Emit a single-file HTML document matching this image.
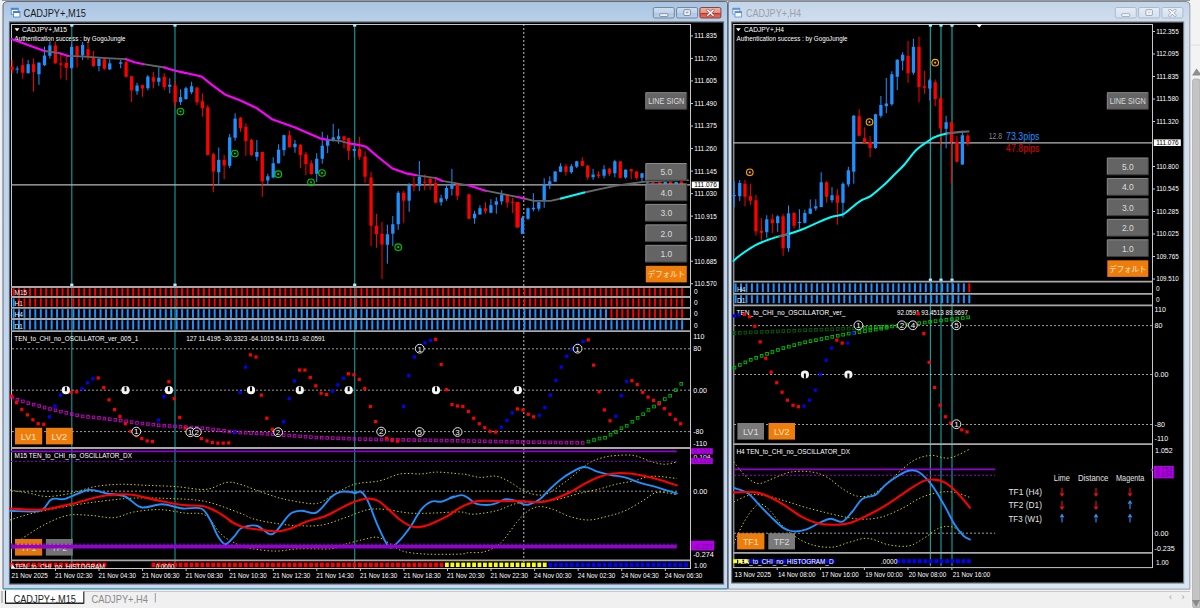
<!DOCTYPE html><html><head><meta charset="utf-8"><title>CADJPY+</title>
<style>html,body{margin:0;padding:0;background:#f0f0f0;overflow:hidden}svg{display:block}text{font-family:"Liberation Sans","Noto Sans CJK JP",sans-serif}</style></head><body>
<svg width="1200" height="608" viewBox="0 0 1200 608">
<defs>
<linearGradient id="fa" x1="0" y1="0" x2="0" y2="1"><stop offset="0" stop-color="#a9c4e2"/><stop offset="0.04" stop-color="#bcd2ea"/><stop offset="1" stop-color="#c6d9ee"/></linearGradient>
<linearGradient id="fi" x1="0" y1="0" x2="0" y2="1"><stop offset="0" stop-color="#c4d5e9"/><stop offset="0.04" stop-color="#d2dfee"/><stop offset="1" stop-color="#dae5f2"/></linearGradient>
<linearGradient id="btn" x1="0" y1="0" x2="0" y2="1"><stop offset="0" stop-color="#d0dff0"/><stop offset="0.5" stop-color="#c0d3ea"/><stop offset="0.5" stop-color="#afc6e1"/><stop offset="1" stop-color="#bdd0e8"/></linearGradient>
<linearGradient id="btnx" x1="0" y1="0" x2="0" y2="1"><stop offset="0" stop-color="#ecb3a5"/><stop offset="0.5" stop-color="#e59484"/><stop offset="0.5" stop-color="#dc4f44"/><stop offset="1" stop-color="#e66a5e"/></linearGradient>
<linearGradient id="btni" x1="0" y1="0" x2="0" y2="1"><stop offset="0" stop-color="#e4edf7"/><stop offset="1" stop-color="#d3e0ef"/></linearGradient>
</defs>
<rect x="0.00" y="0.00" width="1200.00" height="608.00" fill="#f0f0f0" />
<rect x="2.00" y="0.00" width="1188.00" height="0.90" fill="#8e8e8e" />
<rect x="720.00" y="1.50" width="14.00" height="10.00" fill="#c0d3e9" />
<path d="M3,588.8 V6 Q3,1.5 8,1.5 H725.5 Q727.5,1.5 727.5,3.5 V588.8 Z" fill="url(#fa)" stroke="#5e6b7c" stroke-width="1"/>
<rect x="9.50" y="22.00" width="714.00" height="562.00" fill="#000" stroke="#5a6470" stroke-width="1.2"/>
<path d="M728.5,589.2 V1.5 H1185 Q1190,1.5 1190,6 V589.2 Z" fill="url(#fi)" stroke="#808a98" stroke-width="1"/>
<rect x="731.60" y="22.00" width="452.00" height="561.00" fill="#000" stroke="#707a86" stroke-width="1.2"/>
<rect x="0.00" y="589.70" width="1200.00" height="18.30" fill="#f0f0f0" />
<line x1="3.00" y1="588.80" x2="727.50" y2="588.80" stroke="#4fa3c0" stroke-width="1.3" />
<rect x="1190.50" y="0.00" width="9.50" height="608.00" fill="#f3f3f3" />
<rect x="1192.60" y="79.00" width="7.40" height="529.00" fill="#c4c4c4" rx="2" stroke="#a8a8a8" stroke-width="0.8"/>
<path d="M1192,75.5 L1196.5,68.5 L1200,73 V75.5 Z" fill="#8e8e8e"/>
<path d="M1192,600 H1200 L1196,607 Z" fill="#8a8a8a"/>
<line x1="1190.00" y1="45.00" x2="1200.00" y2="45.00" stroke="#dcdcdc" stroke-width="1" />
<g opacity="1"><rect x="11.2" y="8.2" width="7" height="6" fill="#fff" stroke="#3a7bd0" stroke-width="0.8"/><rect x="11.2" y="8.2" width="7" height="1.6" fill="#3a7bd0"/><rect x="13.399999999999999" y="11.399999999999999" width="6.5" height="5.6" fill="#fff" stroke="#3a7bd0" stroke-width="0.8"/><rect x="13.399999999999999" y="11.399999999999999" width="6.5" height="1.6" fill="#3a7bd0"/></g>
<text x="23.5" y="17.0" font-size="11.3" fill="#1a1a1a" text-anchor="start" font-weight="normal" textLength="62.5" lengthAdjust="spacingAndGlyphs" >CADJPY+,M15</text>
<g opacity="0.8"><rect x="732.8" y="8.2" width="7" height="6" fill="#fff" stroke="#3a7bd0" stroke-width="0.8"/><rect x="732.8" y="8.2" width="7" height="1.6" fill="#3a7bd0"/><rect x="735.0" y="11.399999999999999" width="6.5" height="5.6" fill="#fff" stroke="#3a7bd0" stroke-width="0.8"/><rect x="735.0" y="11.399999999999999" width="6.5" height="1.6" fill="#3a7bd0"/></g>
<text x="746.0" y="17.0" font-size="11.3" fill="#9aa0a8" text-anchor="start" font-weight="normal" textLength="55.0" lengthAdjust="spacingAndGlyphs" >CADJPY+,H4</text>
<rect x="653.30" y="7.50" width="21.00" height="10.50" fill="url(#btn)" rx="1.5" stroke="#6c7f99" stroke-width="0.9"/>
<rect x="659.80" y="13.75" width="8.00" height="2.60" fill="#fff" stroke="#5a6a80" stroke-width="0.7" rx="0.5"/>
<rect x="676.60" y="7.50" width="21.00" height="10.50" fill="url(#btn)" rx="1.5" stroke="#6c7f99" stroke-width="0.9"/>
<rect x="683.90" y="9.75" width="6.40" height="5.60" fill="#fff" stroke="#5a6a80" stroke-width="0.8" rx="0.6"/>
<rect x="685.70" y="11.55" width="2.80" height="1.80" fill="#8fa3bd" />
<rect x="699.90" y="7.50" width="21.00" height="10.50" fill="url(#btnx)" rx="1.5" stroke="#7a3a34" stroke-width="0.9"/>
<line x1="701.40" y1="13.55" x2="719.40" y2="13.55" stroke="#b8302a" stroke-width="1" />
<path d="M707.6999999999999,10.25 L713.1,15.25 M713.1,10.25 L707.6999999999999,15.25" stroke="#6a4a48" stroke-width="2.8" stroke-linecap="round" opacity="0.7"/>
<path d="M707.6999999999999,10.25 L713.1,15.25 M713.1,10.25 L707.6999999999999,15.25" stroke="#fff" stroke-width="1.5" stroke-linecap="round"/>
<rect x="1115.30" y="7.50" width="21.00" height="10.50" fill="url(#btni)" rx="1.5" stroke="#a9b6c7" stroke-width="0.9"/>
<rect x="1121.80" y="13.75" width="8.00" height="2.60" fill="#fff" stroke="#828d9c" stroke-width="0.7" rx="0.5"/>
<rect x="1138.60" y="7.50" width="21.00" height="10.50" fill="url(#btni)" rx="1.5" stroke="#a9b6c7" stroke-width="0.9"/>
<rect x="1145.90" y="9.75" width="6.40" height="5.60" fill="#fff" stroke="#828d9c" stroke-width="0.8" rx="0.6"/>
<rect x="1147.70" y="11.55" width="2.80" height="1.80" fill="#c3cedb" />
<rect x="1161.90" y="7.50" width="21.00" height="10.50" fill="url(#btni)" rx="1.5" stroke="#a9b6c7" stroke-width="0.9"/>
<path d="M1169.6999999999998,10.25 L1175.1,15.25 M1175.1,10.25 L1169.6999999999998,15.25" stroke="#7a8594" stroke-width="2.8" stroke-linecap="round" opacity="0.7"/>
<path d="M1169.6999999999998,10.25 L1175.1,15.25 M1175.1,10.25 L1169.6999999999998,15.25" stroke="#fff" stroke-width="1.5" stroke-linecap="round"/>
<line x1="11.50" y1="24.00" x2="11.50" y2="568.50" stroke="#c8c8c8" stroke-width="1" />
<line x1="11.00" y1="24.50" x2="690.50" y2="24.50" stroke="#c8c8c8" stroke-width="1" />
<line x1="690.50" y1="24.00" x2="690.50" y2="569.00" stroke="#c8c8c8" stroke-width="1" />
<line x1="11.00" y1="568.50" x2="690.50" y2="568.50" stroke="#c8c8c8" stroke-width="1" />
<path d="M14.5,28.3 h5 l-2.5,3 z" fill="#fff"/>
<text x="22.0" y="32.4" font-size="7.3" fill="#fff" text-anchor="start" font-weight="normal" textLength="45.0" lengthAdjust="spacingAndGlyphs" >CADJPY+,M15</text>
<text x="14.5" y="41.0" font-size="7.3" fill="#fff" text-anchor="start" font-weight="normal" textLength="111.0" lengthAdjust="spacingAndGlyphs" >Authentication success : by GogoJungle</text>
<line x1="71.80" y1="24.00" x2="71.80" y2="286.00" stroke="#129a9a" stroke-width="1.15" />
<rect x="70.20" y="24.00" width="3.20" height="2.60" fill="#aef" />
<rect x="70.20" y="283.60" width="3.20" height="2.60" fill="#aef" />
<line x1="71.80" y1="287.00" x2="71.80" y2="568.00" stroke="#129a9a" stroke-width="1.1" />
<line x1="175.00" y1="24.00" x2="175.00" y2="286.00" stroke="#129a9a" stroke-width="1.15" />
<rect x="173.40" y="24.00" width="3.20" height="2.60" fill="#aef" />
<rect x="173.40" y="283.60" width="3.20" height="2.60" fill="#aef" />
<line x1="175.00" y1="287.00" x2="175.00" y2="568.00" stroke="#129a9a" stroke-width="1.1" />
<line x1="354.70" y1="24.00" x2="354.70" y2="286.00" stroke="#129a9a" stroke-width="1.15" />
<rect x="353.10" y="24.00" width="3.20" height="2.60" fill="#aef" />
<rect x="353.10" y="283.60" width="3.20" height="2.60" fill="#aef" />
<line x1="354.70" y1="287.00" x2="354.70" y2="568.00" stroke="#129a9a" stroke-width="1.1" />
<line x1="523.80" y1="24.00" x2="523.80" y2="568.00" stroke="#e8e8e8" stroke-width="0.85" stroke-dasharray="2,2"/>
<line x1="11.00" y1="184.90" x2="690.50" y2="184.90" stroke="#b8b8b8" stroke-width="1.2" />
<line x1="12.10" y1="60.00" x2="12.10" y2="73.50" stroke="#ff0000" stroke-width="1" />
<rect x="10.45" y="66.75" width="3.30" height="3.00" fill="#ff0000" />
<line x1="17.20" y1="66.30" x2="17.20" y2="73.50" stroke="#1e90ff" stroke-width="1" />
<rect x="15.55" y="68.55" width="3.30" height="1.00" fill="#1e90ff" />
<line x1="22.75" y1="58.20" x2="22.75" y2="78.75" stroke="#ff0000" stroke-width="1" />
<rect x="21.10" y="65.25" width="3.30" height="7.50" fill="#ff0000" />
<line x1="28.15" y1="60.00" x2="28.15" y2="73.50" stroke="#1e90ff" stroke-width="1" />
<rect x="26.50" y="64.20" width="3.30" height="9.00" fill="#1e90ff" />
<line x1="33.55" y1="58.50" x2="33.55" y2="91.50" stroke="#ff0000" stroke-width="1" />
<rect x="31.90" y="64.20" width="3.30" height="7.80" fill="#ff0000" />
<line x1="38.95" y1="62.25" x2="38.95" y2="84.75" stroke="#1e90ff" stroke-width="1" />
<rect x="37.30" y="62.70" width="3.30" height="11.55" fill="#1e90ff" />
<line x1="44.50" y1="46.50" x2="44.50" y2="66.00" stroke="#1e90ff" stroke-width="1" />
<rect x="42.85" y="55.50" width="3.30" height="9.75" fill="#1e90ff" />
<line x1="49.90" y1="41.25" x2="49.90" y2="58.50" stroke="#1e90ff" stroke-width="1" />
<rect x="48.25" y="45.45" width="3.30" height="10.35" fill="#1e90ff" />
<line x1="55.30" y1="41.70" x2="55.30" y2="63.75" stroke="#ff0000" stroke-width="1" />
<rect x="53.65" y="45.45" width="3.30" height="17.85" fill="#ff0000" />
<line x1="60.85" y1="53.25" x2="60.85" y2="78.75" stroke="#ff0000" stroke-width="1" />
<rect x="59.20" y="63.30" width="3.30" height="1.50" fill="#ff0000" />
<line x1="66.25" y1="56.25" x2="66.25" y2="80.25" stroke="#ff0000" stroke-width="1" />
<rect x="64.60" y="63.00" width="3.30" height="4.80" fill="#ff0000" />
<line x1="71.65" y1="43.50" x2="71.65" y2="69.00" stroke="#1e90ff" stroke-width="1" />
<rect x="70.00" y="46.95" width="3.30" height="21.00" fill="#1e90ff" />
<line x1="77.05" y1="45.75" x2="77.05" y2="67.50" stroke="#ff0000" stroke-width="1" />
<rect x="75.40" y="46.20" width="3.30" height="9.30" fill="#ff0000" />
<line x1="82.60" y1="42.00" x2="82.60" y2="60.00" stroke="#1e90ff" stroke-width="1" />
<rect x="80.95" y="45.00" width="3.30" height="10.50" fill="#1e90ff" />
<line x1="88.00" y1="43.20" x2="88.00" y2="60.00" stroke="#ff0000" stroke-width="1" />
<rect x="86.35" y="49.20" width="3.30" height="6.60" fill="#ff0000" />
<line x1="93.40" y1="51.00" x2="93.40" y2="66.75" stroke="#ff0000" stroke-width="1" />
<rect x="91.75" y="57.30" width="3.30" height="8.70" fill="#ff0000" />
<line x1="98.95" y1="58.20" x2="98.95" y2="71.25" stroke="#1e90ff" stroke-width="1" />
<rect x="97.30" y="58.80" width="3.30" height="7.20" fill="#1e90ff" />
<line x1="104.35" y1="58.80" x2="104.35" y2="69.75" stroke="#ff0000" stroke-width="1" />
<rect x="102.70" y="59.25" width="3.30" height="9.45" fill="#ff0000" />
<line x1="109.75" y1="59.25" x2="109.75" y2="70.20" stroke="#1e90ff" stroke-width="1" />
<rect x="108.10" y="63.30" width="3.30" height="6.00" fill="#1e90ff" />
<line x1="120.70" y1="60.00" x2="120.70" y2="68.25" stroke="#1e90ff" stroke-width="1" />
<rect x="119.05" y="62.25" width="3.30" height="1.50" fill="#1e90ff" />
<line x1="126.10" y1="57.75" x2="126.10" y2="77.25" stroke="#ff0000" stroke-width="1" />
<rect x="124.45" y="62.25" width="3.30" height="14.55" fill="#ff0000" />
<line x1="131.65" y1="76.20" x2="131.65" y2="102.00" stroke="#ff0000" stroke-width="1" />
<rect x="130.00" y="76.20" width="3.30" height="14.10" fill="#ff0000" />
<line x1="137.05" y1="82.80" x2="137.05" y2="94.80" stroke="#1e90ff" stroke-width="1" />
<rect x="135.40" y="85.50" width="3.30" height="5.70" fill="#1e90ff" />
<line x1="142.45" y1="84.75" x2="142.45" y2="96.75" stroke="#ff0000" stroke-width="1" />
<rect x="140.80" y="85.20" width="3.30" height="3.30" fill="#ff0000" />
<line x1="147.85" y1="75.00" x2="147.85" y2="90.30" stroke="#1e90ff" stroke-width="1" />
<rect x="146.20" y="76.50" width="3.30" height="11.70" fill="#1e90ff" />
<line x1="153.40" y1="72.00" x2="153.40" y2="88.50" stroke="#ff0000" stroke-width="1" />
<rect x="151.75" y="77.25" width="3.30" height="4.50" fill="#ff0000" />
<line x1="158.80" y1="67.50" x2="158.80" y2="85.80" stroke="#1e90ff" stroke-width="1" />
<rect x="157.15" y="77.70" width="3.30" height="4.05" fill="#1e90ff" />
<line x1="164.20" y1="73.20" x2="164.20" y2="90.30" stroke="#ff0000" stroke-width="1" />
<rect x="162.55" y="76.80" width="3.30" height="10.20" fill="#ff0000" />
<line x1="169.75" y1="78.30" x2="169.75" y2="93.30" stroke="#1e90ff" stroke-width="1" />
<rect x="168.10" y="84.75" width="3.30" height="1.95" fill="#1e90ff" />
<line x1="175.15" y1="80.70" x2="175.15" y2="107.25" stroke="#ff0000" stroke-width="1" />
<rect x="173.50" y="85.50" width="3.30" height="16.50" fill="#ff0000" />
<line x1="180.55" y1="89.25" x2="180.55" y2="105.00" stroke="#1e90ff" stroke-width="1" />
<rect x="178.90" y="97.20" width="3.30" height="4.80" fill="#1e90ff" />
<line x1="185.95" y1="86.70" x2="185.95" y2="99.75" stroke="#1e90ff" stroke-width="1" />
<rect x="184.30" y="88.20" width="3.30" height="10.80" fill="#1e90ff" />
<line x1="191.60" y1="81.75" x2="191.60" y2="94.20" stroke="#1e90ff" stroke-width="1" />
<rect x="189.95" y="86.25" width="3.30" height="6.00" fill="#1e90ff" />
<line x1="197.00" y1="87.45" x2="197.00" y2="105.00" stroke="#ff0000" stroke-width="1" />
<rect x="195.35" y="87.45" width="3.30" height="14.85" fill="#ff0000" />
<line x1="202.40" y1="93.30" x2="202.40" y2="116.70" stroke="#ff0000" stroke-width="1" />
<rect x="200.75" y="101.25" width="3.30" height="7.05" fill="#ff0000" />
<line x1="207.80" y1="105.05" x2="207.80" y2="155.00" stroke="#ff0000" stroke-width="1" />
<rect x="206.15" y="107.30" width="3.30" height="47.70" fill="#ff0000" />
<line x1="213.35" y1="152.75" x2="213.35" y2="192.20" stroke="#ff0000" stroke-width="1" />
<rect x="211.70" y="154.25" width="3.30" height="17.25" fill="#ff0000" />
<line x1="218.75" y1="147.50" x2="218.75" y2="184.25" stroke="#1e90ff" stroke-width="1" />
<rect x="217.10" y="159.80" width="3.30" height="12.45" fill="#1e90ff" />
<line x1="224.15" y1="155.00" x2="224.15" y2="179.00" stroke="#ff0000" stroke-width="1" />
<rect x="222.50" y="159.80" width="3.30" height="5.70" fill="#ff0000" />
<line x1="229.70" y1="134.00" x2="229.70" y2="168.20" stroke="#1e90ff" stroke-width="1" />
<rect x="228.05" y="137.30" width="3.30" height="28.50" fill="#1e90ff" />
<line x1="235.10" y1="113.30" x2="235.10" y2="140.75" stroke="#1e90ff" stroke-width="1" />
<rect x="233.45" y="118.55" width="3.30" height="19.20" fill="#1e90ff" />
<line x1="240.50" y1="117.05" x2="240.50" y2="131.75" stroke="#ff0000" stroke-width="1" />
<rect x="238.85" y="117.80" width="3.30" height="10.50" fill="#ff0000" />
<line x1="245.90" y1="123.35" x2="245.90" y2="155.75" stroke="#ff0000" stroke-width="1" />
<rect x="244.25" y="126.80" width="3.30" height="14.25" fill="#ff0000" />
<line x1="251.45" y1="138.80" x2="251.45" y2="155.75" stroke="#ff0000" stroke-width="1" />
<rect x="249.80" y="140.00" width="3.30" height="15.00" fill="#ff0000" />
<line x1="256.85" y1="140.00" x2="256.85" y2="160.70" stroke="#1e90ff" stroke-width="1" />
<rect x="255.20" y="152.00" width="3.30" height="4.80" fill="#1e90ff" />
<line x1="262.25" y1="152.00" x2="262.25" y2="196.70" stroke="#ff0000" stroke-width="1" />
<rect x="260.60" y="152.00" width="3.30" height="29.25" fill="#ff0000" />
<line x1="267.80" y1="173.75" x2="267.80" y2="184.25" stroke="#1e90ff" stroke-width="1" />
<rect x="266.15" y="176.30" width="3.30" height="4.20" fill="#1e90ff" />
<line x1="273.20" y1="157.25" x2="273.20" y2="178.25" stroke="#1e90ff" stroke-width="1" />
<rect x="271.55" y="163.25" width="3.30" height="14.25" fill="#1e90ff" />
<line x1="278.60" y1="144.20" x2="278.60" y2="163.70" stroke="#1e90ff" stroke-width="1" />
<rect x="276.95" y="149.75" width="3.30" height="13.50" fill="#1e90ff" />
<line x1="284.00" y1="134.75" x2="284.00" y2="155.75" stroke="#1e90ff" stroke-width="1" />
<rect x="282.35" y="135.20" width="3.30" height="15.00" fill="#1e90ff" />
<line x1="289.55" y1="130.70" x2="289.55" y2="147.50" stroke="#ff0000" stroke-width="1" />
<rect x="287.90" y="135.20" width="3.30" height="12.00" fill="#ff0000" />
<line x1="294.95" y1="140.00" x2="294.95" y2="152.75" stroke="#1e90ff" stroke-width="1" />
<rect x="293.30" y="143.75" width="3.30" height="3.45" fill="#1e90ff" />
<line x1="300.35" y1="144.20" x2="300.35" y2="168.20" stroke="#ff0000" stroke-width="1" />
<rect x="298.70" y="144.80" width="3.30" height="10.20" fill="#ff0000" />
<line x1="305.90" y1="152.00" x2="305.90" y2="175.25" stroke="#ff0000" stroke-width="1" />
<rect x="304.25" y="154.25" width="3.30" height="9.75" fill="#ff0000" />
<line x1="311.30" y1="160.25" x2="311.30" y2="174.50" stroke="#ff0000" stroke-width="1" />
<rect x="309.65" y="163.25" width="3.30" height="10.95" fill="#ff0000" />
<line x1="316.70" y1="153.20" x2="316.70" y2="182.00" stroke="#1e90ff" stroke-width="1" />
<rect x="315.05" y="158.75" width="3.30" height="15.00" fill="#1e90ff" />
<line x1="322.25" y1="131.75" x2="322.25" y2="163.70" stroke="#1e90ff" stroke-width="1" />
<rect x="320.60" y="145.70" width="3.30" height="13.05" fill="#1e90ff" />
<line x1="327.65" y1="135.20" x2="327.65" y2="153.20" stroke="#1e90ff" stroke-width="1" />
<rect x="326.00" y="140.00" width="3.30" height="5.70" fill="#1e90ff" />
<line x1="333.20" y1="123.80" x2="333.20" y2="141.50" stroke="#1e90ff" stroke-width="1" />
<rect x="331.55" y="137.30" width="3.30" height="2.70" fill="#1e90ff" />
<line x1="338.60" y1="128.75" x2="338.60" y2="143.75" stroke="#1e90ff" stroke-width="1" />
<rect x="336.95" y="136.25" width="3.30" height="3.00" fill="#1e90ff" />
<line x1="344.00" y1="136.25" x2="344.00" y2="148.25" stroke="#ff0000" stroke-width="1" />
<rect x="342.35" y="136.25" width="3.30" height="3.75" fill="#ff0000" />
<line x1="348.70" y1="137.75" x2="348.70" y2="160.25" stroke="#ff0000" stroke-width="1" />
<rect x="347.05" y="138.20" width="3.30" height="12.60" fill="#ff0000" />
<line x1="354.25" y1="146.00" x2="354.25" y2="157.25" stroke="#1e90ff" stroke-width="1" />
<rect x="352.60" y="149.00" width="3.30" height="1.80" fill="#1e90ff" />
<line x1="359.65" y1="136.70" x2="359.65" y2="159.80" stroke="#ff0000" stroke-width="1" />
<rect x="358.00" y="149.00" width="3.30" height="7.80" fill="#ff0000" />
<line x1="365.05" y1="151.25" x2="365.05" y2="182.75" stroke="#ff0000" stroke-width="1" />
<rect x="363.40" y="156.50" width="3.30" height="20.25" fill="#ff0000" />
<line x1="413.95" y1="176.75" x2="413.95" y2="191.30" stroke="#ff0000" stroke-width="1" />
<rect x="412.30" y="184.25" width="3.30" height="2.25" fill="#ff0000" />
<line x1="419.35" y1="161.00" x2="419.35" y2="191.00" stroke="#1e90ff" stroke-width="1" />
<rect x="417.70" y="176.75" width="3.30" height="9.00" fill="#1e90ff" />
<line x1="424.75" y1="174.50" x2="424.75" y2="190.25" stroke="#ff0000" stroke-width="1" />
<rect x="423.10" y="181.70" width="3.30" height="1.00" fill="#ff0000" />
<line x1="430.15" y1="177.50" x2="430.15" y2="189.80" stroke="#ff0000" stroke-width="1" />
<rect x="428.50" y="178.70" width="3.30" height="4.80" fill="#ff0000" />
<line x1="435.70" y1="179.00" x2="435.70" y2="203.00" stroke="#ff0000" stroke-width="1" />
<rect x="434.05" y="183.20" width="3.30" height="19.50" fill="#ff0000" />
<line x1="441.10" y1="194.75" x2="441.10" y2="205.70" stroke="#1e90ff" stroke-width="1" />
<rect x="439.45" y="198.20" width="3.30" height="4.05" fill="#1e90ff" />
<line x1="446.50" y1="184.25" x2="446.50" y2="200.75" stroke="#1e90ff" stroke-width="1" />
<rect x="444.85" y="188.00" width="3.30" height="10.80" fill="#1e90ff" />
<line x1="451.90" y1="168.80" x2="451.90" y2="195.50" stroke="#1e90ff" stroke-width="1" />
<rect x="450.25" y="184.25" width="3.30" height="4.50" fill="#1e90ff" />
<line x1="457.30" y1="183.80" x2="457.30" y2="200.00" stroke="#ff0000" stroke-width="1" />
<rect x="455.65" y="184.25" width="3.30" height="11.55" fill="#ff0000" />
<line x1="371.05" y1="171.75" x2="371.05" y2="246.00" stroke="#ff0000" stroke-width="1" />
<rect x="369.40" y="177.45" width="3.30" height="48.30" fill="#ff0000" />
<line x1="376.45" y1="213.75" x2="376.45" y2="247.80" stroke="#ff0000" stroke-width="1" />
<rect x="374.80" y="225.75" width="3.30" height="8.55" fill="#ff0000" />
<line x1="382.00" y1="222.00" x2="382.00" y2="279.00" stroke="#ff0000" stroke-width="1" />
<rect x="380.35" y="233.70" width="3.30" height="10.80" fill="#ff0000" />
<line x1="387.40" y1="224.70" x2="387.40" y2="263.70" stroke="#1e90ff" stroke-width="1" />
<rect x="385.75" y="234.30" width="3.30" height="10.50" fill="#1e90ff" />
<line x1="392.80" y1="216.00" x2="392.80" y2="246.00" stroke="#1e90ff" stroke-width="1" />
<rect x="391.15" y="224.25" width="3.30" height="9.45" fill="#1e90ff" />
<line x1="398.20" y1="190.95" x2="398.20" y2="229.80" stroke="#1e90ff" stroke-width="1" />
<rect x="396.55" y="192.75" width="3.30" height="31.50" fill="#1e90ff" />
<line x1="403.75" y1="190.65" x2="403.75" y2="222.75" stroke="#ff0000" stroke-width="1" />
<rect x="402.10" y="192.75" width="3.30" height="7.95" fill="#ff0000" />
<line x1="409.15" y1="183.15" x2="409.15" y2="211.80" stroke="#1e90ff" stroke-width="1" />
<rect x="407.50" y="184.65" width="3.30" height="16.05" fill="#1e90ff" />
<line x1="469.00" y1="194.25" x2="469.00" y2="219.00" stroke="#ff0000" stroke-width="1" />
<rect x="467.35" y="194.25" width="3.30" height="24.45" fill="#ff0000" />
<line x1="474.55" y1="210.75" x2="474.55" y2="223.80" stroke="#1e90ff" stroke-width="1" />
<rect x="472.90" y="213.75" width="3.30" height="4.50" fill="#1e90ff" />
<line x1="479.95" y1="205.20" x2="479.95" y2="214.50" stroke="#1e90ff" stroke-width="1" />
<rect x="478.30" y="208.20" width="3.30" height="6.30" fill="#1e90ff" />
<line x1="485.50" y1="202.20" x2="485.50" y2="213.75" stroke="#ff0000" stroke-width="1" />
<rect x="483.85" y="208.20" width="3.30" height="3.00" fill="#ff0000" />
<line x1="490.90" y1="199.20" x2="490.90" y2="213.30" stroke="#1e90ff" stroke-width="1" />
<rect x="489.25" y="205.20" width="3.30" height="7.50" fill="#1e90ff" />
<line x1="496.30" y1="197.25" x2="496.30" y2="213.75" stroke="#1e90ff" stroke-width="1" />
<rect x="494.65" y="201.30" width="3.30" height="3.45" fill="#1e90ff" />
<line x1="501.70" y1="190.20" x2="501.70" y2="204.75" stroke="#1e90ff" stroke-width="1" />
<rect x="500.05" y="194.70" width="3.30" height="6.60" fill="#1e90ff" />
<line x1="507.25" y1="194.70" x2="507.25" y2="207.75" stroke="#ff0000" stroke-width="1" />
<rect x="505.60" y="195.00" width="3.30" height="7.50" fill="#ff0000" />
<line x1="512.65" y1="197.70" x2="512.65" y2="213.00" stroke="#ff0000" stroke-width="1" />
<rect x="511.00" y="201.75" width="3.30" height="1.05" fill="#ff0000" />
<line x1="518.05" y1="202.20" x2="518.05" y2="227.70" stroke="#ff0000" stroke-width="1" />
<rect x="516.40" y="202.20" width="3.30" height="25.05" fill="#ff0000" />
<line x1="517.05" y1="202.25" x2="517.05" y2="227.75" stroke="#ff0000" stroke-width="1" />
<rect x="515.40" y="202.25" width="3.30" height="25.05" fill="#ff0000" />
<line x1="522.45" y1="215.75" x2="522.45" y2="233.90" stroke="#1e90ff" stroke-width="1" />
<rect x="520.80" y="217.70" width="3.30" height="16.20" fill="#1e90ff" />
<line x1="528.00" y1="207.50" x2="528.00" y2="219.80" stroke="#1e90ff" stroke-width="1" />
<rect x="526.35" y="208.25" width="3.30" height="10.50" fill="#1e90ff" />
<line x1="533.40" y1="193.25" x2="533.40" y2="211.25" stroke="#1e90ff" stroke-width="1" />
<rect x="531.75" y="207.80" width="3.30" height="1.50" fill="#1e90ff" />
<line x1="538.80" y1="201.80" x2="538.80" y2="211.25" stroke="#1e90ff" stroke-width="1" />
<rect x="537.15" y="202.25" width="3.30" height="6.45" fill="#1e90ff" />
<line x1="544.20" y1="178.25" x2="544.20" y2="207.80" stroke="#1e90ff" stroke-width="1" />
<rect x="542.55" y="184.25" width="3.30" height="15.75" fill="#1e90ff" />
<line x1="549.75" y1="176.30" x2="549.75" y2="189.20" stroke="#1e90ff" stroke-width="1" />
<rect x="548.10" y="181.25" width="3.30" height="3.00" fill="#1e90ff" />
<line x1="555.15" y1="171.20" x2="555.15" y2="182.00" stroke="#1e90ff" stroke-width="1" />
<rect x="553.50" y="171.50" width="3.30" height="10.20" fill="#1e90ff" />
<line x1="560.55" y1="163.25" x2="560.55" y2="172.25" stroke="#1e90ff" stroke-width="1" />
<rect x="558.90" y="166.25" width="3.30" height="5.55" fill="#1e90ff" />
<line x1="565.95" y1="164.00" x2="565.95" y2="175.70" stroke="#ff0000" stroke-width="1" />
<rect x="564.30" y="166.25" width="3.30" height="5.55" fill="#ff0000" />
<line x1="571.35" y1="164.00" x2="571.35" y2="173.75" stroke="#1e90ff" stroke-width="1" />
<rect x="569.70" y="166.25" width="3.30" height="6.00" fill="#1e90ff" />
<line x1="576.75" y1="160.70" x2="576.75" y2="168.20" stroke="#1e90ff" stroke-width="1" />
<rect x="575.10" y="161.30" width="3.30" height="5.40" fill="#1e90ff" />
<line x1="582.30" y1="157.25" x2="582.30" y2="166.25" stroke="#ff0000" stroke-width="1" />
<rect x="580.65" y="161.00" width="3.30" height="4.80" fill="#ff0000" />
<line x1="587.70" y1="164.75" x2="587.70" y2="179.75" stroke="#ff0000" stroke-width="1" />
<rect x="586.05" y="165.80" width="3.30" height="11.40" fill="#ff0000" />
<line x1="593.10" y1="168.80" x2="593.10" y2="179.75" stroke="#1e90ff" stroke-width="1" />
<rect x="591.45" y="174.50" width="3.30" height="2.70" fill="#1e90ff" />
<line x1="598.50" y1="171.20" x2="598.50" y2="178.25" stroke="#ff0000" stroke-width="1" />
<rect x="596.85" y="174.50" width="3.30" height="1.50" fill="#ff0000" />
<line x1="604.05" y1="165.20" x2="604.05" y2="178.25" stroke="#1e90ff" stroke-width="1" />
<rect x="602.40" y="169.25" width="3.30" height="6.45" fill="#1e90ff" />
<line x1="609.45" y1="167.75" x2="609.45" y2="176.00" stroke="#ff0000" stroke-width="1" />
<rect x="607.80" y="168.80" width="3.30" height="4.95" fill="#ff0000" />
<line x1="614.85" y1="159.80" x2="614.85" y2="177.20" stroke="#1e90ff" stroke-width="1" />
<rect x="613.20" y="161.30" width="3.30" height="12.00" fill="#1e90ff" />
<line x1="620.25" y1="161.30" x2="620.25" y2="178.25" stroke="#ff0000" stroke-width="1" />
<rect x="618.60" y="161.30" width="3.30" height="16.50" fill="#ff0000" />
<line x1="625.65" y1="169.25" x2="625.65" y2="178.70" stroke="#1e90ff" stroke-width="1" />
<rect x="624.00" y="169.70" width="3.30" height="7.80" fill="#1e90ff" />
<line x1="631.20" y1="168.80" x2="631.20" y2="179.00" stroke="#ff0000" stroke-width="1" />
<rect x="629.55" y="169.25" width="3.30" height="1.95" fill="#ff0000" />
<line x1="636.60" y1="171.20" x2="636.60" y2="179.75" stroke="#ff0000" stroke-width="1" />
<rect x="634.95" y="171.50" width="3.30" height="6.30" fill="#ff0000" />
<line x1="642.00" y1="172.70" x2="642.00" y2="182.00" stroke="#1e90ff" stroke-width="1" />
<rect x="640.35" y="173.30" width="3.30" height="4.50" fill="#1e90ff" />
<line x1="647.40" y1="178.70" x2="647.40" y2="183.50" stroke="#1e90ff" stroke-width="1" />
<rect x="645.75" y="179.30" width="3.30" height="3.45" fill="#1e90ff" />
<line x1="652.95" y1="180.20" x2="652.95" y2="183.80" stroke="#ff0000" stroke-width="1" />
<rect x="651.30" y="180.50" width="3.30" height="3.00" fill="#ff0000" />
<line x1="659.70" y1="181.70" x2="659.70" y2="184.55" stroke="#ff0000" stroke-width="1" />
<rect x="658.05" y="182.00" width="3.30" height="2.25" fill="#ff0000" />
<line x1="665.25" y1="181.70" x2="665.25" y2="184.55" stroke="#1e90ff" stroke-width="1" />
<rect x="663.60" y="182.00" width="3.30" height="2.25" fill="#1e90ff" />
<line x1="670.50" y1="181.40" x2="670.50" y2="184.55" stroke="#ff0000" stroke-width="1" />
<rect x="668.85" y="181.70" width="3.30" height="2.55" fill="#ff0000" />
<line x1="676.20" y1="181.70" x2="676.20" y2="184.55" stroke="#1e90ff" stroke-width="1" />
<rect x="674.55" y="182.00" width="3.30" height="2.25" fill="#1e90ff" />
<line x1="681.45" y1="181.10" x2="681.45" y2="184.55" stroke="#ff0000" stroke-width="1" />
<rect x="679.80" y="181.40" width="3.30" height="2.85" fill="#ff0000" />
<polyline points="44.5,51.0 59.5,53.2" fill="none" stroke="#666" stroke-width="1.8" stroke-linejoin="round" stroke-linecap="round" />
<polyline points="67.8,55.8 85.0,56.7 106.0,58.2 126.2,59.2" fill="none" stroke="#666" stroke-width="1.8" stroke-linejoin="round" stroke-linecap="round" />
<polyline points="143.5,64.2 164.5,67.5" fill="none" stroke="#666" stroke-width="1.8" stroke-linejoin="round" stroke-linecap="round" />
<polyline points="327.5,139.8 340.0,140.8 349.0,143.3" fill="none" stroke="#666" stroke-width="1.8" stroke-linejoin="round" stroke-linecap="round" />
<polyline points="415.8,175.2 436.0,178.2" fill="none" stroke="#666" stroke-width="1.8" stroke-linejoin="round" stroke-linecap="round" />
<polyline points="442.0,180.8 468.2,185.3" fill="none" stroke="#666" stroke-width="1.8" stroke-linejoin="round" stroke-linecap="round" />
<polyline points="485.5,190.7 517.5,197.0" fill="none" stroke="#666" stroke-width="1.8" stroke-linejoin="round" stroke-linecap="round" />
<polyline points="524.2,198.5 534.0,200.8 550.5,200.8 561.0,198.5" fill="none" stroke="#666" stroke-width="1.8" stroke-linejoin="round" stroke-linecap="round" />
<polyline points="584.2,192.5 615.0,185.8 631.5,183.5 645.0,181.7 661.5,180.8 682.5,180.2 688.0,180.2" fill="none" stroke="#666" stroke-width="1.8" stroke-linejoin="round" stroke-linecap="round" />
<polyline points="11.5,39.0 28.0,45.0 44.5,51.0" fill="none" stroke="#ff00ff" stroke-width="2.2" stroke-linejoin="round" stroke-linecap="round" />
<polyline points="59.5,53.2 67.8,55.8" fill="none" stroke="#ff00ff" stroke-width="2.2" stroke-linejoin="round" stroke-linecap="round" />
<polyline points="126.2,59.2 134.5,62.2 143.5,64.2" fill="none" stroke="#ff00ff" stroke-width="2.2" stroke-linejoin="round" stroke-linecap="round" />
<polyline points="164.5,67.5 170.0,69.3 179.5,71.7 185.0,72.8 201.5,76.5 212.0,84.8 225.5,94.8 240.5,100.5 257.0,108.3 272.0,119.2 294.5,127.2 312.5,135.0 320.0,138.3 327.5,139.8" fill="none" stroke="#ff00ff" stroke-width="2.2" stroke-linejoin="round" stroke-linecap="round" />
<polyline points="349.0,143.3 358.0,144.8 366.2,146.8 377.5,156.5 392.5,168.5 406.0,173.3 415.8,175.2" fill="none" stroke="#ff00ff" stroke-width="2.2" stroke-linejoin="round" stroke-linecap="round" />
<polyline points="436.0,178.2 442.0,180.8" fill="none" stroke="#ff00ff" stroke-width="2.2" stroke-linejoin="round" stroke-linecap="round" />
<polyline points="468.2,185.3 485.5,190.7" fill="none" stroke="#ff00ff" stroke-width="2.2" stroke-linejoin="round" stroke-linecap="round" />
<polyline points="517.5,197.0 524.2,198.5" fill="none" stroke="#ff00ff" stroke-width="2.2" stroke-linejoin="round" stroke-linecap="round" />
<polyline points="561.0,198.5 584.2,192.5" fill="none" stroke="#00ffff" stroke-width="2.2" stroke-linejoin="round" stroke-linecap="round" />
<circle cx="180.5" cy="111.5" r="3.3" fill="none" stroke="#00c800" stroke-width="1.1"/><circle cx="180.5" cy="111.5" r="1.1" fill="#00c800"/>
<circle cx="234.8" cy="153.5" r="3.3" fill="none" stroke="#00c800" stroke-width="1.1"/><circle cx="234.8" cy="153.5" r="1.1" fill="#00c800"/>
<circle cx="278.3" cy="174.2" r="3.3" fill="none" stroke="#00c800" stroke-width="1.1"/><circle cx="278.3" cy="174.2" r="1.1" fill="#00c800"/>
<circle cx="311.0" cy="182.3" r="3.3" fill="none" stroke="#00c800" stroke-width="1.1"/><circle cx="311.0" cy="182.3" r="1.1" fill="#00c800"/>
<circle cx="322.0" cy="173.0" r="3.3" fill="none" stroke="#00c800" stroke-width="1.1"/><circle cx="322.0" cy="173.0" r="1.1" fill="#00c800"/>
<circle cx="398.2" cy="247.2" r="3.3" fill="none" stroke="#00c800" stroke-width="1.1"/><circle cx="398.2" cy="247.2" r="1.1" fill="#00c800"/>
<rect x="645.80" y="92.70" width="41.00" height="16.60" fill="#646464" />
<path d="M645.8,109.30000000000001 V92.7 H686.8" fill="none" stroke="#8c8c8c" stroke-width="1"/>
<path d="M645.8,109.30000000000001 H686.8 V92.7" fill="none" stroke="#3c3c3c" stroke-width="1"/>
<text x="666.3" y="104.0" font-size="8.2" fill="#dcdcdc" text-anchor="middle" font-weight="normal" textLength="36.0" lengthAdjust="spacingAndGlyphs" >LINE SIGN</text>
<rect x="645.80" y="163.50" width="41.00" height="16.80" fill="#646464" />
<path d="M645.8,180.3 V163.5 H686.8" fill="none" stroke="#8c8c8c" stroke-width="1"/>
<path d="M645.8,180.3 H686.8 V163.5" fill="none" stroke="#3c3c3c" stroke-width="1"/>
<text x="666.3" y="175.4" font-size="9.6" fill="#dcdcdc" text-anchor="middle" font-weight="normal" textLength="11.8" lengthAdjust="spacingAndGlyphs" >5.0</text>
<rect x="645.80" y="183.95" width="41.00" height="16.80" fill="#646464" />
<path d="M645.8,200.75 V183.95 H686.8" fill="none" stroke="#8c8c8c" stroke-width="1"/>
<path d="M645.8,200.75 H686.8 V183.95" fill="none" stroke="#3c3c3c" stroke-width="1"/>
<text x="666.3" y="195.8" font-size="9.6" fill="#dcdcdc" text-anchor="middle" font-weight="normal" textLength="11.8" lengthAdjust="spacingAndGlyphs" >4.0</text>
<rect x="645.80" y="204.40" width="41.00" height="16.80" fill="#646464" />
<path d="M645.8,221.20000000000002 V204.4 H686.8" fill="none" stroke="#8c8c8c" stroke-width="1"/>
<path d="M645.8,221.20000000000002 H686.8 V204.4" fill="none" stroke="#3c3c3c" stroke-width="1"/>
<text x="666.3" y="216.3" font-size="9.6" fill="#dcdcdc" text-anchor="middle" font-weight="normal" textLength="11.8" lengthAdjust="spacingAndGlyphs" >3.0</text>
<rect x="645.80" y="224.85" width="41.00" height="16.80" fill="#646464" />
<path d="M645.8,241.65 V224.85 H686.8" fill="none" stroke="#8c8c8c" stroke-width="1"/>
<path d="M645.8,241.65 H686.8 V224.85" fill="none" stroke="#3c3c3c" stroke-width="1"/>
<text x="666.3" y="236.7" font-size="9.6" fill="#dcdcdc" text-anchor="middle" font-weight="normal" textLength="11.8" lengthAdjust="spacingAndGlyphs" >2.0</text>
<rect x="645.80" y="245.30" width="41.00" height="16.80" fill="#646464" />
<path d="M645.8,262.1 V245.3 H686.8" fill="none" stroke="#8c8c8c" stroke-width="1"/>
<path d="M645.8,262.1 H686.8 V245.3" fill="none" stroke="#3c3c3c" stroke-width="1"/>
<text x="666.3" y="257.2" font-size="9.6" fill="#dcdcdc" text-anchor="middle" font-weight="normal" textLength="11.8" lengthAdjust="spacingAndGlyphs" >1.0</text>
<rect x="645.80" y="265.80" width="41.00" height="16.60" fill="#ee7d0c" />
<text x="666.3" y="277.0" font-size="8" fill="#ffe9c8" text-anchor="middle" font-weight="normal" textLength="37.0" lengthAdjust="spacingAndGlyphs" >デフォルト</text>
<line x1="690.50" y1="35.90" x2="693.00" y2="35.90" stroke="#c8c8c8" stroke-width="1" />
<text x="694.3" y="38.3" font-size="7.3" fill="#fff" text-anchor="start" font-weight="normal" textLength="22.5" lengthAdjust="spacingAndGlyphs" >111.835</text>
<line x1="690.50" y1="58.43" x2="693.00" y2="58.43" stroke="#c8c8c8" stroke-width="1" />
<text x="694.3" y="60.8" font-size="7.3" fill="#fff" text-anchor="start" font-weight="normal" textLength="22.5" lengthAdjust="spacingAndGlyphs" >111.720</text>
<line x1="690.50" y1="80.96" x2="693.00" y2="80.96" stroke="#c8c8c8" stroke-width="1" />
<text x="694.3" y="83.4" font-size="7.3" fill="#fff" text-anchor="start" font-weight="normal" textLength="22.5" lengthAdjust="spacingAndGlyphs" >111.605</text>
<line x1="690.50" y1="103.49" x2="693.00" y2="103.49" stroke="#c8c8c8" stroke-width="1" />
<text x="694.3" y="105.9" font-size="7.3" fill="#fff" text-anchor="start" font-weight="normal" textLength="22.5" lengthAdjust="spacingAndGlyphs" >111.490</text>
<line x1="690.50" y1="126.02" x2="693.00" y2="126.02" stroke="#c8c8c8" stroke-width="1" />
<text x="694.3" y="128.4" font-size="7.3" fill="#fff" text-anchor="start" font-weight="normal" textLength="22.5" lengthAdjust="spacingAndGlyphs" >111.375</text>
<line x1="690.50" y1="148.55" x2="693.00" y2="148.55" stroke="#c8c8c8" stroke-width="1" />
<text x="694.3" y="151.0" font-size="7.3" fill="#fff" text-anchor="start" font-weight="normal" textLength="22.5" lengthAdjust="spacingAndGlyphs" >111.260</text>
<line x1="690.50" y1="171.08" x2="693.00" y2="171.08" stroke="#c8c8c8" stroke-width="1" />
<text x="694.3" y="173.5" font-size="7.3" fill="#fff" text-anchor="start" font-weight="normal" textLength="22.5" lengthAdjust="spacingAndGlyphs" >111.145</text>
<line x1="690.50" y1="193.61" x2="693.00" y2="193.61" stroke="#c8c8c8" stroke-width="1" />
<text x="694.3" y="196.0" font-size="7.3" fill="#fff" text-anchor="start" font-weight="normal" textLength="22.5" lengthAdjust="spacingAndGlyphs" >111.030</text>
<line x1="690.50" y1="216.14" x2="693.00" y2="216.14" stroke="#c8c8c8" stroke-width="1" />
<text x="694.3" y="218.5" font-size="7.3" fill="#fff" text-anchor="start" font-weight="normal" textLength="22.5" lengthAdjust="spacingAndGlyphs" >110.915</text>
<line x1="690.50" y1="238.67" x2="693.00" y2="238.67" stroke="#c8c8c8" stroke-width="1" />
<text x="694.3" y="241.1" font-size="7.3" fill="#fff" text-anchor="start" font-weight="normal" textLength="22.5" lengthAdjust="spacingAndGlyphs" >110.800</text>
<line x1="690.50" y1="261.20" x2="693.00" y2="261.20" stroke="#c8c8c8" stroke-width="1" />
<text x="694.3" y="263.6" font-size="7.3" fill="#fff" text-anchor="start" font-weight="normal" textLength="22.5" lengthAdjust="spacingAndGlyphs" >110.685</text>
<line x1="690.50" y1="283.73" x2="693.00" y2="283.73" stroke="#c8c8c8" stroke-width="1" />
<text x="694.3" y="286.1" font-size="7.3" fill="#fff" text-anchor="start" font-weight="normal" textLength="22.5" lengthAdjust="spacingAndGlyphs" >110.570</text>
<rect x="691.80" y="181.60" width="27.00" height="6.60" fill="#fff" />
<text x="694.3" y="187.4" font-size="7.3" fill="#000" text-anchor="start" font-weight="normal" textLength="22.5" lengthAdjust="spacingAndGlyphs" >111.076</text>
<rect x="12.60" y="288.20" width="2.00" height="7.60" fill="#ff0000" />
<rect x="18.04" y="288.20" width="2.00" height="7.60" fill="#ff0000" />
<rect x="23.47" y="288.20" width="2.00" height="7.60" fill="#ff0000" />
<rect x="28.91" y="288.20" width="2.00" height="7.60" fill="#ff0000" />
<rect x="34.34" y="288.20" width="2.00" height="7.60" fill="#ff0000" />
<rect x="39.77" y="288.20" width="2.00" height="7.60" fill="#ff0000" />
<rect x="45.21" y="288.20" width="2.00" height="7.60" fill="#ff0000" />
<rect x="50.64" y="288.20" width="2.00" height="7.60" fill="#ff0000" />
<rect x="56.08" y="288.20" width="2.00" height="7.60" fill="#ff0000" />
<rect x="61.52" y="288.20" width="2.00" height="7.60" fill="#ff0000" />
<rect x="66.95" y="288.20" width="2.00" height="7.60" fill="#ff0000" />
<rect x="72.38" y="288.20" width="2.00" height="7.60" fill="#ff0000" />
<rect x="77.82" y="288.20" width="2.00" height="7.60" fill="#ff0000" />
<rect x="83.25" y="288.20" width="2.00" height="7.60" fill="#ff0000" />
<rect x="88.69" y="288.20" width="2.00" height="7.60" fill="#ff0000" />
<rect x="94.12" y="288.20" width="2.00" height="7.60" fill="#ff0000" />
<rect x="99.56" y="288.20" width="2.00" height="7.60" fill="#ff0000" />
<rect x="104.99" y="288.20" width="2.00" height="7.60" fill="#ff0000" />
<rect x="110.43" y="288.20" width="2.00" height="7.60" fill="#ff0000" />
<rect x="115.86" y="288.20" width="2.00" height="7.60" fill="#ff0000" />
<rect x="121.30" y="288.20" width="2.00" height="7.60" fill="#ff0000" />
<rect x="126.73" y="288.20" width="2.00" height="7.60" fill="#ff0000" />
<rect x="132.17" y="288.20" width="2.00" height="7.60" fill="#ff0000" />
<rect x="137.60" y="288.20" width="2.00" height="7.60" fill="#ff0000" />
<rect x="143.04" y="288.20" width="2.00" height="7.60" fill="#ff0000" />
<rect x="148.47" y="288.20" width="2.00" height="7.60" fill="#ff0000" />
<rect x="153.91" y="288.20" width="2.00" height="7.60" fill="#ff0000" />
<rect x="159.34" y="288.20" width="2.00" height="7.60" fill="#ff0000" />
<rect x="164.78" y="288.20" width="2.00" height="7.60" fill="#ff0000" />
<rect x="170.21" y="288.20" width="2.00" height="7.60" fill="#ff0000" />
<rect x="175.65" y="288.20" width="2.00" height="7.60" fill="#ff0000" />
<rect x="181.08" y="288.20" width="2.00" height="7.60" fill="#ff0000" />
<rect x="186.52" y="288.20" width="2.00" height="7.60" fill="#ff0000" />
<rect x="191.95" y="288.20" width="2.00" height="7.60" fill="#ff0000" />
<rect x="197.39" y="288.20" width="2.00" height="7.60" fill="#ff0000" />
<rect x="202.82" y="288.20" width="2.00" height="7.60" fill="#ff0000" />
<rect x="208.26" y="288.20" width="2.00" height="7.60" fill="#ff0000" />
<rect x="213.69" y="288.20" width="2.00" height="7.60" fill="#ff0000" />
<rect x="219.13" y="288.20" width="2.00" height="7.60" fill="#ff0000" />
<rect x="224.56" y="288.20" width="2.00" height="7.60" fill="#ff0000" />
<rect x="230.00" y="288.20" width="2.00" height="7.60" fill="#ff0000" />
<rect x="235.43" y="288.20" width="2.00" height="7.60" fill="#ff0000" />
<rect x="240.87" y="288.20" width="2.00" height="7.60" fill="#ff0000" />
<rect x="246.30" y="288.20" width="2.00" height="7.60" fill="#ff0000" />
<rect x="251.74" y="288.20" width="2.00" height="7.60" fill="#ff0000" />
<rect x="257.18" y="288.20" width="2.00" height="7.60" fill="#ff0000" />
<rect x="262.61" y="288.20" width="2.00" height="7.60" fill="#ff0000" />
<rect x="268.05" y="288.20" width="2.00" height="7.60" fill="#ff0000" />
<rect x="273.48" y="288.20" width="2.00" height="7.60" fill="#ff0000" />
<rect x="278.92" y="288.20" width="2.00" height="7.60" fill="#ff0000" />
<rect x="284.35" y="288.20" width="2.00" height="7.60" fill="#ff0000" />
<rect x="289.79" y="288.20" width="2.00" height="7.60" fill="#ff0000" />
<rect x="295.22" y="288.20" width="2.00" height="7.60" fill="#ff0000" />
<rect x="300.66" y="288.20" width="2.00" height="7.60" fill="#ff0000" />
<rect x="306.09" y="288.20" width="2.00" height="7.60" fill="#ff0000" />
<rect x="311.52" y="288.20" width="2.00" height="7.60" fill="#ff0000" />
<rect x="316.96" y="288.20" width="2.00" height="7.60" fill="#ff0000" />
<rect x="322.39" y="288.20" width="2.00" height="7.60" fill="#ff0000" />
<rect x="327.83" y="288.20" width="2.00" height="7.60" fill="#ff0000" />
<rect x="333.26" y="288.20" width="2.00" height="7.60" fill="#ff0000" />
<rect x="338.70" y="288.20" width="2.00" height="7.60" fill="#ff0000" />
<rect x="344.13" y="288.20" width="2.00" height="7.60" fill="#ff0000" />
<rect x="349.57" y="288.20" width="2.00" height="7.60" fill="#ff0000" />
<rect x="355.00" y="288.20" width="2.00" height="7.60" fill="#ff0000" />
<rect x="360.44" y="288.20" width="2.00" height="7.60" fill="#ff0000" />
<rect x="365.88" y="288.20" width="2.00" height="7.60" fill="#ff0000" />
<rect x="371.31" y="288.20" width="2.00" height="7.60" fill="#ff0000" />
<rect x="376.75" y="288.20" width="2.00" height="7.60" fill="#ff0000" />
<rect x="382.18" y="288.20" width="2.00" height="7.60" fill="#ff0000" />
<rect x="387.62" y="288.20" width="2.00" height="7.60" fill="#ff0000" />
<rect x="393.05" y="288.20" width="2.00" height="7.60" fill="#ff0000" />
<rect x="398.49" y="288.20" width="2.00" height="7.60" fill="#ff0000" />
<rect x="403.92" y="288.20" width="2.00" height="7.60" fill="#ff0000" />
<rect x="409.36" y="288.20" width="2.00" height="7.60" fill="#ff0000" />
<rect x="414.79" y="288.20" width="2.00" height="7.60" fill="#ff0000" />
<rect x="420.22" y="288.20" width="2.00" height="7.60" fill="#ff0000" />
<rect x="425.66" y="288.20" width="2.00" height="7.60" fill="#ff0000" />
<rect x="431.09" y="288.20" width="2.00" height="7.60" fill="#ff0000" />
<rect x="436.53" y="288.20" width="2.00" height="7.60" fill="#ff0000" />
<rect x="441.96" y="288.20" width="2.00" height="7.60" fill="#ff0000" />
<rect x="447.40" y="288.20" width="2.00" height="7.60" fill="#ff0000" />
<rect x="452.83" y="288.20" width="2.00" height="7.60" fill="#ff0000" />
<rect x="458.27" y="288.20" width="2.00" height="7.60" fill="#ff0000" />
<rect x="463.70" y="288.20" width="2.00" height="7.60" fill="#ff0000" />
<rect x="469.14" y="288.20" width="2.00" height="7.60" fill="#ff0000" />
<rect x="474.57" y="288.20" width="2.00" height="7.60" fill="#ff0000" />
<rect x="480.01" y="288.20" width="2.00" height="7.60" fill="#ff0000" />
<rect x="485.44" y="288.20" width="2.00" height="7.60" fill="#ff0000" />
<rect x="490.88" y="288.20" width="2.00" height="7.60" fill="#ff0000" />
<rect x="496.31" y="288.20" width="2.00" height="7.60" fill="#ff0000" />
<rect x="501.75" y="288.20" width="2.00" height="7.60" fill="#ff0000" />
<rect x="507.19" y="288.20" width="2.00" height="7.60" fill="#ff0000" />
<rect x="512.62" y="288.20" width="2.00" height="7.60" fill="#ff0000" />
<rect x="518.05" y="288.20" width="2.00" height="7.60" fill="#ff0000" />
<rect x="523.49" y="288.20" width="2.00" height="7.60" fill="#ff0000" />
<rect x="528.92" y="288.20" width="2.00" height="7.60" fill="#ff0000" />
<rect x="534.36" y="288.20" width="2.00" height="7.60" fill="#ff0000" />
<rect x="539.79" y="288.20" width="2.00" height="7.60" fill="#ff0000" />
<rect x="545.23" y="288.20" width="2.00" height="7.60" fill="#ff0000" />
<rect x="550.66" y="288.20" width="2.00" height="7.60" fill="#ff0000" />
<rect x="556.10" y="288.20" width="2.00" height="7.60" fill="#ff0000" />
<rect x="561.53" y="288.20" width="2.00" height="7.60" fill="#ff0000" />
<rect x="566.97" y="288.20" width="2.00" height="7.60" fill="#ff0000" />
<rect x="572.40" y="288.20" width="2.00" height="7.60" fill="#ff0000" />
<rect x="577.84" y="288.20" width="2.00" height="7.60" fill="#ff0000" />
<rect x="583.27" y="288.20" width="2.00" height="7.60" fill="#ff0000" />
<rect x="588.71" y="288.20" width="2.00" height="7.60" fill="#ff0000" />
<rect x="594.14" y="288.20" width="2.00" height="7.60" fill="#ff0000" />
<rect x="599.58" y="288.20" width="2.00" height="7.60" fill="#ff0000" />
<rect x="605.01" y="288.20" width="2.00" height="7.60" fill="#ff0000" />
<rect x="610.45" y="288.20" width="2.00" height="7.60" fill="#ff0000" />
<rect x="615.88" y="288.20" width="2.00" height="7.60" fill="#ff0000" />
<rect x="621.32" y="288.20" width="2.00" height="7.60" fill="#ff0000" />
<rect x="626.75" y="288.20" width="2.00" height="7.60" fill="#ff0000" />
<rect x="632.19" y="288.20" width="2.00" height="7.60" fill="#ff0000" />
<rect x="637.62" y="288.20" width="2.00" height="7.60" fill="#ff0000" />
<rect x="643.06" y="288.20" width="2.00" height="7.60" fill="#ff0000" />
<rect x="648.50" y="288.20" width="2.00" height="7.60" fill="#ff0000" />
<rect x="653.93" y="288.20" width="2.00" height="7.60" fill="#ff0000" />
<rect x="659.37" y="288.20" width="2.00" height="7.60" fill="#ff0000" />
<rect x="664.80" y="288.20" width="2.00" height="7.60" fill="#ff0000" />
<rect x="670.24" y="288.20" width="2.00" height="7.60" fill="#ff0000" />
<rect x="675.67" y="288.20" width="2.00" height="7.60" fill="#ff0000" />
<rect x="681.11" y="288.20" width="2.00" height="7.60" fill="#ff0000" />
<text x="14.5" y="295.4" font-size="6.5" fill="#f0f0f0" text-anchor="start" font-weight="normal" >M15</text>
<text x="694.0" y="294.3" font-size="6.5" fill="#fff" text-anchor="start" font-weight="normal" >0</text>
<rect x="12.60" y="298.40" width="2.00" height="8.20" fill="#1e90ff" />
<rect x="18.04" y="298.40" width="2.00" height="8.20" fill="#ff0000" />
<rect x="23.47" y="298.40" width="2.00" height="8.20" fill="#ff0000" />
<rect x="28.91" y="298.40" width="2.00" height="8.20" fill="#ff0000" />
<rect x="34.34" y="298.40" width="2.00" height="8.20" fill="#ff0000" />
<rect x="39.77" y="298.40" width="2.00" height="8.20" fill="#ff0000" />
<rect x="45.21" y="298.40" width="2.00" height="8.20" fill="#ff0000" />
<rect x="50.64" y="298.40" width="2.00" height="8.20" fill="#ff0000" />
<rect x="56.08" y="298.40" width="2.00" height="8.20" fill="#ff0000" />
<rect x="61.52" y="298.40" width="2.00" height="8.20" fill="#ff0000" />
<rect x="66.95" y="298.40" width="2.00" height="8.20" fill="#ff0000" />
<rect x="72.38" y="298.40" width="2.00" height="8.20" fill="#ff0000" />
<rect x="77.82" y="298.40" width="2.00" height="8.20" fill="#ff0000" />
<rect x="83.25" y="298.40" width="2.00" height="8.20" fill="#ff0000" />
<rect x="88.69" y="298.40" width="2.00" height="8.20" fill="#ff0000" />
<rect x="94.12" y="298.40" width="2.00" height="8.20" fill="#ff0000" />
<rect x="99.56" y="298.40" width="2.00" height="8.20" fill="#ff0000" />
<rect x="104.99" y="298.40" width="2.00" height="8.20" fill="#ff0000" />
<rect x="110.43" y="298.40" width="2.00" height="8.20" fill="#ff0000" />
<rect x="115.86" y="298.40" width="2.00" height="8.20" fill="#ff0000" />
<rect x="121.30" y="298.40" width="2.00" height="8.20" fill="#ff0000" />
<rect x="126.73" y="298.40" width="2.00" height="8.20" fill="#ff0000" />
<rect x="132.17" y="298.40" width="2.00" height="8.20" fill="#ff0000" />
<rect x="137.60" y="298.40" width="2.00" height="8.20" fill="#ff0000" />
<rect x="143.04" y="298.40" width="2.00" height="8.20" fill="#ff0000" />
<rect x="148.47" y="298.40" width="2.00" height="8.20" fill="#ff0000" />
<rect x="153.91" y="298.40" width="2.00" height="8.20" fill="#ff0000" />
<rect x="159.34" y="298.40" width="2.00" height="8.20" fill="#ff0000" />
<rect x="164.78" y="298.40" width="2.00" height="8.20" fill="#ff0000" />
<rect x="170.21" y="298.40" width="2.00" height="8.20" fill="#ff0000" />
<rect x="175.65" y="298.40" width="2.00" height="8.20" fill="#ff0000" />
<rect x="181.08" y="298.40" width="2.00" height="8.20" fill="#ff0000" />
<rect x="186.52" y="298.40" width="2.00" height="8.20" fill="#ff0000" />
<rect x="191.95" y="298.40" width="2.00" height="8.20" fill="#ff0000" />
<rect x="197.39" y="298.40" width="2.00" height="8.20" fill="#ff0000" />
<rect x="202.82" y="298.40" width="2.00" height="8.20" fill="#ff0000" />
<rect x="208.26" y="298.40" width="2.00" height="8.20" fill="#ff0000" />
<rect x="213.69" y="298.40" width="2.00" height="8.20" fill="#ff0000" />
<rect x="219.13" y="298.40" width="2.00" height="8.20" fill="#ff0000" />
<rect x="224.56" y="298.40" width="2.00" height="8.20" fill="#ff0000" />
<rect x="230.00" y="298.40" width="2.00" height="8.20" fill="#ff0000" />
<rect x="235.43" y="298.40" width="2.00" height="8.20" fill="#ff0000" />
<rect x="240.87" y="298.40" width="2.00" height="8.20" fill="#ff0000" />
<rect x="246.30" y="298.40" width="2.00" height="8.20" fill="#ff0000" />
<rect x="251.74" y="298.40" width="2.00" height="8.20" fill="#ff0000" />
<rect x="257.18" y="298.40" width="2.00" height="8.20" fill="#ff0000" />
<rect x="262.61" y="298.40" width="2.00" height="8.20" fill="#ff0000" />
<rect x="268.05" y="298.40" width="2.00" height="8.20" fill="#ff0000" />
<rect x="273.48" y="298.40" width="2.00" height="8.20" fill="#ff0000" />
<rect x="278.92" y="298.40" width="2.00" height="8.20" fill="#ff0000" />
<rect x="284.35" y="298.40" width="2.00" height="8.20" fill="#ff0000" />
<rect x="289.79" y="298.40" width="2.00" height="8.20" fill="#ff0000" />
<rect x="295.22" y="298.40" width="2.00" height="8.20" fill="#ff0000" />
<rect x="300.66" y="298.40" width="2.00" height="8.20" fill="#ff0000" />
<rect x="306.09" y="298.40" width="2.00" height="8.20" fill="#ff0000" />
<rect x="311.52" y="298.40" width="2.00" height="8.20" fill="#ff0000" />
<rect x="316.96" y="298.40" width="2.00" height="8.20" fill="#ff0000" />
<rect x="322.39" y="298.40" width="2.00" height="8.20" fill="#ff0000" />
<rect x="327.83" y="298.40" width="2.00" height="8.20" fill="#ff0000" />
<rect x="333.26" y="298.40" width="2.00" height="8.20" fill="#ff0000" />
<rect x="338.70" y="298.40" width="2.00" height="8.20" fill="#ff0000" />
<rect x="344.13" y="298.40" width="2.00" height="8.20" fill="#ff0000" />
<rect x="349.57" y="298.40" width="2.00" height="8.20" fill="#ff0000" />
<rect x="355.00" y="298.40" width="2.00" height="8.20" fill="#ff0000" />
<rect x="360.44" y="298.40" width="2.00" height="8.20" fill="#ff0000" />
<rect x="365.88" y="298.40" width="2.00" height="8.20" fill="#ff0000" />
<rect x="371.31" y="298.40" width="2.00" height="8.20" fill="#ff0000" />
<rect x="376.75" y="298.40" width="2.00" height="8.20" fill="#ff0000" />
<rect x="382.18" y="298.40" width="2.00" height="8.20" fill="#ff0000" />
<rect x="387.62" y="298.40" width="2.00" height="8.20" fill="#ff0000" />
<rect x="393.05" y="298.40" width="2.00" height="8.20" fill="#ff0000" />
<rect x="398.49" y="298.40" width="2.00" height="8.20" fill="#ff0000" />
<rect x="403.92" y="298.40" width="2.00" height="8.20" fill="#ff0000" />
<rect x="409.36" y="298.40" width="2.00" height="8.20" fill="#ff0000" />
<rect x="414.79" y="298.40" width="2.00" height="8.20" fill="#ff0000" />
<rect x="420.22" y="298.40" width="2.00" height="8.20" fill="#ff0000" />
<rect x="425.66" y="298.40" width="2.00" height="8.20" fill="#ff0000" />
<rect x="431.09" y="298.40" width="2.00" height="8.20" fill="#ff0000" />
<rect x="436.53" y="298.40" width="2.00" height="8.20" fill="#ff0000" />
<rect x="441.96" y="298.40" width="2.00" height="8.20" fill="#ff0000" />
<rect x="447.40" y="298.40" width="2.00" height="8.20" fill="#ff0000" />
<rect x="452.83" y="298.40" width="2.00" height="8.20" fill="#ff0000" />
<rect x="458.27" y="298.40" width="2.00" height="8.20" fill="#ff0000" />
<rect x="463.70" y="298.40" width="2.00" height="8.20" fill="#ff0000" />
<rect x="469.14" y="298.40" width="2.00" height="8.20" fill="#ff0000" />
<rect x="474.57" y="298.40" width="2.00" height="8.20" fill="#ff0000" />
<rect x="480.01" y="298.40" width="2.00" height="8.20" fill="#ff0000" />
<rect x="485.44" y="298.40" width="2.00" height="8.20" fill="#ff0000" />
<rect x="490.88" y="298.40" width="2.00" height="8.20" fill="#ff0000" />
<rect x="496.31" y="298.40" width="2.00" height="8.20" fill="#ff0000" />
<rect x="501.75" y="298.40" width="2.00" height="8.20" fill="#ff0000" />
<rect x="507.19" y="298.40" width="2.00" height="8.20" fill="#ff0000" />
<rect x="512.62" y="298.40" width="2.00" height="8.20" fill="#ff0000" />
<rect x="518.05" y="298.40" width="2.00" height="8.20" fill="#ff0000" />
<rect x="523.49" y="298.40" width="2.00" height="8.20" fill="#ff0000" />
<rect x="528.92" y="298.40" width="2.00" height="8.20" fill="#ff0000" />
<rect x="534.36" y="298.40" width="2.00" height="8.20" fill="#ff0000" />
<rect x="539.79" y="298.40" width="2.00" height="8.20" fill="#ff0000" />
<rect x="545.23" y="298.40" width="2.00" height="8.20" fill="#ff0000" />
<rect x="550.66" y="298.40" width="2.00" height="8.20" fill="#ff0000" />
<rect x="556.10" y="298.40" width="2.00" height="8.20" fill="#ff0000" />
<rect x="561.53" y="298.40" width="2.00" height="8.20" fill="#ff0000" />
<rect x="566.97" y="298.40" width="2.00" height="8.20" fill="#ff0000" />
<rect x="572.40" y="298.40" width="2.00" height="8.20" fill="#ff0000" />
<rect x="577.84" y="298.40" width="2.00" height="8.20" fill="#ff0000" />
<rect x="583.27" y="298.40" width="2.00" height="8.20" fill="#ff0000" />
<rect x="588.71" y="298.40" width="2.00" height="8.20" fill="#ff0000" />
<rect x="594.14" y="298.40" width="2.00" height="8.20" fill="#ff0000" />
<rect x="599.58" y="298.40" width="2.00" height="8.20" fill="#ff0000" />
<rect x="605.01" y="298.40" width="2.00" height="8.20" fill="#ff0000" />
<rect x="610.45" y="298.40" width="2.00" height="8.20" fill="#ff0000" />
<rect x="615.88" y="298.40" width="2.00" height="8.20" fill="#ff0000" />
<rect x="621.32" y="298.40" width="2.00" height="8.20" fill="#ff0000" />
<rect x="626.75" y="298.40" width="2.00" height="8.20" fill="#ff0000" />
<rect x="632.19" y="298.40" width="2.00" height="8.20" fill="#ff0000" />
<rect x="637.62" y="298.40" width="2.00" height="8.20" fill="#ff0000" />
<rect x="643.06" y="298.40" width="2.00" height="8.20" fill="#ff0000" />
<rect x="648.50" y="298.40" width="2.00" height="8.20" fill="#ff0000" />
<rect x="653.93" y="298.40" width="2.00" height="8.20" fill="#ff0000" />
<rect x="659.37" y="298.40" width="2.00" height="8.20" fill="#ff0000" />
<rect x="664.80" y="298.40" width="2.00" height="8.20" fill="#ff0000" />
<rect x="670.24" y="298.40" width="2.00" height="8.20" fill="#ff0000" />
<rect x="675.67" y="298.40" width="2.00" height="8.20" fill="#ff0000" />
<rect x="681.11" y="298.40" width="2.00" height="8.20" fill="#ff0000" />
<text x="14.5" y="306.2" font-size="6.5" fill="#f0f0f0" text-anchor="start" font-weight="normal" >H1</text>
<text x="694.0" y="305.1" font-size="6.5" fill="#fff" text-anchor="start" font-weight="normal" >0</text>
<rect x="12.60" y="309.20" width="2.00" height="8.60" fill="#1e90ff" />
<rect x="18.04" y="309.20" width="2.00" height="8.60" fill="#1e90ff" />
<rect x="23.47" y="309.20" width="2.00" height="8.60" fill="#1e90ff" />
<rect x="28.91" y="309.20" width="2.00" height="8.60" fill="#1e90ff" />
<rect x="34.34" y="309.20" width="2.00" height="8.60" fill="#1e90ff" />
<rect x="39.77" y="309.20" width="2.00" height="8.60" fill="#1e90ff" />
<rect x="45.21" y="309.20" width="2.00" height="8.60" fill="#1e90ff" />
<rect x="50.64" y="309.20" width="2.00" height="8.60" fill="#1e90ff" />
<rect x="56.08" y="309.20" width="2.00" height="8.60" fill="#1e90ff" />
<rect x="61.52" y="309.20" width="2.00" height="8.60" fill="#1e90ff" />
<rect x="66.95" y="309.20" width="2.00" height="8.60" fill="#1e90ff" />
<rect x="72.38" y="309.20" width="2.00" height="8.60" fill="#1e90ff" />
<rect x="77.82" y="309.20" width="2.00" height="8.60" fill="#1e90ff" />
<rect x="83.25" y="309.20" width="2.00" height="8.60" fill="#1e90ff" />
<rect x="88.69" y="309.20" width="2.00" height="8.60" fill="#1e90ff" />
<rect x="94.12" y="309.20" width="2.00" height="8.60" fill="#1e90ff" />
<rect x="99.56" y="309.20" width="2.00" height="8.60" fill="#1e90ff" />
<rect x="104.99" y="309.20" width="2.00" height="8.60" fill="#1e90ff" />
<rect x="110.43" y="309.20" width="2.00" height="8.60" fill="#1e90ff" />
<rect x="115.86" y="309.20" width="2.00" height="8.60" fill="#1e90ff" />
<rect x="121.30" y="309.20" width="2.00" height="8.60" fill="#1e90ff" />
<rect x="126.73" y="309.20" width="2.00" height="8.60" fill="#1e90ff" />
<rect x="132.17" y="309.20" width="2.00" height="8.60" fill="#1e90ff" />
<rect x="137.60" y="309.20" width="2.00" height="8.60" fill="#1e90ff" />
<rect x="143.04" y="309.20" width="2.00" height="8.60" fill="#1e90ff" />
<rect x="148.47" y="309.20" width="2.00" height="8.60" fill="#1e90ff" />
<rect x="153.91" y="309.20" width="2.00" height="8.60" fill="#1e90ff" />
<rect x="159.34" y="309.20" width="2.00" height="8.60" fill="#1e90ff" />
<rect x="164.78" y="309.20" width="2.00" height="8.60" fill="#1e90ff" />
<rect x="170.21" y="309.20" width="2.00" height="8.60" fill="#1e90ff" />
<rect x="175.65" y="309.20" width="2.00" height="8.60" fill="#1e90ff" />
<rect x="181.08" y="309.20" width="2.00" height="8.60" fill="#1e90ff" />
<rect x="186.52" y="309.20" width="2.00" height="8.60" fill="#1e90ff" />
<rect x="191.95" y="309.20" width="2.00" height="8.60" fill="#1e90ff" />
<rect x="197.39" y="309.20" width="2.00" height="8.60" fill="#1e90ff" />
<rect x="202.82" y="309.20" width="2.00" height="8.60" fill="#1e90ff" />
<rect x="208.26" y="309.20" width="2.00" height="8.60" fill="#1e90ff" />
<rect x="213.69" y="309.20" width="2.00" height="8.60" fill="#1e90ff" />
<rect x="219.13" y="309.20" width="2.00" height="8.60" fill="#1e90ff" />
<rect x="224.56" y="309.20" width="2.00" height="8.60" fill="#1e90ff" />
<rect x="230.00" y="309.20" width="2.00" height="8.60" fill="#1e90ff" />
<rect x="235.43" y="309.20" width="2.00" height="8.60" fill="#1e90ff" />
<rect x="240.87" y="309.20" width="2.00" height="8.60" fill="#1e90ff" />
<rect x="246.30" y="309.20" width="2.00" height="8.60" fill="#1e90ff" />
<rect x="251.74" y="309.20" width="2.00" height="8.60" fill="#1e90ff" />
<rect x="257.18" y="309.20" width="2.00" height="8.60" fill="#1e90ff" />
<rect x="262.61" y="309.20" width="2.00" height="8.60" fill="#1e90ff" />
<rect x="268.05" y="309.20" width="2.00" height="8.60" fill="#1e90ff" />
<rect x="273.48" y="309.20" width="2.00" height="8.60" fill="#1e90ff" />
<rect x="278.92" y="309.20" width="2.00" height="8.60" fill="#1e90ff" />
<rect x="284.35" y="309.20" width="2.00" height="8.60" fill="#1e90ff" />
<rect x="289.79" y="309.20" width="2.00" height="8.60" fill="#1e90ff" />
<rect x="295.22" y="309.20" width="2.00" height="8.60" fill="#1e90ff" />
<rect x="300.66" y="309.20" width="2.00" height="8.60" fill="#1e90ff" />
<rect x="306.09" y="309.20" width="2.00" height="8.60" fill="#1e90ff" />
<rect x="311.52" y="309.20" width="2.00" height="8.60" fill="#1e90ff" />
<rect x="316.96" y="309.20" width="2.00" height="8.60" fill="#1e90ff" />
<rect x="322.39" y="309.20" width="2.00" height="8.60" fill="#1e90ff" />
<rect x="327.83" y="309.20" width="2.00" height="8.60" fill="#1e90ff" />
<rect x="333.26" y="309.20" width="2.00" height="8.60" fill="#1e90ff" />
<rect x="338.70" y="309.20" width="2.00" height="8.60" fill="#1e90ff" />
<rect x="344.13" y="309.20" width="2.00" height="8.60" fill="#1e90ff" />
<rect x="349.57" y="309.20" width="2.00" height="8.60" fill="#1e90ff" />
<rect x="355.00" y="309.20" width="2.00" height="8.60" fill="#1e90ff" />
<rect x="360.44" y="309.20" width="2.00" height="8.60" fill="#1e90ff" />
<rect x="365.88" y="309.20" width="2.00" height="8.60" fill="#1e90ff" />
<rect x="371.31" y="309.20" width="2.00" height="8.60" fill="#1e90ff" />
<rect x="376.75" y="309.20" width="2.00" height="8.60" fill="#1e90ff" />
<rect x="382.18" y="309.20" width="2.00" height="8.60" fill="#1e90ff" />
<rect x="387.62" y="309.20" width="2.00" height="8.60" fill="#1e90ff" />
<rect x="393.05" y="309.20" width="2.00" height="8.60" fill="#1e90ff" />
<rect x="398.49" y="309.20" width="2.00" height="8.60" fill="#1e90ff" />
<rect x="403.92" y="309.20" width="2.00" height="8.60" fill="#1e90ff" />
<rect x="409.36" y="309.20" width="2.00" height="8.60" fill="#1e90ff" />
<rect x="414.79" y="309.20" width="2.00" height="8.60" fill="#1e90ff" />
<rect x="420.22" y="309.20" width="2.00" height="8.60" fill="#1e90ff" />
<rect x="425.66" y="309.20" width="2.00" height="8.60" fill="#1e90ff" />
<rect x="431.09" y="309.20" width="2.00" height="8.60" fill="#1e90ff" />
<rect x="436.53" y="309.20" width="2.00" height="8.60" fill="#1e90ff" />
<rect x="441.96" y="309.20" width="2.00" height="8.60" fill="#1e90ff" />
<rect x="447.40" y="309.20" width="2.00" height="8.60" fill="#1e90ff" />
<rect x="452.83" y="309.20" width="2.00" height="8.60" fill="#1e90ff" />
<rect x="458.27" y="309.20" width="2.00" height="8.60" fill="#1e90ff" />
<rect x="463.70" y="309.20" width="2.00" height="8.60" fill="#1e90ff" />
<rect x="469.14" y="309.20" width="2.00" height="8.60" fill="#1e90ff" />
<rect x="474.57" y="309.20" width="2.00" height="8.60" fill="#1e90ff" />
<rect x="480.01" y="309.20" width="2.00" height="8.60" fill="#1e90ff" />
<rect x="485.44" y="309.20" width="2.00" height="8.60" fill="#1e90ff" />
<rect x="490.88" y="309.20" width="2.00" height="8.60" fill="#1e90ff" />
<rect x="496.31" y="309.20" width="2.00" height="8.60" fill="#1e90ff" />
<rect x="501.75" y="309.20" width="2.00" height="8.60" fill="#1e90ff" />
<rect x="507.19" y="309.20" width="2.00" height="8.60" fill="#1e90ff" />
<rect x="512.62" y="309.20" width="2.00" height="8.60" fill="#1e90ff" />
<rect x="518.05" y="309.20" width="2.00" height="8.60" fill="#1e90ff" />
<rect x="523.49" y="309.20" width="2.00" height="8.60" fill="#1e90ff" />
<rect x="528.92" y="309.20" width="2.00" height="8.60" fill="#1e90ff" />
<rect x="534.36" y="309.20" width="2.00" height="8.60" fill="#1e90ff" />
<rect x="539.79" y="309.20" width="2.00" height="8.60" fill="#1e90ff" />
<rect x="545.23" y="309.20" width="2.00" height="8.60" fill="#1e90ff" />
<rect x="550.66" y="309.20" width="2.00" height="8.60" fill="#1e90ff" />
<rect x="556.10" y="309.20" width="2.00" height="8.60" fill="#1e90ff" />
<rect x="561.53" y="309.20" width="2.00" height="8.60" fill="#1e90ff" />
<rect x="566.97" y="309.20" width="2.00" height="8.60" fill="#1e90ff" />
<rect x="572.40" y="309.20" width="2.00" height="8.60" fill="#1e90ff" />
<rect x="577.84" y="309.20" width="2.00" height="8.60" fill="#1e90ff" />
<rect x="583.27" y="309.20" width="2.00" height="8.60" fill="#1e90ff" />
<rect x="588.71" y="309.20" width="2.00" height="8.60" fill="#1e90ff" />
<rect x="594.14" y="309.20" width="2.00" height="8.60" fill="#1e90ff" />
<rect x="599.58" y="309.20" width="2.00" height="8.60" fill="#1e90ff" />
<rect x="605.01" y="309.20" width="2.00" height="8.60" fill="#1e90ff" />
<rect x="610.45" y="309.20" width="2.00" height="8.60" fill="#ff0000" />
<rect x="615.88" y="309.20" width="2.00" height="8.60" fill="#ff0000" />
<rect x="621.32" y="309.20" width="2.00" height="8.60" fill="#ff0000" />
<rect x="626.75" y="309.20" width="2.00" height="8.60" fill="#ff0000" />
<rect x="632.19" y="309.20" width="2.00" height="8.60" fill="#ff0000" />
<rect x="637.62" y="309.20" width="2.00" height="8.60" fill="#ff0000" />
<rect x="643.06" y="309.20" width="2.00" height="8.60" fill="#ff0000" />
<rect x="648.50" y="309.20" width="2.00" height="8.60" fill="#ff0000" />
<rect x="653.93" y="309.20" width="2.00" height="8.60" fill="#ff0000" />
<rect x="659.37" y="309.20" width="2.00" height="8.60" fill="#ff0000" />
<rect x="664.80" y="309.20" width="2.00" height="8.60" fill="#ff0000" />
<rect x="670.24" y="309.20" width="2.00" height="8.60" fill="#ff0000" />
<rect x="675.67" y="309.20" width="2.00" height="8.60" fill="#ff0000" />
<rect x="681.11" y="309.20" width="2.00" height="8.60" fill="#ff0000" />
<text x="14.5" y="317.4" font-size="6.5" fill="#f0f0f0" text-anchor="start" font-weight="normal" >H4</text>
<text x="694.0" y="316.3" font-size="6.5" fill="#fff" text-anchor="start" font-weight="normal" >0</text>
<rect x="12.60" y="320.20" width="2.00" height="9.40" fill="#1e90ff" />
<rect x="18.04" y="320.20" width="2.00" height="9.40" fill="#1e90ff" />
<rect x="23.47" y="320.20" width="2.00" height="9.40" fill="#1e90ff" />
<rect x="28.91" y="320.20" width="2.00" height="9.40" fill="#1e90ff" />
<rect x="34.34" y="320.20" width="2.00" height="9.40" fill="#1e90ff" />
<rect x="39.77" y="320.20" width="2.00" height="9.40" fill="#1e90ff" />
<rect x="45.21" y="320.20" width="2.00" height="9.40" fill="#1e90ff" />
<rect x="50.64" y="320.20" width="2.00" height="9.40" fill="#1e90ff" />
<rect x="56.08" y="320.20" width="2.00" height="9.40" fill="#1e90ff" />
<rect x="61.52" y="320.20" width="2.00" height="9.40" fill="#1e90ff" />
<rect x="66.95" y="320.20" width="2.00" height="9.40" fill="#1e90ff" />
<rect x="72.38" y="320.20" width="2.00" height="9.40" fill="#1e90ff" />
<rect x="77.82" y="320.20" width="2.00" height="9.40" fill="#1e90ff" />
<rect x="83.25" y="320.20" width="2.00" height="9.40" fill="#1e90ff" />
<rect x="88.69" y="320.20" width="2.00" height="9.40" fill="#1e90ff" />
<rect x="94.12" y="320.20" width="2.00" height="9.40" fill="#1e90ff" />
<rect x="99.56" y="320.20" width="2.00" height="9.40" fill="#1e90ff" />
<rect x="104.99" y="320.20" width="2.00" height="9.40" fill="#1e90ff" />
<rect x="110.43" y="320.20" width="2.00" height="9.40" fill="#1e90ff" />
<rect x="115.86" y="320.20" width="2.00" height="9.40" fill="#1e90ff" />
<rect x="121.30" y="320.20" width="2.00" height="9.40" fill="#1e90ff" />
<rect x="126.73" y="320.20" width="2.00" height="9.40" fill="#1e90ff" />
<rect x="132.17" y="320.20" width="2.00" height="9.40" fill="#1e90ff" />
<rect x="137.60" y="320.20" width="2.00" height="9.40" fill="#1e90ff" />
<rect x="143.04" y="320.20" width="2.00" height="9.40" fill="#1e90ff" />
<rect x="148.47" y="320.20" width="2.00" height="9.40" fill="#1e90ff" />
<rect x="153.91" y="320.20" width="2.00" height="9.40" fill="#1e90ff" />
<rect x="159.34" y="320.20" width="2.00" height="9.40" fill="#1e90ff" />
<rect x="164.78" y="320.20" width="2.00" height="9.40" fill="#1e90ff" />
<rect x="170.21" y="320.20" width="2.00" height="9.40" fill="#1e90ff" />
<rect x="175.65" y="320.20" width="2.00" height="9.40" fill="#1e90ff" />
<rect x="181.08" y="320.20" width="2.00" height="9.40" fill="#1e90ff" />
<rect x="186.52" y="320.20" width="2.00" height="9.40" fill="#1e90ff" />
<rect x="191.95" y="320.20" width="2.00" height="9.40" fill="#1e90ff" />
<rect x="197.39" y="320.20" width="2.00" height="9.40" fill="#1e90ff" />
<rect x="202.82" y="320.20" width="2.00" height="9.40" fill="#1e90ff" />
<rect x="208.26" y="320.20" width="2.00" height="9.40" fill="#1e90ff" />
<rect x="213.69" y="320.20" width="2.00" height="9.40" fill="#1e90ff" />
<rect x="219.13" y="320.20" width="2.00" height="9.40" fill="#1e90ff" />
<rect x="224.56" y="320.20" width="2.00" height="9.40" fill="#1e90ff" />
<rect x="230.00" y="320.20" width="2.00" height="9.40" fill="#1e90ff" />
<rect x="235.43" y="320.20" width="2.00" height="9.40" fill="#1e90ff" />
<rect x="240.87" y="320.20" width="2.00" height="9.40" fill="#1e90ff" />
<rect x="246.30" y="320.20" width="2.00" height="9.40" fill="#1e90ff" />
<rect x="251.74" y="320.20" width="2.00" height="9.40" fill="#1e90ff" />
<rect x="257.18" y="320.20" width="2.00" height="9.40" fill="#1e90ff" />
<rect x="262.61" y="320.20" width="2.00" height="9.40" fill="#1e90ff" />
<rect x="268.05" y="320.20" width="2.00" height="9.40" fill="#1e90ff" />
<rect x="273.48" y="320.20" width="2.00" height="9.40" fill="#1e90ff" />
<rect x="278.92" y="320.20" width="2.00" height="9.40" fill="#1e90ff" />
<rect x="284.35" y="320.20" width="2.00" height="9.40" fill="#1e90ff" />
<rect x="289.79" y="320.20" width="2.00" height="9.40" fill="#1e90ff" />
<rect x="295.22" y="320.20" width="2.00" height="9.40" fill="#1e90ff" />
<rect x="300.66" y="320.20" width="2.00" height="9.40" fill="#1e90ff" />
<rect x="306.09" y="320.20" width="2.00" height="9.40" fill="#1e90ff" />
<rect x="311.52" y="320.20" width="2.00" height="9.40" fill="#1e90ff" />
<rect x="316.96" y="320.20" width="2.00" height="9.40" fill="#1e90ff" />
<rect x="322.39" y="320.20" width="2.00" height="9.40" fill="#1e90ff" />
<rect x="327.83" y="320.20" width="2.00" height="9.40" fill="#1e90ff" />
<rect x="333.26" y="320.20" width="2.00" height="9.40" fill="#1e90ff" />
<rect x="338.70" y="320.20" width="2.00" height="9.40" fill="#1e90ff" />
<rect x="344.13" y="320.20" width="2.00" height="9.40" fill="#1e90ff" />
<rect x="349.57" y="320.20" width="2.00" height="9.40" fill="#1e90ff" />
<rect x="355.00" y="320.20" width="2.00" height="9.40" fill="#1e90ff" />
<rect x="360.44" y="320.20" width="2.00" height="9.40" fill="#1e90ff" />
<rect x="365.88" y="320.20" width="2.00" height="9.40" fill="#1e90ff" />
<rect x="371.31" y="320.20" width="2.00" height="9.40" fill="#1e90ff" />
<rect x="376.75" y="320.20" width="2.00" height="9.40" fill="#1e90ff" />
<rect x="382.18" y="320.20" width="2.00" height="9.40" fill="#1e90ff" />
<rect x="387.62" y="320.20" width="2.00" height="9.40" fill="#1e90ff" />
<rect x="393.05" y="320.20" width="2.00" height="9.40" fill="#1e90ff" />
<rect x="398.49" y="320.20" width="2.00" height="9.40" fill="#1e90ff" />
<rect x="403.92" y="320.20" width="2.00" height="9.40" fill="#1e90ff" />
<rect x="409.36" y="320.20" width="2.00" height="9.40" fill="#1e90ff" />
<rect x="414.79" y="320.20" width="2.00" height="9.40" fill="#1e90ff" />
<rect x="420.22" y="320.20" width="2.00" height="9.40" fill="#1e90ff" />
<rect x="425.66" y="320.20" width="2.00" height="9.40" fill="#1e90ff" />
<rect x="431.09" y="320.20" width="2.00" height="9.40" fill="#1e90ff" />
<rect x="436.53" y="320.20" width="2.00" height="9.40" fill="#1e90ff" />
<rect x="441.96" y="320.20" width="2.00" height="9.40" fill="#1e90ff" />
<rect x="447.40" y="320.20" width="2.00" height="9.40" fill="#1e90ff" />
<rect x="452.83" y="320.20" width="2.00" height="9.40" fill="#1e90ff" />
<rect x="458.27" y="320.20" width="2.00" height="9.40" fill="#1e90ff" />
<rect x="463.70" y="320.20" width="2.00" height="9.40" fill="#1e90ff" />
<rect x="469.14" y="320.20" width="2.00" height="9.40" fill="#1e90ff" />
<rect x="474.57" y="320.20" width="2.00" height="9.40" fill="#1e90ff" />
<rect x="480.01" y="320.20" width="2.00" height="9.40" fill="#1e90ff" />
<rect x="485.44" y="320.20" width="2.00" height="9.40" fill="#1e90ff" />
<rect x="490.88" y="320.20" width="2.00" height="9.40" fill="#1e90ff" />
<rect x="496.31" y="320.20" width="2.00" height="9.40" fill="#1e90ff" />
<rect x="501.75" y="320.20" width="2.00" height="9.40" fill="#1e90ff" />
<rect x="507.19" y="320.20" width="2.00" height="9.40" fill="#1e90ff" />
<rect x="512.62" y="320.20" width="2.00" height="9.40" fill="#1e90ff" />
<rect x="518.05" y="320.20" width="2.00" height="9.40" fill="#1e90ff" />
<rect x="523.49" y="320.20" width="2.00" height="9.40" fill="#1e90ff" />
<rect x="528.92" y="320.20" width="2.00" height="9.40" fill="#1e90ff" />
<rect x="534.36" y="320.20" width="2.00" height="9.40" fill="#1e90ff" />
<rect x="539.79" y="320.20" width="2.00" height="9.40" fill="#1e90ff" />
<rect x="545.23" y="320.20" width="2.00" height="9.40" fill="#1e90ff" />
<rect x="550.66" y="320.20" width="2.00" height="9.40" fill="#1e90ff" />
<rect x="556.10" y="320.20" width="2.00" height="9.40" fill="#1e90ff" />
<rect x="561.53" y="320.20" width="2.00" height="9.40" fill="#1e90ff" />
<rect x="566.97" y="320.20" width="2.00" height="9.40" fill="#1e90ff" />
<rect x="572.40" y="320.20" width="2.00" height="9.40" fill="#1e90ff" />
<rect x="577.84" y="320.20" width="2.00" height="9.40" fill="#1e90ff" />
<rect x="583.27" y="320.20" width="2.00" height="9.40" fill="#1e90ff" />
<rect x="588.71" y="320.20" width="2.00" height="9.40" fill="#1e90ff" />
<rect x="594.14" y="320.20" width="2.00" height="9.40" fill="#1e90ff" />
<rect x="599.58" y="320.20" width="2.00" height="9.40" fill="#1e90ff" />
<rect x="605.01" y="320.20" width="2.00" height="9.40" fill="#1e90ff" />
<rect x="610.45" y="320.20" width="2.00" height="9.40" fill="#1e90ff" />
<rect x="615.88" y="320.20" width="2.00" height="9.40" fill="#1e90ff" />
<rect x="621.32" y="320.20" width="2.00" height="9.40" fill="#1e90ff" />
<rect x="626.75" y="320.20" width="2.00" height="9.40" fill="#1e90ff" />
<rect x="632.19" y="320.20" width="2.00" height="9.40" fill="#1e90ff" />
<rect x="637.62" y="320.20" width="2.00" height="9.40" fill="#1e90ff" />
<rect x="643.06" y="320.20" width="2.00" height="9.40" fill="#1e90ff" />
<rect x="648.50" y="320.20" width="2.00" height="9.40" fill="#1e90ff" />
<rect x="653.93" y="320.20" width="2.00" height="9.40" fill="#1e90ff" />
<rect x="659.37" y="320.20" width="2.00" height="9.40" fill="#1e90ff" />
<rect x="664.80" y="320.20" width="2.00" height="9.40" fill="#1e90ff" />
<rect x="670.24" y="320.20" width="2.00" height="9.40" fill="#1e90ff" />
<rect x="675.67" y="320.20" width="2.00" height="9.40" fill="#1e90ff" />
<rect x="681.11" y="320.20" width="2.00" height="9.40" fill="#1e90ff" />
<text x="14.5" y="329.2" font-size="6.5" fill="#f0f0f0" text-anchor="start" font-weight="normal" >D1</text>
<text x="694.0" y="328.1" font-size="6.5" fill="#fff" text-anchor="start" font-weight="normal" >0</text>
<line x1="11.00" y1="287.00" x2="690.50" y2="287.00" stroke="#a8a8a8" stroke-width="1.8" />
<line x1="11.00" y1="297.00" x2="690.50" y2="297.00" stroke="#a8a8a8" stroke-width="1.8" />
<line x1="11.00" y1="307.80" x2="690.50" y2="307.80" stroke="#a8a8a8" stroke-width="1.8" />
<line x1="11.00" y1="319.00" x2="690.50" y2="319.00" stroke="#a8a8a8" stroke-width="1.8" />
<line x1="11.00" y1="331.20" x2="690.50" y2="331.20" stroke="#a8a8a8" stroke-width="1.8" />
<line x1="11.00" y1="448.00" x2="690.50" y2="448.00" stroke="#a8a8a8" stroke-width="1.8" />
<line x1="12.00" y1="348.80" x2="690.50" y2="348.80" stroke="#c4c4c4" stroke-width="0.8" stroke-dasharray="2,2"/>
<line x1="12.00" y1="390.20" x2="690.50" y2="390.20" stroke="#c4c4c4" stroke-width="0.8" stroke-dasharray="2,2"/>
<line x1="12.00" y1="431.60" x2="690.50" y2="431.60" stroke="#c4c4c4" stroke-width="0.8" stroke-dasharray="2,2"/>
<text x="14.3" y="340.8" font-size="7.3" fill="#fff" text-anchor="start" font-weight="normal" textLength="124.0" lengthAdjust="spacingAndGlyphs" >TEN_to_CHI_no_OSCILLATOR_ver_005_1</text>
<text x="186.3" y="340.8" font-size="7.3" fill="#fff" text-anchor="start" font-weight="normal" textLength="138.7" lengthAdjust="spacingAndGlyphs" >127 11.4195 -30.3323 -64.1015 54.1713 -92.0591</text>
<text x="693.2" y="338.9" font-size="7.1" fill="#fff" text-anchor="start" font-weight="normal" >110</text>
<text x="693.2" y="351.4" font-size="7.1" fill="#fff" text-anchor="start" font-weight="normal" >80</text>
<text x="693.2" y="392.8" font-size="7.1" fill="#fff" text-anchor="start" font-weight="normal" >0.00</text>
<text x="693.2" y="434.2" font-size="7.1" fill="#fff" text-anchor="start" font-weight="normal" >-80</text>
<text x="693.2" y="446.1" font-size="7.1" fill="#fff" text-anchor="start" font-weight="normal" >-110</text>
<rect x="10.7" y="396.4" width="2.6" height="2.6" fill="none" stroke="#cc00cc" stroke-width="0.9"/>
<rect x="16.1" y="398.4" width="2.6" height="2.6" fill="none" stroke="#cc00cc" stroke-width="0.9"/>
<rect x="21.6" y="400.1" width="2.6" height="2.6" fill="none" stroke="#cc00cc" stroke-width="0.9"/>
<rect x="27.0" y="401.8" width="2.6" height="2.6" fill="none" stroke="#cc00cc" stroke-width="0.9"/>
<rect x="32.4" y="403.3" width="2.6" height="2.6" fill="none" stroke="#cc00cc" stroke-width="0.9"/>
<rect x="37.9" y="404.7" width="2.6" height="2.6" fill="none" stroke="#cc00cc" stroke-width="0.9"/>
<rect x="43.3" y="406.2" width="2.6" height="2.6" fill="none" stroke="#cc00cc" stroke-width="0.9"/>
<rect x="48.7" y="407.7" width="2.6" height="2.6" fill="none" stroke="#cc00cc" stroke-width="0.9"/>
<rect x="54.2" y="409.0" width="2.6" height="2.6" fill="none" stroke="#cc00cc" stroke-width="0.9"/>
<rect x="59.6" y="410.3" width="2.6" height="2.6" fill="none" stroke="#cc00cc" stroke-width="0.9"/>
<rect x="65.0" y="411.6" width="2.6" height="2.6" fill="none" stroke="#cc00cc" stroke-width="0.9"/>
<rect x="70.5" y="412.8" width="2.6" height="2.6" fill="none" stroke="#cc00cc" stroke-width="0.9"/>
<rect x="75.9" y="414.0" width="2.6" height="2.6" fill="none" stroke="#cc00cc" stroke-width="0.9"/>
<rect x="81.4" y="415.1" width="2.6" height="2.6" fill="none" stroke="#cc00cc" stroke-width="0.9"/>
<rect x="86.8" y="415.6" width="2.6" height="2.6" fill="none" stroke="#cc00cc" stroke-width="0.9"/>
<rect x="92.2" y="416.1" width="2.6" height="2.6" fill="none" stroke="#cc00cc" stroke-width="0.9"/>
<rect x="97.7" y="416.6" width="2.6" height="2.6" fill="none" stroke="#cc00cc" stroke-width="0.9"/>
<rect x="103.1" y="417.3" width="2.6" height="2.6" fill="none" stroke="#cc00cc" stroke-width="0.9"/>
<rect x="108.5" y="417.9" width="2.6" height="2.6" fill="none" stroke="#cc00cc" stroke-width="0.9"/>
<rect x="114.0" y="418.6" width="2.6" height="2.6" fill="none" stroke="#cc00cc" stroke-width="0.9"/>
<rect x="119.4" y="419.3" width="2.6" height="2.6" fill="none" stroke="#cc00cc" stroke-width="0.9"/>
<rect x="124.8" y="420.0" width="2.6" height="2.6" fill="none" stroke="#cc00cc" stroke-width="0.9"/>
<rect x="130.3" y="420.8" width="2.6" height="2.6" fill="none" stroke="#cc00cc" stroke-width="0.9"/>
<rect x="135.7" y="421.6" width="2.6" height="2.6" fill="none" stroke="#cc00cc" stroke-width="0.9"/>
<rect x="141.1" y="422.2" width="2.6" height="2.6" fill="none" stroke="#cc00cc" stroke-width="0.9"/>
<rect x="146.6" y="422.8" width="2.6" height="2.6" fill="none" stroke="#cc00cc" stroke-width="0.9"/>
<rect x="152.0" y="423.4" width="2.6" height="2.6" fill="none" stroke="#cc00cc" stroke-width="0.9"/>
<rect x="157.4" y="424.0" width="2.6" height="2.6" fill="none" stroke="#cc00cc" stroke-width="0.9"/>
<rect x="162.9" y="424.4" width="2.6" height="2.6" fill="none" stroke="#cc00cc" stroke-width="0.9"/>
<rect x="168.3" y="424.7" width="2.6" height="2.6" fill="none" stroke="#cc00cc" stroke-width="0.9"/>
<rect x="173.7" y="425.1" width="2.6" height="2.6" fill="none" stroke="#cc00cc" stroke-width="0.9"/>
<rect x="179.2" y="425.5" width="2.6" height="2.6" fill="none" stroke="#cc00cc" stroke-width="0.9"/>
<rect x="184.6" y="425.8" width="2.6" height="2.6" fill="none" stroke="#cc00cc" stroke-width="0.9"/>
<rect x="190.1" y="426.2" width="2.6" height="2.6" fill="none" stroke="#cc00cc" stroke-width="0.9"/>
<rect x="195.5" y="426.6" width="2.6" height="2.6" fill="none" stroke="#cc00cc" stroke-width="0.9"/>
<rect x="200.9" y="427.0" width="2.6" height="2.6" fill="none" stroke="#cc00cc" stroke-width="0.9"/>
<rect x="206.4" y="427.4" width="2.6" height="2.6" fill="none" stroke="#cc00cc" stroke-width="0.9"/>
<rect x="211.8" y="428.1" width="2.6" height="2.6" fill="none" stroke="#cc00cc" stroke-width="0.9"/>
<rect x="217.2" y="428.8" width="2.6" height="2.6" fill="none" stroke="#cc00cc" stroke-width="0.9"/>
<rect x="222.7" y="429.5" width="2.6" height="2.6" fill="none" stroke="#cc00cc" stroke-width="0.9"/>
<rect x="228.1" y="430.2" width="2.6" height="2.6" fill="none" stroke="#cc00cc" stroke-width="0.9"/>
<rect x="233.5" y="430.8" width="2.6" height="2.6" fill="none" stroke="#cc00cc" stroke-width="0.9"/>
<rect x="239.0" y="431.2" width="2.6" height="2.6" fill="none" stroke="#cc00cc" stroke-width="0.9"/>
<rect x="244.4" y="431.4" width="2.6" height="2.6" fill="none" stroke="#cc00cc" stroke-width="0.9"/>
<rect x="249.8" y="431.7" width="2.6" height="2.6" fill="none" stroke="#cc00cc" stroke-width="0.9"/>
<rect x="255.3" y="432.0" width="2.6" height="2.6" fill="none" stroke="#cc00cc" stroke-width="0.9"/>
<rect x="260.7" y="432.3" width="2.6" height="2.6" fill="none" stroke="#cc00cc" stroke-width="0.9"/>
<rect x="266.1" y="432.6" width="2.6" height="2.6" fill="none" stroke="#cc00cc" stroke-width="0.9"/>
<rect x="271.6" y="433.0" width="2.6" height="2.6" fill="none" stroke="#cc00cc" stroke-width="0.9"/>
<rect x="277.0" y="433.4" width="2.6" height="2.6" fill="none" stroke="#cc00cc" stroke-width="0.9"/>
<rect x="282.4" y="433.8" width="2.6" height="2.6" fill="none" stroke="#cc00cc" stroke-width="0.9"/>
<rect x="287.9" y="434.2" width="2.6" height="2.6" fill="none" stroke="#cc00cc" stroke-width="0.9"/>
<rect x="293.3" y="434.6" width="2.6" height="2.6" fill="none" stroke="#cc00cc" stroke-width="0.9"/>
<rect x="298.8" y="435.0" width="2.6" height="2.6" fill="none" stroke="#cc00cc" stroke-width="0.9"/>
<rect x="304.2" y="435.4" width="2.6" height="2.6" fill="none" stroke="#cc00cc" stroke-width="0.9"/>
<rect x="309.6" y="435.8" width="2.6" height="2.6" fill="none" stroke="#cc00cc" stroke-width="0.9"/>
<rect x="315.1" y="436.2" width="2.6" height="2.6" fill="none" stroke="#cc00cc" stroke-width="0.9"/>
<rect x="320.5" y="436.4" width="2.6" height="2.6" fill="none" stroke="#cc00cc" stroke-width="0.9"/>
<rect x="325.9" y="436.6" width="2.6" height="2.6" fill="none" stroke="#cc00cc" stroke-width="0.9"/>
<rect x="331.4" y="436.8" width="2.6" height="2.6" fill="none" stroke="#cc00cc" stroke-width="0.9"/>
<rect x="336.8" y="437.0" width="2.6" height="2.6" fill="none" stroke="#cc00cc" stroke-width="0.9"/>
<rect x="342.2" y="437.2" width="2.6" height="2.6" fill="none" stroke="#cc00cc" stroke-width="0.9"/>
<rect x="347.7" y="437.4" width="2.6" height="2.6" fill="none" stroke="#cc00cc" stroke-width="0.9"/>
<rect x="353.1" y="437.6" width="2.6" height="2.6" fill="none" stroke="#cc00cc" stroke-width="0.9"/>
<rect x="358.5" y="437.8" width="2.6" height="2.6" fill="none" stroke="#cc00cc" stroke-width="0.9"/>
<rect x="364.0" y="437.9" width="2.6" height="2.6" fill="none" stroke="#cc00cc" stroke-width="0.9"/>
<rect x="369.4" y="438.0" width="2.6" height="2.6" fill="none" stroke="#cc00cc" stroke-width="0.9"/>
<rect x="374.8" y="438.1" width="2.6" height="2.6" fill="none" stroke="#cc00cc" stroke-width="0.9"/>
<rect x="380.3" y="438.2" width="2.6" height="2.6" fill="none" stroke="#cc00cc" stroke-width="0.9"/>
<rect x="385.7" y="438.3" width="2.6" height="2.6" fill="none" stroke="#cc00cc" stroke-width="0.9"/>
<rect x="391.1" y="438.4" width="2.6" height="2.6" fill="none" stroke="#cc00cc" stroke-width="0.9"/>
<rect x="396.6" y="438.5" width="2.6" height="2.6" fill="none" stroke="#cc00cc" stroke-width="0.9"/>
<rect x="402.0" y="438.6" width="2.6" height="2.6" fill="none" stroke="#cc00cc" stroke-width="0.9"/>
<rect x="407.5" y="438.7" width="2.6" height="2.6" fill="none" stroke="#cc00cc" stroke-width="0.9"/>
<rect x="412.9" y="438.8" width="2.6" height="2.6" fill="none" stroke="#cc00cc" stroke-width="0.9"/>
<rect x="418.3" y="438.9" width="2.6" height="2.6" fill="none" stroke="#cc00cc" stroke-width="0.9"/>
<rect x="423.8" y="438.9" width="2.6" height="2.6" fill="none" stroke="#cc00cc" stroke-width="0.9"/>
<rect x="429.2" y="439.0" width="2.6" height="2.6" fill="none" stroke="#cc00cc" stroke-width="0.9"/>
<rect x="434.6" y="439.1" width="2.6" height="2.6" fill="none" stroke="#cc00cc" stroke-width="0.9"/>
<rect x="440.1" y="439.2" width="2.6" height="2.6" fill="none" stroke="#cc00cc" stroke-width="0.9"/>
<rect x="445.5" y="439.3" width="2.6" height="2.6" fill="none" stroke="#cc00cc" stroke-width="0.9"/>
<rect x="450.9" y="439.4" width="2.6" height="2.6" fill="none" stroke="#cc00cc" stroke-width="0.9"/>
<rect x="456.4" y="439.5" width="2.6" height="2.6" fill="none" stroke="#cc00cc" stroke-width="0.9"/>
<rect x="461.8" y="439.6" width="2.6" height="2.6" fill="none" stroke="#cc00cc" stroke-width="0.9"/>
<rect x="467.2" y="439.7" width="2.6" height="2.6" fill="none" stroke="#cc00cc" stroke-width="0.9"/>
<rect x="472.7" y="439.8" width="2.6" height="2.6" fill="none" stroke="#cc00cc" stroke-width="0.9"/>
<rect x="478.1" y="439.9" width="2.6" height="2.6" fill="none" stroke="#cc00cc" stroke-width="0.9"/>
<rect x="483.5" y="440.0" width="2.6" height="2.6" fill="none" stroke="#cc00cc" stroke-width="0.9"/>
<rect x="489.0" y="440.1" width="2.6" height="2.6" fill="none" stroke="#cc00cc" stroke-width="0.9"/>
<rect x="494.4" y="440.2" width="2.6" height="2.6" fill="none" stroke="#cc00cc" stroke-width="0.9"/>
<rect x="499.8" y="440.3" width="2.6" height="2.6" fill="none" stroke="#cc00cc" stroke-width="0.9"/>
<rect x="505.3" y="440.4" width="2.6" height="2.6" fill="none" stroke="#cc00cc" stroke-width="0.9"/>
<rect x="510.7" y="440.5" width="2.6" height="2.6" fill="none" stroke="#cc00cc" stroke-width="0.9"/>
<rect x="516.2" y="440.6" width="2.6" height="2.6" fill="none" stroke="#cc00cc" stroke-width="0.9"/>
<rect x="521.6" y="440.7" width="2.6" height="2.6" fill="none" stroke="#cc00cc" stroke-width="0.9"/>
<rect x="527.0" y="440.8" width="2.6" height="2.6" fill="none" stroke="#cc00cc" stroke-width="0.9"/>
<rect x="532.5" y="440.9" width="2.6" height="2.6" fill="none" stroke="#cc00cc" stroke-width="0.9"/>
<rect x="537.9" y="440.9" width="2.6" height="2.6" fill="none" stroke="#cc00cc" stroke-width="0.9"/>
<rect x="543.3" y="441.0" width="2.6" height="2.6" fill="none" stroke="#cc00cc" stroke-width="0.9"/>
<rect x="548.8" y="441.1" width="2.6" height="2.6" fill="none" stroke="#cc00cc" stroke-width="0.9"/>
<rect x="554.2" y="441.2" width="2.6" height="2.6" fill="none" stroke="#cc00cc" stroke-width="0.9"/>
<rect x="559.6" y="441.3" width="2.6" height="2.6" fill="none" stroke="#cc00cc" stroke-width="0.9"/>
<rect x="565.1" y="441.3" width="2.6" height="2.6" fill="none" stroke="#cc00cc" stroke-width="0.9"/>
<rect x="570.5" y="441.4" width="2.6" height="2.6" fill="none" stroke="#cc00cc" stroke-width="0.9"/>
<rect x="575.9" y="441.5" width="2.6" height="2.6" fill="none" stroke="#cc00cc" stroke-width="0.9"/>
<rect x="581.4" y="441.6" width="2.6" height="2.6" fill="none" stroke="#cc00cc" stroke-width="0.9"/>
<rect x="587.1" y="440.2" width="2.7" height="2.7" fill="none" stroke="#00b400" stroke-width="0.9"/>
<rect x="592.7" y="438.6" width="2.7" height="2.7" fill="none" stroke="#00b400" stroke-width="0.9"/>
<rect x="598.2" y="437.2" width="2.7" height="2.7" fill="none" stroke="#00b400" stroke-width="0.9"/>
<rect x="603.7" y="436.4" width="2.7" height="2.7" fill="none" stroke="#00b400" stroke-width="0.9"/>
<rect x="609.2" y="433.3" width="2.7" height="2.7" fill="none" stroke="#00b400" stroke-width="0.9"/>
<rect x="614.6" y="430.7" width="2.7" height="2.7" fill="none" stroke="#00b400" stroke-width="0.9"/>
<rect x="620.1" y="426.9" width="2.7" height="2.7" fill="none" stroke="#00b400" stroke-width="0.9"/>
<rect x="625.4" y="424.4" width="2.7" height="2.7" fill="none" stroke="#00b400" stroke-width="0.9"/>
<rect x="631.0" y="420.4" width="2.7" height="2.7" fill="none" stroke="#00b400" stroke-width="0.9"/>
<rect x="636.3" y="416.5" width="2.7" height="2.7" fill="none" stroke="#00b400" stroke-width="0.9"/>
<rect x="641.8" y="412.9" width="2.7" height="2.7" fill="none" stroke="#00b400" stroke-width="0.9"/>
<rect x="647.1" y="408.6" width="2.7" height="2.7" fill="none" stroke="#00b400" stroke-width="0.9"/>
<rect x="652.7" y="405.2" width="2.7" height="2.7" fill="none" stroke="#00b400" stroke-width="0.9"/>
<rect x="658.0" y="401.7" width="2.7" height="2.7" fill="none" stroke="#00b400" stroke-width="0.9"/>
<rect x="663.5" y="397.7" width="2.7" height="2.7" fill="none" stroke="#00b400" stroke-width="0.9"/>
<rect x="668.8" y="394.4" width="2.7" height="2.7" fill="none" stroke="#00b400" stroke-width="0.9"/>
<rect x="674.4" y="388.8" width="2.7" height="2.7" fill="none" stroke="#00b400" stroke-width="0.9"/>
<rect x="679.9" y="382.5" width="2.7" height="2.7" fill="none" stroke="#00b400" stroke-width="0.9"/>
<rect x="9.98" y="394.52" width="3.20" height="3.20" fill="#ff0000" />
<rect x="14.91" y="401.03" width="3.20" height="3.20" fill="#ff0000" />
<rect x="20.24" y="407.74" width="3.20" height="3.20" fill="#ff0000" />
<rect x="25.77" y="413.27" width="3.20" height="3.20" fill="#ff0000" />
<rect x="31.29" y="418.20" width="3.20" height="3.20" fill="#ff0000" />
<rect x="36.62" y="422.15" width="3.20" height="3.20" fill="#ff0000" />
<rect x="42.15" y="422.74" width="3.20" height="3.20" fill="#ff0000" />
<rect x="47.87" y="415.24" width="3.20" height="3.20" fill="#0000ff" />
<rect x="53.40" y="404.39" width="3.20" height="3.20" fill="#0000ff" />
<rect x="58.93" y="393.53" width="3.20" height="3.20" fill="#0000ff" />
<rect x="64.26" y="388.60" width="3.20" height="3.20" fill="#0000ff" />
<rect x="69.58" y="390.57" width="3.20" height="3.20" fill="#ff0000" />
<rect x="75.11" y="390.18" width="3.20" height="3.20" fill="#ff0000" />
<rect x="80.44" y="387.22" width="3.20" height="3.20" fill="#0000ff" />
<rect x="85.97" y="381.29" width="3.20" height="3.20" fill="#0000ff" />
<rect x="91.29" y="377.15" width="3.20" height="3.20" fill="#0000ff" />
<rect x="96.62" y="376.36" width="3.20" height="3.20" fill="#ff0000" />
<rect x="102.15" y="386.03" width="3.20" height="3.20" fill="#ff0000" />
<rect x="107.48" y="398.27" width="3.20" height="3.20" fill="#ff0000" />
<rect x="113.01" y="407.94" width="3.20" height="3.20" fill="#ff0000" />
<rect x="118.33" y="414.85" width="3.20" height="3.20" fill="#ff0000" />
<rect x="123.86" y="422.15" width="3.20" height="3.20" fill="#ff0000" />
<rect x="129.19" y="429.65" width="3.20" height="3.20" fill="#ff0000" />
<rect x="134.72" y="433.99" width="3.20" height="3.20" fill="#ff0000" />
<rect x="140.24" y="436.95" width="3.20" height="3.20" fill="#ff0000" />
<rect x="145.57" y="439.32" width="3.20" height="3.20" fill="#ff0000" />
<rect x="150.90" y="439.91" width="3.20" height="3.20" fill="#ff0000" />
<rect x="156.82" y="418.60" width="3.20" height="3.20" fill="#0000ff" />
<rect x="162.35" y="395.11" width="3.20" height="3.20" fill="#0000ff" />
<rect x="167.28" y="380.11" width="3.20" height="3.20" fill="#ff0000" />
<rect x="172.61" y="397.08" width="3.20" height="3.20" fill="#ff0000" />
<rect x="178.14" y="415.83" width="3.20" height="3.20" fill="#ff0000" />
<rect x="183.47" y="426.49" width="3.20" height="3.20" fill="#ff0000" />
<rect x="189.26" y="431.03" width="3.20" height="3.20" fill="#ff0000" />
<rect x="194.58" y="432.02" width="3.20" height="3.20" fill="#ff0000" />
<rect x="199.72" y="436.95" width="3.20" height="3.20" fill="#ff0000" />
<rect x="205.44" y="439.32" width="3.20" height="3.20" fill="#ff0000" />
<rect x="210.77" y="440.90" width="3.20" height="3.20" fill="#ff0000" />
<rect x="216.29" y="441.49" width="3.20" height="3.20" fill="#ff0000" />
<rect x="221.62" y="441.49" width="3.20" height="3.20" fill="#ff0000" />
<rect x="227.15" y="441.29" width="3.20" height="3.20" fill="#ff0000" />
<rect x="233.27" y="430.64" width="3.20" height="3.20" fill="#0000ff" />
<rect x="238.60" y="390.97" width="3.20" height="3.20" fill="#0000ff" />
<rect x="243.93" y="365.51" width="3.20" height="3.20" fill="#0000ff" />
<rect x="248.86" y="353.27" width="3.20" height="3.20" fill="#ff0000" />
<rect x="254.39" y="355.44" width="3.20" height="3.20" fill="#ff0000" />
<rect x="259.72" y="393.53" width="3.20" height="3.20" fill="#ff0000" />
<rect x="265.24" y="416.62" width="3.20" height="3.20" fill="#ff0000" />
<rect x="270.77" y="427.68" width="3.20" height="3.20" fill="#ff0000" />
<rect x="276.49" y="430.64" width="3.20" height="3.20" fill="#0000ff" />
<rect x="282.02" y="420.18" width="3.20" height="3.20" fill="#0000ff" />
<rect x="287.54" y="397.08" width="3.20" height="3.20" fill="#0000ff" />
<rect x="292.87" y="379.32" width="3.20" height="3.20" fill="#0000ff" />
<rect x="298.01" y="368.47" width="3.20" height="3.20" fill="#ff0000" />
<rect x="303.33" y="368.47" width="3.20" height="3.20" fill="#ff0000" />
<rect x="308.66" y="375.77" width="3.20" height="3.20" fill="#ff0000" />
<rect x="314.19" y="384.26" width="3.20" height="3.20" fill="#ff0000" />
<rect x="319.52" y="391.56" width="3.20" height="3.20" fill="#ff0000" />
<rect x="325.04" y="392.94" width="3.20" height="3.20" fill="#ff0000" />
<rect x="330.97" y="389.58" width="3.20" height="3.20" fill="#0000ff" />
<rect x="336.29" y="383.27" width="3.20" height="3.20" fill="#0000ff" />
<rect x="341.82" y="376.56" width="3.20" height="3.20" fill="#0000ff" />
<rect x="346.76" y="372.22" width="3.20" height="3.20" fill="#ff0000" />
<rect x="352.28" y="373.20" width="3.20" height="3.20" fill="#ff0000" />
<rect x="357.68" y="377.74" width="3.20" height="3.20" fill="#ff0000" />
<rect x="363.20" y="387.02" width="3.20" height="3.20" fill="#ff0000" />
<rect x="368.73" y="404.98" width="3.20" height="3.20" fill="#ff0000" />
<rect x="374.06" y="419.98" width="3.20" height="3.20" fill="#ff0000" />
<rect x="379.58" y="430.04" width="3.20" height="3.20" fill="#ff0000" />
<rect x="384.91" y="436.56" width="3.20" height="3.20" fill="#ff0000" />
<rect x="390.44" y="438.93" width="3.20" height="3.20" fill="#ff0000" />
<rect x="395.97" y="439.52" width="3.20" height="3.20" fill="#ff0000" />
<rect x="401.89" y="404.98" width="3.20" height="3.20" fill="#0000ff" />
<rect x="407.22" y="373.79" width="3.20" height="3.20" fill="#0000ff" />
<rect x="412.74" y="355.44" width="3.20" height="3.20" fill="#0000ff" />
<rect x="418.07" y="347.15" width="3.20" height="3.20" fill="#0000ff" />
<rect x="423.40" y="341.23" width="3.20" height="3.20" fill="#0000ff" />
<rect x="428.93" y="338.86" width="3.20" height="3.20" fill="#0000ff" />
<rect x="434.06" y="337.68" width="3.20" height="3.20" fill="#ff0000" />
<rect x="439.58" y="362.94" width="3.20" height="3.20" fill="#ff0000" />
<rect x="445.11" y="388.01" width="3.20" height="3.20" fill="#ff0000" />
<rect x="450.44" y="403.01" width="3.20" height="3.20" fill="#ff0000" />
<rect x="455.97" y="404.39" width="3.20" height="3.20" fill="#ff0000" />
<rect x="461.29" y="404.98" width="3.20" height="3.20" fill="#ff0000" />
<rect x="466.82" y="409.72" width="3.20" height="3.20" fill="#ff0000" />
<rect x="472.15" y="416.62" width="3.20" height="3.20" fill="#ff0000" />
<rect x="477.68" y="422.15" width="3.20" height="3.20" fill="#ff0000" />
<rect x="483.20" y="426.10" width="3.20" height="3.20" fill="#ff0000" />
<rect x="488.53" y="429.65" width="3.20" height="3.20" fill="#ff0000" />
<rect x="494.06" y="430.44" width="3.20" height="3.20" fill="#ff0000" />
<rect x="499.78" y="425.51" width="3.20" height="3.20" fill="#0000ff" />
<rect x="505.31" y="418.79" width="3.20" height="3.20" fill="#0000ff" />
<rect x="510.64" y="411.29" width="3.20" height="3.20" fill="#0000ff" />
<rect x="515.77" y="407.35" width="3.20" height="3.20" fill="#ff0000" />
<rect x="521.36" y="408.33" width="3.20" height="3.20" fill="#ff0000" />
<rect x="526.69" y="412.68" width="3.20" height="3.20" fill="#ff0000" />
<rect x="532.02" y="415.24" width="3.20" height="3.20" fill="#ff0000" />
<rect x="537.74" y="413.66" width="3.20" height="3.20" fill="#0000ff" />
<rect x="543.27" y="405.77" width="3.20" height="3.20" fill="#0000ff" />
<rect x="548.79" y="393.53" width="3.20" height="3.20" fill="#0000ff" />
<rect x="554.32" y="378.73" width="3.20" height="3.20" fill="#0000ff" />
<rect x="559.65" y="365.51" width="3.20" height="3.20" fill="#0000ff" />
<rect x="565.18" y="354.65" width="3.20" height="3.20" fill="#0000ff" />
<rect x="570.70" y="347.54" width="3.20" height="3.20" fill="#0000ff" />
<rect x="576.03" y="343.20" width="3.20" height="3.20" fill="#0000ff" />
<rect x="581.56" y="339.85" width="3.20" height="3.20" fill="#0000ff" />
<rect x="586.69" y="338.27" width="3.20" height="3.20" fill="#ff0000" />
<rect x="592.02" y="363.53" width="3.20" height="3.20" fill="#ff0000" />
<rect x="597.54" y="390.18" width="3.20" height="3.20" fill="#ff0000" />
<rect x="602.87" y="408.33" width="3.20" height="3.20" fill="#ff0000" />
<rect x="608.40" y="419.19" width="3.20" height="3.20" fill="#ff0000" />
<rect x="614.12" y="414.65" width="3.20" height="3.20" fill="#0000ff" />
<rect x="619.65" y="394.12" width="3.20" height="3.20" fill="#0000ff" />
<rect x="625.18" y="379.72" width="3.20" height="3.20" fill="#0000ff" />
<rect x="630.31" y="379.12" width="3.20" height="3.20" fill="#ff0000" />
<rect x="635.64" y="383.07" width="3.20" height="3.20" fill="#ff0000" />
<rect x="641.16" y="390.77" width="3.20" height="3.20" fill="#ff0000" />
<rect x="646.49" y="395.51" width="3.20" height="3.20" fill="#ff0000" />
<rect x="652.02" y="398.86" width="3.20" height="3.20" fill="#ff0000" />
<rect x="657.35" y="402.41" width="3.20" height="3.20" fill="#ff0000" />
<rect x="662.87" y="406.95" width="3.20" height="3.20" fill="#ff0000" />
<rect x="668.40" y="412.68" width="3.20" height="3.20" fill="#ff0000" />
<rect x="673.73" y="417.81" width="3.20" height="3.20" fill="#ff0000" />
<rect x="679.06" y="422.15" width="3.20" height="3.20" fill="#ff0000" />
<circle cx="65.9" cy="390.2" r="4.1" fill="#f4f4f4"/>
<path d="M65.9,386.6 V391.2" stroke="#000" stroke-width="2" fill="none"/>
<circle cx="125.5" cy="390.2" r="4.1" fill="#f4f4f4"/>
<path d="M125.5,386.6 V391.2" stroke="#000" stroke-width="2" fill="none"/>
<circle cx="168.9" cy="390.2" r="4.1" fill="#f4f4f4"/>
<path d="M168.9,386.6 V391.2" stroke="#000" stroke-width="2" fill="none"/>
<circle cx="251.0" cy="390.2" r="4.1" fill="#f4f4f4"/>
<path d="M251.0,386.6 V391.2" stroke="#000" stroke-width="2" fill="none"/>
<circle cx="299.8" cy="390.2" r="4.1" fill="#f4f4f4"/>
<path d="M299.8,386.6 V391.2" stroke="#000" stroke-width="2" fill="none"/>
<circle cx="348.7" cy="390.2" r="4.1" fill="#f4f4f4"/>
<path d="M348.7,386.6 V391.2" stroke="#000" stroke-width="2" fill="none"/>
<circle cx="436.0" cy="390.2" r="4.1" fill="#f4f4f4"/>
<path d="M436.0,386.6 V391.2" stroke="#000" stroke-width="2" fill="none"/>
<circle cx="517.8" cy="390.2" r="4.1" fill="#f4f4f4"/>
<path d="M517.8,386.6 V391.2" stroke="#000" stroke-width="2" fill="none"/>
<circle cx="190.3" cy="432.2" r="4.4" fill="#000" stroke="#fff" stroke-width="0.9"/>
<text x="190.3" y="435.0" font-size="8" fill="#fff" text-anchor="middle" font-weight="normal" >1</text>
<circle cx="196.8" cy="432.2" r="4.4" fill="#000" stroke="#fff" stroke-width="0.9"/>
<text x="196.8" y="435.0" font-size="8" fill="#fff" text-anchor="middle" font-weight="normal" >2</text>
<circle cx="278.1" cy="432.2" r="4.4" fill="#000" stroke="#fff" stroke-width="0.9"/>
<text x="278.1" y="435.0" font-size="8" fill="#fff" text-anchor="middle" font-weight="normal" >2</text>
<circle cx="381.2" cy="431.6" r="4.4" fill="#000" stroke="#fff" stroke-width="0.9"/>
<text x="381.2" y="434.4" font-size="8" fill="#fff" text-anchor="middle" font-weight="normal" >2</text>
<circle cx="419.7" cy="432.0" r="4.4" fill="#000" stroke="#fff" stroke-width="0.9"/>
<text x="419.7" y="434.8" font-size="8" fill="#fff" text-anchor="middle" font-weight="normal" >5</text>
<circle cx="457.6" cy="432.0" r="4.4" fill="#000" stroke="#fff" stroke-width="0.9"/>
<text x="457.6" y="434.8" font-size="8" fill="#fff" text-anchor="middle" font-weight="normal" >3</text>
<circle cx="136.3" cy="431.6" r="4.4" fill="#000" stroke="#fff" stroke-width="0.9"/>
<text x="136.3" y="434.4" font-size="8" fill="#fff" text-anchor="middle" font-weight="normal" >1</text>
<circle cx="419.7" cy="348.7" r="4.4" fill="#000" stroke="#fff" stroke-width="0.9"/>
<text x="419.7" y="351.5" font-size="8" fill="#fff" text-anchor="middle" font-weight="normal" >1</text>
<circle cx="577.6" cy="348.7" r="4.4" fill="#000" stroke="#fff" stroke-width="0.9"/>
<text x="577.6" y="351.5" font-size="8" fill="#fff" text-anchor="middle" font-weight="normal" >1</text>
<rect x="15.00" y="427.80" width="27.20" height="16.60" fill="#ee7d0c" />
<text x="28.6" y="439.5" font-size="9.4" fill="#ffe4c0" text-anchor="middle" font-weight="normal" textLength="15.6" lengthAdjust="spacingAndGlyphs" >LV1</text>
<rect x="46.00" y="427.80" width="26.80" height="16.60" fill="#ee7d0c" />
<text x="59.4" y="439.5" font-size="9.4" fill="#ffe4c0" text-anchor="middle" font-weight="normal" textLength="15.6" lengthAdjust="spacingAndGlyphs" >LV2</text>
<line x1="11.00" y1="451.40" x2="676.80" y2="451.40" stroke="#9400d3" stroke-width="1.8" />
<line x1="11.00" y1="461.30" x2="676.80" y2="461.30" stroke="#9400d3" stroke-width="1" stroke-dasharray="2,2"/>
<line x1="11.00" y1="491.20" x2="677.00" y2="491.20" stroke="#c4c4c4" stroke-width="0.8" stroke-dasharray="2,2"/>
<text x="14.6" y="458.0" font-size="7.3" fill="#fff" text-anchor="start" font-weight="normal" textLength="117.4" lengthAdjust="spacingAndGlyphs" >M15 TEN_to_CHI_no_OSCILLATOR_DX</text>
<path d="M10.0,490.0 C13.1,490.5 22.3,492.0 28.4,493.0 C34.6,494.1 39.9,496.4 46.8,496.5 C53.7,496.6 61.8,495.1 69.9,493.5 C77.9,491.8 86.7,488.1 95.2,486.6 C103.6,485.1 111.7,484.5 120.5,484.3 C129.3,484.1 138.9,485.1 148.1,485.4 C157.3,485.8 166.2,485.9 175.8,486.6 C185.4,487.2 197.3,490.0 205.7,489.4 C214.1,488.7 220.7,483.3 226.4,482.4 C232.1,481.6 235.6,483.2 240.0,484.3 C244.4,485.4 247.0,486.8 253.0,488.9 C259.0,491.0 268.8,494.8 276.0,497.0 C283.3,499.1 289.9,500.5 296.8,501.6 C303.7,502.6 311.3,504.6 317.5,503.4 C323.6,502.2 327.5,497.8 333.6,494.7 C339.7,491.5 346.6,486.6 354.3,484.3 C362.0,482.0 372.0,482.6 379.6,480.8 C387.3,479.1 393.5,475.1 400.4,473.9 C407.3,472.8 415.0,474.2 421.1,473.9 C427.2,473.6 430.7,472.1 437.2,472.1 C443.7,472.1 455.2,473.5 460.0,473.9 C464.8,474.3 462.8,473.8 466.1,474.4 C469.4,475.0 474.9,477.1 479.9,477.4 C484.9,477.7 491.1,475.5 496.0,476.2 C501.0,477.0 504.9,479.4 509.9,482.0 C514.8,484.6 520.6,489.7 526.0,491.9 C531.3,494.1 537.5,495.4 542.1,495.1 C546.7,494.8 549.0,492.8 553.6,490.0 C558.2,487.3 564.0,482.9 569.7,478.5 C575.5,474.1 582.8,467.0 588.1,463.6 C593.5,460.1 597.3,459.2 602.0,457.8 C606.6,456.5 610.4,455.9 615.8,455.5 C621.1,455.1 628.4,454.6 634.2,455.5 C639.9,456.5 645.3,459.8 650.3,461.3 C655.3,462.7 659.7,464.1 664.1,464.3 C668.5,464.4 674.7,462.3 676.8,462.0" fill="none" stroke="#d2d200" stroke-width="1.0"  stroke-dasharray="1.4,2.2" stroke-linecap="butt"/>
<path d="M10.0,520.0 C13.8,518.8 23.4,515.4 33.0,513.1 C42.6,510.8 56.0,508.2 67.6,506.2 C79.1,504.2 91.0,502.4 102.1,501.1 C113.2,499.8 122.8,498.5 134.3,498.1 C145.8,497.7 159.3,498.0 171.2,498.6 C183.1,499.1 194.2,499.1 205.7,501.6 C217.2,504.0 232.1,510.2 240.0,513.1 C247.9,515.9 247.0,517.1 253.0,518.8 C259.0,520.6 268.4,522.3 276.0,523.4 C283.7,524.6 291.4,525.5 299.1,525.7 C306.7,526.0 314.4,526.4 322.1,525.0 C329.8,523.7 337.4,520.2 345.1,517.7 C352.8,515.1 361.2,511.0 368.1,509.6 C375.0,508.3 379.6,509.0 386.6,509.6 C393.5,510.2 401.9,512.5 409.6,513.1 C417.3,513.6 424.2,513.3 432.6,513.1 C441.0,512.9 453.3,511.7 460.0,511.9 C466.7,512.1 467.0,514.4 473.0,514.2 C479.0,514.0 488.8,512.6 496.0,510.8 C503.3,509.0 509.9,504.9 516.8,503.4 C523.7,501.9 530.6,502.2 537.5,501.6 C544.4,500.9 551.3,500.6 558.2,499.3 C565.1,497.9 572.0,495.2 578.9,493.5 C585.8,491.8 593.5,490.4 599.6,488.9 C605.8,487.4 610.0,485.6 615.8,484.3 C621.5,482.9 628.0,482.2 634.2,480.8 C640.3,479.5 645.5,476.6 652.6,476.2 C659.7,475.8 672.7,478.2 676.8,478.5" fill="none" stroke="#d2d200" stroke-width="1.0"  stroke-dasharray="1.4,2.2" stroke-linecap="butt"/>
<path d="M21.5,538.9 C25.3,536.5 36.9,528.5 44.5,524.6 C52.2,520.7 59.9,516.9 67.6,515.4 C75.2,513.8 82.9,515.0 90.6,515.4 C98.3,515.8 106.3,518.2 113.6,517.7 C120.9,517.1 126.6,513.3 134.3,511.9 C142.0,510.6 151.2,509.4 159.6,509.6 C168.1,509.8 177.3,512.1 185.0,513.1 C192.6,514.0 199.6,511.7 205.7,515.4 C211.8,519.0 216.1,530.0 221.8,534.9 C227.5,539.9 234.8,543.0 240.0,545.3 C245.2,547.6 247.0,547.8 253.0,548.8 C259.0,549.7 268.4,551.1 276.0,551.1 C283.7,551.1 289.9,549.1 299.1,548.8 C308.3,548.4 323.6,549.5 331.3,548.8 C339.0,548.0 339.7,545.7 345.1,544.2 C350.5,542.6 358.2,540.7 363.5,539.5 C368.9,538.4 373.1,536.7 377.3,537.2 C381.6,537.8 384.6,540.7 388.9,543.0 C393.1,545.3 396.5,549.2 402.7,551.1 C408.8,552.9 416.1,553.6 425.7,554.1 C435.3,554.5 452.9,554.3 460.0,554.1 C467.1,553.8 464.3,553.1 468.4,552.7 C472.5,552.3 479.2,553.4 484.5,551.7 C489.9,550.1 495.3,547.9 500.7,543.0 C506.0,538.1 512.2,527.7 516.8,522.3 C521.4,516.9 524.4,513.4 528.3,510.8 C532.1,508.2 535.6,506.8 539.8,506.6 C544.0,506.4 548.6,508.0 553.6,509.6 C558.6,511.3 564.0,514.8 569.7,516.5 C575.5,518.2 582.0,520.0 588.1,520.0 C594.3,520.0 600.4,518.1 606.6,516.5 C612.7,515.0 618.8,513.5 625.0,510.8 C631.1,508.1 638.0,503.5 643.4,500.4 C648.8,497.3 651.6,493.3 657.2,492.3 C662.8,491.4 673.5,494.3 676.8,494.7" fill="none" stroke="#d2d200" stroke-width="1.0"  stroke-dasharray="1.4,2.2" stroke-linecap="butt"/>
<path d="M10.0,510.8 C15.0,510.8 33.0,512.7 39.9,510.8 C46.8,508.8 47.2,501.3 51.4,499.3 C55.7,497.3 59.1,500.3 65.3,498.8 C71.4,497.3 81.4,490.9 88.3,490.0 C95.2,489.2 100.6,492.4 106.7,493.5 C112.8,494.6 119.4,494.2 125.1,496.5 C130.9,498.8 135.1,506.0 141.2,507.3 C147.4,508.6 155.0,504.1 162.0,504.3 C168.9,504.5 176.1,507.8 182.7,508.5 C189.2,509.2 196.5,506.5 201.1,508.5 C205.7,510.4 207.6,515.6 210.3,520.0 C213.0,524.4 214.7,530.9 217.2,534.9 C219.7,539.0 222.4,544.0 225.3,544.2 C228.1,544.3 231.8,538.8 234.5,536.1 C237.2,533.4 237.8,529.8 241.5,528.0 C245.2,526.3 251.9,524.8 256.5,525.7 C261.1,526.7 265.9,532.8 269.1,533.8 C272.4,534.7 272.6,534.7 276.0,531.5 C279.5,528.2 285.6,517.7 289.9,514.2 C294.1,510.8 297.0,511.0 301.4,510.8 C305.8,510.5 311.3,514.9 316.3,512.6 C321.3,510.3 327.3,500.4 331.3,497.0 C335.3,493.5 337.4,492.7 340.5,491.9 C343.6,491.0 347.2,491.7 349.7,491.9 C352.2,492.1 353.6,493.0 355.5,493.0 C357.4,493.0 359.1,490.5 361.2,491.9 C363.3,493.3 365.5,496.1 368.1,501.6 C370.8,507.0 374.1,517.3 377.3,524.6 C380.6,531.9 384.8,541.8 387.7,545.3 C390.6,548.8 391.0,548.2 394.6,545.3 C398.3,542.4 405.2,534.0 409.6,528.0 C414.0,522.1 417.4,514.0 421.1,509.6 C424.7,505.2 428.0,502.9 431.5,501.6 C434.9,500.2 438.2,502.4 441.8,501.6 C445.5,500.7 452.0,497.1 453.3,496.5 C454.7,495.9 448.6,498.3 450.0,498.1 C451.4,497.9 458.4,495.1 461.5,495.1 C464.6,495.1 466.1,496.7 468.4,498.1 C470.7,499.5 472.3,502.2 475.3,503.4 C478.4,504.6 483.4,505.0 486.8,505.0 C490.3,505.0 493.0,504.4 496.0,503.4 C499.1,502.4 502.2,499.8 505.3,499.3 C508.3,498.8 511.4,499.6 514.5,500.4 C517.5,501.3 521.2,503.7 523.7,504.3 C526.2,505.0 526.7,505.2 529.4,504.3 C532.1,503.5 536.1,502.0 539.8,499.3 C543.4,496.5 547.1,491.6 551.3,487.7 C555.5,483.9 559.7,479.7 565.1,476.2 C570.5,472.8 578.2,467.8 583.5,467.0 C588.9,466.3 592.7,470.3 597.3,471.6 C602.0,473.0 606.6,474.1 611.2,475.1 C615.8,476.0 620.0,476.0 625.0,477.4 C630.0,478.7 635.7,481.5 641.1,483.1 C646.5,484.8 651.3,485.6 657.2,487.3 C663.2,489.0 673.5,492.5 676.8,493.5" fill="none" stroke="#1e90ff" stroke-width="1.9" stroke-linecap="round" />
<path d="M10.0,508.5 C15.4,508.7 32.3,510.3 42.2,509.6 C52.2,508.9 60.7,506.4 69.9,504.3 C79.1,502.2 90.2,498.6 97.5,497.0 C104.8,495.3 107.8,495.0 113.6,494.7 C119.4,494.3 124.7,493.7 132.0,494.7 C139.3,495.6 148.9,498.7 157.3,500.4 C165.8,502.1 175.0,504.1 182.7,505.0 C190.3,506.0 197.6,505.0 203.4,506.2 C209.1,507.3 212.6,509.4 217.2,511.9 C221.8,514.4 228.9,519.6 231.0,521.1 C233.2,522.7 227.9,520.1 230.0,521.1 C232.1,522.2 238.8,525.9 243.8,527.3 C248.8,528.8 254.6,529.0 259.9,529.6 C265.3,530.3 271.1,531.6 276.0,531.5 C281.0,531.3 284.9,530.3 289.9,528.7 C294.8,527.1 300.2,523.9 306.0,521.8 C311.7,519.8 319.0,518.6 324.4,516.5 C329.8,514.5 333.6,511.9 338.2,509.6 C342.8,507.3 347.4,504.5 352.0,502.7 C356.6,500.9 361.6,499.2 365.8,498.8 C370.1,498.4 373.5,498.6 377.3,500.4 C381.2,502.2 385.0,506.4 388.9,509.6 C392.7,512.9 396.5,517.2 400.4,520.0 C404.2,522.8 408.0,525.3 411.9,526.4 C415.7,527.5 419.2,527.3 423.4,526.4 C427.6,525.5 432.6,523.2 437.2,521.1 C441.8,519.1 448.9,515.4 451.0,514.2 C453.2,513.1 447.9,515.6 450.0,514.2 C452.1,512.8 459.2,507.9 463.8,505.7 C468.4,503.5 471.5,501.9 477.6,501.1 C483.8,500.3 493.7,501.1 500.7,501.1 C507.6,501.1 513.7,500.9 519.1,501.1 C524.4,501.3 528.7,501.9 532.9,502.0 C537.1,502.1 540.2,502.3 544.4,501.6 C548.6,500.8 553.6,499.1 558.2,497.4 C562.8,495.7 567.4,493.6 572.0,491.2 C576.6,488.8 581.2,485.6 585.8,483.1 C590.4,480.7 595.0,478.3 599.6,476.7 C604.3,475.1 608.5,474.0 613.5,473.5 C618.5,472.9 624.2,473.0 629.6,473.5 C635.0,473.9 640.3,475.1 645.7,476.2 C651.1,477.4 656.6,478.8 661.8,480.4 C667.0,481.9 674.3,484.6 676.8,485.4" fill="none" stroke="#ff0000" stroke-width="2.1" stroke-linecap="round" />
<line x1="11.00" y1="544.20" x2="676.80" y2="544.20" stroke="#9400d3" stroke-width="1" stroke-dasharray="2,2"/>
<line x1="11.00" y1="546.70" x2="676.80" y2="546.70" stroke="#9400d3" stroke-width="3.6" />
<g opacity="0.95">
<rect x="15.00" y="539.00" width="27.20" height="16.60" fill="#ee7d0c" />
<rect x="45.80" y="539.00" width="27.00" height="16.60" fill="#7a7a7a" />
<text x="28.6" y="551.0" font-size="9.4" fill="#ffe4c0" text-anchor="middle" font-weight="normal" textLength="15.6" lengthAdjust="spacingAndGlyphs" >TF1</text>
<text x="59.3" y="551.0" font-size="9.4" fill="#dcdcdc" text-anchor="middle" font-weight="normal" textLength="15.6" lengthAdjust="spacingAndGlyphs" >TF2</text>
</g>
<line x1="11.00" y1="544.20" x2="74.00" y2="544.20" stroke="#9400d3" stroke-width="1" stroke-dasharray="2,2"/>
<line x1="11.00" y1="546.70" x2="74.00" y2="546.70" stroke="#9400d3" stroke-width="3.6" />
<rect x="691.20" y="448.20" width="21.60" height="6.20" fill="#b400e6" />
<text x="693.5" y="453.6" font-size="7" fill="#5c0c86" text-anchor="start" font-weight="normal" textLength="17.0" lengthAdjust="spacingAndGlyphs" >0.161</text>
<text x="693.5" y="458.8" font-size="6" fill="#fff" text-anchor="start" font-weight="normal" textLength="17.0" lengthAdjust="spacingAndGlyphs" >0.104</text>
<rect x="691.20" y="457.80" width="21.60" height="6.20" fill="#b400e6" />
<text x="693.5" y="463.2" font-size="7" fill="#5c0c86" text-anchor="start" font-weight="normal" textLength="17.0" lengthAdjust="spacingAndGlyphs" >0.123</text>
<text x="693.2" y="494.0" font-size="7.3" fill="#fff" text-anchor="start" font-weight="normal" >0.00</text>
<rect x="691.20" y="540.70" width="23.00" height="9.80" fill="#b400e6" />
<text x="693.5" y="549.2" font-size="7" fill="#5c0c86" text-anchor="start" font-weight="normal" textLength="19.0" lengthAdjust="spacingAndGlyphs" >-0.227</text>
<text x="693.2" y="557.4" font-size="7.3" fill="#fff" text-anchor="start" font-weight="normal" >-0.274</text>
<line x1="11.00" y1="560.30" x2="690.50" y2="560.30" stroke="#a8a8a8" stroke-width="1.8" />
<rect x="10.20" y="562.60" width="3.80" height="4.40" fill="#ff0000" />
<rect x="15.63" y="562.60" width="3.80" height="4.40" fill="#ff0000" />
<rect x="21.07" y="562.60" width="3.80" height="4.40" fill="#ff0000" />
<rect x="26.50" y="562.60" width="3.80" height="4.40" fill="#ff0000" />
<rect x="31.94" y="562.60" width="3.80" height="4.40" fill="#ff0000" />
<rect x="37.38" y="562.60" width="3.80" height="4.40" fill="#ff0000" />
<rect x="42.81" y="562.60" width="3.80" height="4.40" fill="#ff0000" />
<rect x="48.24" y="562.60" width="3.80" height="4.40" fill="#ff0000" />
<rect x="53.68" y="562.60" width="3.80" height="4.40" fill="#ff0000" />
<rect x="59.12" y="562.60" width="3.80" height="4.40" fill="#ff0000" />
<rect x="64.55" y="562.60" width="3.80" height="4.40" fill="#ff0000" />
<rect x="69.98" y="562.60" width="3.80" height="4.40" fill="#ff0000" />
<rect x="75.42" y="562.60" width="3.80" height="4.40" fill="#ff0000" />
<rect x="80.86" y="562.60" width="3.80" height="4.40" fill="#ff0000" />
<rect x="86.29" y="562.60" width="3.80" height="4.40" fill="#ff0000" />
<rect x="91.72" y="562.60" width="3.80" height="4.40" fill="#ff0000" />
<rect x="97.16" y="562.60" width="3.80" height="4.40" fill="#ff0000" />
<rect x="102.59" y="562.60" width="3.80" height="4.40" fill="#ff0000" />
<rect x="151.51" y="562.60" width="3.80" height="4.40" fill="#ff0000" />
<rect x="156.94" y="562.60" width="3.80" height="4.40" fill="#ff0000" />
<rect x="162.38" y="562.60" width="3.80" height="4.40" fill="#ff0000" />
<rect x="167.81" y="562.60" width="3.80" height="4.40" fill="#ff0000" />
<rect x="173.25" y="562.60" width="3.80" height="4.40" fill="#ff0000" />
<rect x="178.68" y="562.60" width="3.80" height="4.40" fill="#ff0000" />
<rect x="184.12" y="562.60" width="3.80" height="4.40" fill="#ff0000" />
<rect x="189.55" y="562.60" width="3.80" height="4.40" fill="#ff0000" />
<rect x="194.99" y="562.60" width="3.80" height="4.40" fill="#ff0000" />
<rect x="200.42" y="562.60" width="3.80" height="4.40" fill="#ff0000" />
<rect x="205.86" y="562.60" width="3.80" height="4.40" fill="#ff0000" />
<rect x="211.29" y="562.60" width="3.80" height="4.40" fill="#ff0000" />
<rect x="216.73" y="562.60" width="3.80" height="4.40" fill="#ff0000" />
<rect x="222.16" y="562.60" width="3.80" height="4.40" fill="#ff0000" />
<rect x="227.60" y="562.60" width="3.80" height="4.40" fill="#ff0000" />
<rect x="233.03" y="562.60" width="3.80" height="4.40" fill="#ff0000" />
<rect x="238.47" y="562.60" width="3.80" height="4.40" fill="#ff0000" />
<rect x="243.90" y="562.60" width="3.80" height="4.40" fill="#ff0000" />
<rect x="249.34" y="562.60" width="3.80" height="4.40" fill="#ff0000" />
<rect x="254.77" y="562.60" width="3.80" height="4.40" fill="#ff0000" />
<rect x="260.21" y="562.60" width="3.80" height="4.40" fill="#ff0000" />
<rect x="265.64" y="562.60" width="3.80" height="4.40" fill="#ff0000" />
<rect x="271.08" y="562.60" width="3.80" height="4.40" fill="#ff0000" />
<rect x="276.51" y="562.60" width="3.80" height="4.40" fill="#ff0000" />
<rect x="281.95" y="562.60" width="3.80" height="4.40" fill="#ff0000" />
<rect x="287.38" y="562.60" width="3.80" height="4.40" fill="#ff0000" />
<rect x="292.82" y="562.60" width="3.80" height="4.40" fill="#ff0000" />
<rect x="298.25" y="562.60" width="3.80" height="4.40" fill="#ff0000" />
<rect x="303.69" y="562.60" width="3.80" height="4.40" fill="#ff0000" />
<rect x="309.12" y="562.60" width="3.80" height="4.40" fill="#ff0000" />
<rect x="314.56" y="562.60" width="3.80" height="4.40" fill="#ff0000" />
<rect x="319.99" y="562.60" width="3.80" height="4.40" fill="#ff0000" />
<rect x="325.43" y="562.60" width="3.80" height="4.40" fill="#ff0000" />
<rect x="330.86" y="562.60" width="3.80" height="4.40" fill="#ff0000" />
<rect x="336.30" y="562.60" width="3.80" height="4.40" fill="#ff0000" />
<rect x="341.73" y="562.60" width="3.80" height="4.40" fill="#ff0000" />
<rect x="347.17" y="562.60" width="3.80" height="4.40" fill="#ff0000" />
<rect x="352.60" y="562.60" width="3.80" height="4.40" fill="#ff0000" />
<rect x="358.04" y="562.60" width="3.80" height="4.40" fill="#ff0000" />
<rect x="363.47" y="562.60" width="3.80" height="4.40" fill="#ff0000" />
<rect x="368.91" y="562.60" width="3.80" height="4.40" fill="#ff0000" />
<rect x="374.34" y="562.60" width="3.80" height="4.40" fill="#ff0000" />
<rect x="379.78" y="562.60" width="3.80" height="4.40" fill="#ff0000" />
<rect x="385.21" y="562.60" width="3.80" height="4.40" fill="#ff0000" />
<rect x="390.65" y="562.60" width="3.80" height="4.40" fill="#ff0000" />
<rect x="396.08" y="562.60" width="3.80" height="4.40" fill="#ff0000" />
<rect x="401.52" y="562.60" width="3.80" height="4.40" fill="#ff0000" />
<rect x="406.95" y="562.60" width="3.80" height="4.40" fill="#ff0000" />
<rect x="412.39" y="562.60" width="3.80" height="4.40" fill="#ff0000" />
<rect x="417.82" y="562.60" width="3.80" height="4.40" fill="#ff0000" />
<rect x="423.26" y="562.60" width="3.80" height="4.40" fill="#ff0000" />
<rect x="428.69" y="562.60" width="3.80" height="4.40" fill="#ff0000" />
<rect x="434.13" y="562.60" width="3.80" height="4.40" fill="#ff0000" />
<rect x="439.56" y="562.60" width="3.80" height="4.40" fill="#ff0000" />
<rect x="445.00" y="562.60" width="3.80" height="4.40" fill="#ffff00" />
<rect x="450.43" y="562.60" width="3.80" height="4.40" fill="#ffff00" />
<rect x="455.87" y="562.60" width="3.80" height="4.40" fill="#ffff00" />
<rect x="461.30" y="562.60" width="3.80" height="4.40" fill="#ffff00" />
<rect x="466.74" y="562.60" width="3.80" height="4.40" fill="#ffff00" />
<rect x="472.17" y="562.60" width="3.80" height="4.40" fill="#ffff00" />
<rect x="477.61" y="562.60" width="3.80" height="4.40" fill="#ffff00" />
<rect x="483.04" y="562.60" width="3.80" height="4.40" fill="#ffff00" />
<rect x="488.48" y="562.60" width="3.80" height="4.40" fill="#ffff00" />
<rect x="493.91" y="562.60" width="3.80" height="4.40" fill="#ffff00" />
<rect x="499.35" y="562.60" width="3.80" height="4.40" fill="#ffff00" />
<rect x="504.78" y="562.60" width="3.80" height="4.40" fill="#ffff00" />
<rect x="510.22" y="562.60" width="3.80" height="4.40" fill="#ffff00" />
<rect x="515.65" y="562.60" width="3.80" height="4.40" fill="#ffff00" />
<rect x="521.09" y="562.60" width="3.80" height="4.40" fill="#ffff00" />
<rect x="526.52" y="562.60" width="3.80" height="4.40" fill="#ffff00" />
<rect x="531.96" y="562.60" width="3.80" height="4.40" fill="#ffff00" />
<rect x="537.39" y="562.60" width="3.80" height="4.40" fill="#ffff00" />
<rect x="542.83" y="562.60" width="3.80" height="4.40" fill="#ffff00" />
<rect x="548.26" y="562.60" width="3.80" height="4.40" fill="#0000ff" />
<rect x="553.70" y="562.60" width="3.80" height="4.40" fill="#0000ff" />
<rect x="559.13" y="562.60" width="3.80" height="4.40" fill="#0000ff" />
<rect x="564.57" y="562.60" width="3.80" height="4.40" fill="#0000ff" />
<rect x="570.00" y="562.60" width="3.80" height="4.40" fill="#0000ff" />
<rect x="575.44" y="562.60" width="3.80" height="4.40" fill="#0000ff" />
<rect x="580.88" y="562.60" width="3.80" height="4.40" fill="#0000ff" />
<rect x="586.31" y="562.60" width="3.80" height="4.40" fill="#0000ff" />
<rect x="591.75" y="562.60" width="3.80" height="4.40" fill="#0000ff" />
<rect x="597.18" y="562.60" width="3.80" height="4.40" fill="#0000ff" />
<rect x="602.62" y="562.60" width="3.80" height="4.40" fill="#0000ff" />
<rect x="608.05" y="562.60" width="3.80" height="4.40" fill="#0000ff" />
<rect x="613.49" y="562.60" width="3.80" height="4.40" fill="#0000ff" />
<rect x="618.92" y="562.60" width="3.80" height="4.40" fill="#0000ff" />
<rect x="624.36" y="562.60" width="3.80" height="4.40" fill="#0000ff" />
<rect x="629.79" y="562.60" width="3.80" height="4.40" fill="#0000ff" />
<rect x="635.23" y="562.60" width="3.80" height="4.40" fill="#0000ff" />
<rect x="640.66" y="562.60" width="3.80" height="4.40" fill="#0000ff" />
<rect x="646.10" y="562.60" width="3.80" height="4.40" fill="#0000ff" />
<rect x="651.53" y="562.60" width="3.80" height="4.40" fill="#0000ff" />
<rect x="656.97" y="562.60" width="3.80" height="4.40" fill="#0000ff" />
<rect x="662.40" y="562.60" width="3.80" height="4.40" fill="#0000ff" />
<rect x="667.84" y="562.60" width="3.80" height="4.40" fill="#0000ff" />
<rect x="673.27" y="562.60" width="3.80" height="4.40" fill="#0000ff" />
<rect x="678.71" y="562.60" width="3.80" height="4.40" fill="#0000ff" />
<rect x="684.14" y="562.60" width="3.80" height="4.40" fill="#0000ff" />
<clipPath id="hc1"><rect x="11" y="560" width="680" height="8.7"/></clipPath><g clip-path="url(#hc1)">
<text x="14.8" y="569.1" font-size="7.6" fill="#fff" text-anchor="start" font-weight="normal" textLength="90.0" lengthAdjust="spacingAndGlyphs" >TEN_to_CHI_no_HISTOGRAM</text>
<text x="155.8" y="569.1" font-size="7.3" fill="#fff" text-anchor="start" font-weight="normal" textLength="18.5" lengthAdjust="spacingAndGlyphs" >0.0000</text>
</g>
<path d="M11.5,563.5 l3.6,4.5 h-3.6 z" fill="#fff"/>
<text x="694.0" y="567.5" font-size="6.5" fill="#fff" text-anchor="start" font-weight="normal" >1.00</text>
<text x="11.4" y="577.6" font-size="7.3" fill="#fff" text-anchor="start" font-weight="normal" textLength="36.5" lengthAdjust="spacingAndGlyphs" >21 Nov 2025</text>
<line x1="55.46" y1="568.50" x2="55.46" y2="571.00" stroke="#c8c8c8" stroke-width="1" />
<text x="55.0" y="577.6" font-size="7.3" fill="#fff" text-anchor="start" font-weight="normal" textLength="37.5" lengthAdjust="spacingAndGlyphs" >21 Nov 02:30</text>
<line x1="99.02" y1="568.50" x2="99.02" y2="571.00" stroke="#c8c8c8" stroke-width="1" />
<text x="98.5" y="577.6" font-size="7.3" fill="#fff" text-anchor="start" font-weight="normal" textLength="37.5" lengthAdjust="spacingAndGlyphs" >21 Nov 04:30</text>
<line x1="142.58" y1="568.50" x2="142.58" y2="571.00" stroke="#c8c8c8" stroke-width="1" />
<text x="142.1" y="577.6" font-size="7.3" fill="#fff" text-anchor="start" font-weight="normal" textLength="37.5" lengthAdjust="spacingAndGlyphs" >21 Nov 06:30</text>
<line x1="186.14" y1="568.50" x2="186.14" y2="571.00" stroke="#c8c8c8" stroke-width="1" />
<text x="185.6" y="577.6" font-size="7.3" fill="#fff" text-anchor="start" font-weight="normal" textLength="37.5" lengthAdjust="spacingAndGlyphs" >21 Nov 08:30</text>
<line x1="229.70" y1="568.50" x2="229.70" y2="571.00" stroke="#c8c8c8" stroke-width="1" />
<text x="229.2" y="577.6" font-size="7.3" fill="#fff" text-anchor="start" font-weight="normal" textLength="37.5" lengthAdjust="spacingAndGlyphs" >21 Nov 10:30</text>
<line x1="273.26" y1="568.50" x2="273.26" y2="571.00" stroke="#c8c8c8" stroke-width="1" />
<text x="272.8" y="577.6" font-size="7.3" fill="#fff" text-anchor="start" font-weight="normal" textLength="37.5" lengthAdjust="spacingAndGlyphs" >21 Nov 12:30</text>
<line x1="316.82" y1="568.50" x2="316.82" y2="571.00" stroke="#c8c8c8" stroke-width="1" />
<text x="316.3" y="577.6" font-size="7.3" fill="#fff" text-anchor="start" font-weight="normal" textLength="37.5" lengthAdjust="spacingAndGlyphs" >21 Nov 14:30</text>
<line x1="360.38" y1="568.50" x2="360.38" y2="571.00" stroke="#c8c8c8" stroke-width="1" />
<text x="359.9" y="577.6" font-size="7.3" fill="#fff" text-anchor="start" font-weight="normal" textLength="37.5" lengthAdjust="spacingAndGlyphs" >21 Nov 16:30</text>
<line x1="403.94" y1="568.50" x2="403.94" y2="571.00" stroke="#c8c8c8" stroke-width="1" />
<text x="403.4" y="577.6" font-size="7.3" fill="#fff" text-anchor="start" font-weight="normal" textLength="37.5" lengthAdjust="spacingAndGlyphs" >21 Nov 18:30</text>
<line x1="447.50" y1="568.50" x2="447.50" y2="571.00" stroke="#c8c8c8" stroke-width="1" />
<text x="447.0" y="577.6" font-size="7.3" fill="#fff" text-anchor="start" font-weight="normal" textLength="37.5" lengthAdjust="spacingAndGlyphs" >21 Nov 20:30</text>
<line x1="491.06" y1="568.50" x2="491.06" y2="571.00" stroke="#c8c8c8" stroke-width="1" />
<text x="490.6" y="577.6" font-size="7.3" fill="#fff" text-anchor="start" font-weight="normal" textLength="37.5" lengthAdjust="spacingAndGlyphs" >21 Nov 22:30</text>
<line x1="534.62" y1="568.50" x2="534.62" y2="571.00" stroke="#c8c8c8" stroke-width="1" />
<text x="534.1" y="577.6" font-size="7.3" fill="#fff" text-anchor="start" font-weight="normal" textLength="37.5" lengthAdjust="spacingAndGlyphs" >24 Nov 00:30</text>
<line x1="578.18" y1="568.50" x2="578.18" y2="571.00" stroke="#c8c8c8" stroke-width="1" />
<text x="577.7" y="577.6" font-size="7.3" fill="#fff" text-anchor="start" font-weight="normal" textLength="37.5" lengthAdjust="spacingAndGlyphs" >24 Nov 02:30</text>
<line x1="621.74" y1="568.50" x2="621.74" y2="571.00" stroke="#c8c8c8" stroke-width="1" />
<text x="621.2" y="577.6" font-size="7.3" fill="#fff" text-anchor="start" font-weight="normal" textLength="37.5" lengthAdjust="spacingAndGlyphs" >24 Nov 04:30</text>
<line x1="665.30" y1="568.50" x2="665.30" y2="571.00" stroke="#c8c8c8" stroke-width="1" />
<text x="664.8" y="577.6" font-size="7.3" fill="#fff" text-anchor="start" font-weight="normal" textLength="37.5" lengthAdjust="spacingAndGlyphs" >24 Nov 06:30</text>
<line x1="733.80" y1="24.00" x2="733.80" y2="568.00" stroke="#c8c8c8" stroke-width="1" />
<line x1="733.00" y1="24.50" x2="1152.50" y2="24.50" stroke="#c8c8c8" stroke-width="1" />
<line x1="1152.50" y1="24.00" x2="1152.50" y2="568.00" stroke="#c8c8c8" stroke-width="1" />
<line x1="733.00" y1="567.60" x2="1152.50" y2="567.60" stroke="#c8c8c8" stroke-width="1" />
<path d="M736,28.2 h4.8 l-2.4,3 z" fill="#fff"/>
<text x="744.0" y="32.2" font-size="7.3" fill="#fff" text-anchor="start" font-weight="normal" textLength="40.0" lengthAdjust="spacingAndGlyphs" >CADJPY+,H4</text>
<text x="736.5" y="41.0" font-size="7.3" fill="#fff" text-anchor="start" font-weight="normal" textLength="111.0" lengthAdjust="spacingAndGlyphs" >Authentication success : by GogoJungle</text>
<line x1="930.40" y1="24.00" x2="930.40" y2="281.00" stroke="#129a9a" stroke-width="1.3" />
<rect x="928.80" y="24.00" width="3.20" height="2.60" fill="#aef" />
<rect x="928.80" y="278.60" width="3.20" height="2.60" fill="#aef" />
<line x1="930.40" y1="282.00" x2="930.40" y2="566.00" stroke="#129a9a" stroke-width="1.2" />
<line x1="941.00" y1="24.00" x2="941.00" y2="281.00" stroke="#129a9a" stroke-width="1.3" />
<rect x="939.40" y="24.00" width="3.20" height="2.60" fill="#aef" />
<rect x="939.40" y="278.60" width="3.20" height="2.60" fill="#aef" />
<line x1="941.00" y1="282.00" x2="941.00" y2="566.00" stroke="#129a9a" stroke-width="1.2" />
<line x1="952.00" y1="24.00" x2="952.00" y2="281.00" stroke="#129a9a" stroke-width="1.3" />
<rect x="950.40" y="24.00" width="3.20" height="2.60" fill="#aef" />
<rect x="950.40" y="278.60" width="3.20" height="2.60" fill="#aef" />
<line x1="952.00" y1="282.00" x2="952.00" y2="566.00" stroke="#129a9a" stroke-width="1.2" />
<path d="M976,24 h6.4 l-3.2,3.4 z" fill="#fff"/>
<line x1="733.00" y1="142.80" x2="1152.50" y2="142.80" stroke="#b8b8b8" stroke-width="1.2" />
<line x1="734.20" y1="181.20" x2="734.20" y2="207.00" stroke="#1e90ff" stroke-width="1" />
<rect x="732.55" y="195.00" width="3.30" height="1.20" fill="#1e90ff" />
<line x1="739.75" y1="180.00" x2="739.75" y2="201.00" stroke="#1e90ff" stroke-width="1" />
<rect x="738.10" y="183.00" width="3.30" height="13.20" fill="#1e90ff" />
<line x1="745.00" y1="180.00" x2="745.00" y2="206.25" stroke="#ff0000" stroke-width="1" />
<rect x="743.35" y="183.75" width="3.30" height="13.05" fill="#ff0000" />
<line x1="750.40" y1="183.75" x2="750.40" y2="204.75" stroke="#ff0000" stroke-width="1" />
<rect x="748.75" y="196.20" width="3.30" height="4.50" fill="#ff0000" />
<line x1="755.95" y1="195.00" x2="755.95" y2="235.50" stroke="#ff0000" stroke-width="1" />
<rect x="754.30" y="200.25" width="3.30" height="31.05" fill="#ff0000" />
<line x1="761.35" y1="218.25" x2="761.35" y2="240.75" stroke="#ff0000" stroke-width="1" />
<rect x="759.70" y="230.70" width="3.30" height="2.10" fill="#ff0000" />
<line x1="766.75" y1="215.25" x2="766.75" y2="237.75" stroke="#1e90ff" stroke-width="1" />
<rect x="765.10" y="219.30" width="3.30" height="12.90" fill="#1e90ff" />
<line x1="772.30" y1="214.20" x2="772.30" y2="233.25" stroke="#ff0000" stroke-width="1" />
<rect x="770.65" y="219.30" width="3.30" height="3.90" fill="#ff0000" />
<line x1="777.70" y1="215.25" x2="777.70" y2="231.75" stroke="#1e90ff" stroke-width="1" />
<rect x="776.05" y="216.30" width="3.30" height="6.90" fill="#1e90ff" />
<line x1="783.10" y1="214.20" x2="783.10" y2="256.05" stroke="#ff0000" stroke-width="1" />
<rect x="781.45" y="216.30" width="3.30" height="31.95" fill="#ff0000" />
<line x1="788.50" y1="205.50" x2="788.50" y2="251.70" stroke="#1e90ff" stroke-width="1" />
<rect x="786.85" y="213.30" width="3.30" height="34.95" fill="#1e90ff" />
<line x1="794.05" y1="212.25" x2="794.05" y2="228.75" stroke="#ff0000" stroke-width="1" />
<rect x="792.40" y="213.00" width="3.30" height="12.75" fill="#ff0000" />
<line x1="799.45" y1="209.25" x2="799.45" y2="228.75" stroke="#1e90ff" stroke-width="1" />
<rect x="797.80" y="222.00" width="3.30" height="1.00" fill="#1e90ff" />
<line x1="804.85" y1="209.70" x2="804.85" y2="223.50" stroke="#1e90ff" stroke-width="1" />
<rect x="803.20" y="213.00" width="3.30" height="9.75" fill="#1e90ff" />
<line x1="810.25" y1="199.50" x2="810.25" y2="214.20" stroke="#1e90ff" stroke-width="1" />
<rect x="808.60" y="208.50" width="3.30" height="5.25" fill="#1e90ff" />
<line x1="815.80" y1="199.20" x2="815.80" y2="210.75" stroke="#1e90ff" stroke-width="1" />
<rect x="814.15" y="206.25" width="3.30" height="2.25" fill="#1e90ff" />
<line x1="821.20" y1="172.20" x2="821.20" y2="207.30" stroke="#1e90ff" stroke-width="1" />
<rect x="819.55" y="182.25" width="3.30" height="24.75" fill="#1e90ff" />
<line x1="826.60" y1="181.20" x2="826.60" y2="202.50" stroke="#ff0000" stroke-width="1" />
<rect x="824.95" y="182.25" width="3.30" height="14.55" fill="#ff0000" />
<line x1="832.00" y1="187.20" x2="832.00" y2="202.80" stroke="#1e90ff" stroke-width="1" />
<rect x="830.35" y="195.30" width="3.30" height="4.95" fill="#1e90ff" />
<line x1="837.40" y1="189.30" x2="837.40" y2="224.70" stroke="#ff0000" stroke-width="1" />
<rect x="835.75" y="195.30" width="3.30" height="7.50" fill="#ff0000" />
<line x1="842.95" y1="182.25" x2="842.95" y2="217.50" stroke="#1e90ff" stroke-width="1" />
<rect x="841.30" y="183.75" width="3.30" height="19.05" fill="#1e90ff" />
<line x1="848.35" y1="166.80" x2="848.35" y2="186.75" stroke="#1e90ff" stroke-width="1" />
<rect x="846.70" y="170.25" width="3.30" height="14.25" fill="#1e90ff" />
<line x1="853.75" y1="115.00" x2="853.75" y2="183.70" stroke="#1e90ff" stroke-width="1" />
<rect x="852.10" y="115.75" width="3.30" height="55.95" fill="#1e90ff" />
<line x1="859.15" y1="109.30" x2="859.15" y2="136.00" stroke="#ff0000" stroke-width="1" />
<rect x="857.50" y="116.20" width="3.30" height="19.50" fill="#ff0000" />
<line x1="864.70" y1="127.30" x2="864.70" y2="143.80" stroke="#ff0000" stroke-width="1" />
<rect x="863.05" y="138.25" width="3.30" height="4.50" fill="#ff0000" />
<line x1="870.10" y1="136.00" x2="870.10" y2="157.30" stroke="#ff0000" stroke-width="1" />
<rect x="868.45" y="142.00" width="3.30" height="6.00" fill="#ff0000" />
<line x1="875.50" y1="113.80" x2="875.50" y2="148.75" stroke="#1e90ff" stroke-width="1" />
<rect x="873.85" y="114.25" width="3.30" height="33.75" fill="#1e90ff" />
<line x1="880.90" y1="96.00" x2="880.90" y2="117.75" stroke="#1e90ff" stroke-width="1" />
<rect x="879.25" y="105.00" width="3.30" height="10.80" fill="#1e90ff" />
<line x1="886.30" y1="78.00" x2="886.30" y2="113.25" stroke="#1e90ff" stroke-width="1" />
<rect x="884.65" y="103.50" width="3.30" height="2.70" fill="#1e90ff" />
<line x1="891.85" y1="71.25" x2="891.85" y2="105.75" stroke="#1e90ff" stroke-width="1" />
<rect x="890.20" y="74.25" width="3.30" height="30.00" fill="#1e90ff" />
<line x1="897.25" y1="59.25" x2="897.25" y2="90.00" stroke="#1e90ff" stroke-width="1" />
<rect x="895.60" y="59.70" width="3.30" height="17.10" fill="#1e90ff" />
<line x1="902.65" y1="52.20" x2="902.65" y2="70.50" stroke="#1e90ff" stroke-width="1" />
<rect x="901.00" y="54.75" width="3.30" height="6.00" fill="#1e90ff" />
<line x1="908.05" y1="40.80" x2="908.05" y2="82.80" stroke="#ff0000" stroke-width="1" />
<rect x="906.40" y="55.80" width="3.30" height="17.40" fill="#ff0000" />
<line x1="913.45" y1="38.70" x2="913.45" y2="74.70" stroke="#1e90ff" stroke-width="1" />
<rect x="911.80" y="46.80" width="3.30" height="25.95" fill="#1e90ff" />
<line x1="919.00" y1="36.75" x2="919.00" y2="102.30" stroke="#ff0000" stroke-width="1" />
<rect x="917.35" y="46.80" width="3.30" height="40.20" fill="#ff0000" />
<line x1="924.40" y1="70.80" x2="924.40" y2="93.75" stroke="#ff0000" stroke-width="1" />
<rect x="922.75" y="86.25" width="3.30" height="1.50" fill="#ff0000" />
<line x1="929.80" y1="78.75" x2="929.80" y2="100.50" stroke="#1e90ff" stroke-width="1" />
<rect x="928.15" y="80.25" width="3.30" height="8.25" fill="#1e90ff" />
<line x1="935.20" y1="79.50" x2="935.20" y2="106.20" stroke="#ff0000" stroke-width="1" />
<rect x="933.55" y="82.20" width="3.30" height="16.80" fill="#ff0000" />
<line x1="940.60" y1="96.25" x2="940.60" y2="146.50" stroke="#ff0000" stroke-width="1" />
<rect x="938.95" y="98.20" width="3.30" height="30.30" fill="#ff0000" />
<line x1="946.15" y1="115.75" x2="946.15" y2="148.30" stroke="#1e90ff" stroke-width="1" />
<rect x="944.50" y="122.20" width="3.30" height="6.60" fill="#1e90ff" />
<line x1="951.55" y1="121.75" x2="951.55" y2="184.00" stroke="#ff0000" stroke-width="1" />
<rect x="949.90" y="122.20" width="3.30" height="19.80" fill="#ff0000" />
<line x1="956.95" y1="135.70" x2="956.95" y2="162.25" stroke="#ff0000" stroke-width="1" />
<rect x="955.30" y="141.70" width="3.30" height="20.10" fill="#ff0000" />
<line x1="962.35" y1="130.75" x2="962.35" y2="164.80" stroke="#1e90ff" stroke-width="1" />
<rect x="960.70" y="135.25" width="3.30" height="29.25" fill="#1e90ff" />
<line x1="967.90" y1="133.75" x2="967.90" y2="145.75" stroke="#ff0000" stroke-width="1" />
<rect x="966.25" y="135.70" width="3.30" height="7.05" fill="#ff0000" />
<path d="M733.5,261.0 C734.4,260.2 735.8,258.4 739.0,256.1 C742.2,253.7 747.8,249.4 752.5,246.8 C757.2,244.1 763.0,241.8 767.5,240.0 C772.0,238.2 776.1,237.2 779.5,236.2 C782.9,235.3 784.0,235.4 787.8,234.3 C791.5,233.2 797.1,231.4 802.0,229.5 C806.9,227.6 812.0,224.9 817.0,222.8 C822.0,220.6 827.5,218.2 832.0,216.8 C836.5,215.2 839.5,216.2 844.0,213.8 C848.5,211.2 854.5,204.8 859.0,201.8 C863.5,198.8 866.8,198.6 871.0,195.8 C875.2,192.9 880.5,188.1 884.5,184.5 C888.5,180.9 891.8,177.2 895.0,174.0 C898.2,170.8 900.5,169.0 904.0,165.0 C907.5,161.0 912.0,154.2 916.0,150.2 C920.0,146.3 924.8,143.5 928.0,141.2 C931.2,139.0 932.2,138.1 935.5,136.8 C938.8,135.4 945.5,133.9 947.5,133.3" fill="none" stroke="#00ffff" stroke-width="2" stroke-linecap="round" />
<polyline points="779.5,236.2 787.8,234.3" fill="none" stroke="#666" stroke-width="2.4" stroke-linejoin="round" stroke-linecap="round" />
<polyline points="947.5,133.3 961.0,131.9 968.5,131.5" fill="none" stroke="#666" stroke-width="2.2" stroke-linejoin="round" stroke-linecap="round" />
<circle cx="749.8" cy="172.3" r="3.3" fill="none" stroke="#ffa500" stroke-width="1.1"/><circle cx="749.8" cy="172.3" r="1.1" fill="#ffa500"/>
<circle cx="869.5" cy="122.0" r="3.3" fill="none" stroke="#ffa500" stroke-width="1.1"/><circle cx="869.5" cy="122.0" r="1.1" fill="#ffa500"/>
<circle cx="935.2" cy="62.7" r="3.3" fill="none" stroke="#ffa500" stroke-width="1.1"/><circle cx="935.2" cy="62.7" r="1.1" fill="#ffa500"/>
<text x="988.8" y="139.3" font-size="8.4" fill="#8c8c8c" text-anchor="start" font-weight="normal" textLength="13.3" lengthAdjust="spacingAndGlyphs" >12.8</text>
<text x="1006.0" y="139.8" font-size="10.3" fill="#1e90ff" text-anchor="start" font-weight="normal" textLength="33.5" lengthAdjust="spacingAndGlyphs" >73.3pips</text>
<text x="1006.0" y="152.0" font-size="10.3" fill="#e00000" text-anchor="start" font-weight="normal" textLength="33.5" lengthAdjust="spacingAndGlyphs" >47.8pips</text>
<rect x="1107.30" y="92.70" width="41.00" height="16.60" fill="#646464" />
<path d="M1107.3,109.30000000000001 V92.7 H1148.3" fill="none" stroke="#8c8c8c" stroke-width="1"/>
<path d="M1107.3,109.30000000000001 H1148.3 V92.7" fill="none" stroke="#3c3c3c" stroke-width="1"/>
<text x="1127.8" y="104.0" font-size="8.2" fill="#dcdcdc" text-anchor="middle" font-weight="normal" textLength="36.0" lengthAdjust="spacingAndGlyphs" >LINE SIGN</text>
<rect x="1107.30" y="158.00" width="41.00" height="16.80" fill="#646464" />
<path d="M1107.3,174.8 V158.0 H1148.3" fill="none" stroke="#8c8c8c" stroke-width="1"/>
<path d="M1107.3,174.8 H1148.3 V158.0" fill="none" stroke="#3c3c3c" stroke-width="1"/>
<text x="1127.8" y="169.9" font-size="9.6" fill="#dcdcdc" text-anchor="middle" font-weight="normal" textLength="11.8" lengthAdjust="spacingAndGlyphs" >5.0</text>
<rect x="1107.30" y="178.45" width="41.00" height="16.80" fill="#646464" />
<path d="M1107.3,195.25 V178.45 H1148.3" fill="none" stroke="#8c8c8c" stroke-width="1"/>
<path d="M1107.3,195.25 H1148.3 V178.45" fill="none" stroke="#3c3c3c" stroke-width="1"/>
<text x="1127.8" y="190.3" font-size="9.6" fill="#dcdcdc" text-anchor="middle" font-weight="normal" textLength="11.8" lengthAdjust="spacingAndGlyphs" >4.0</text>
<rect x="1107.30" y="198.90" width="41.00" height="16.80" fill="#646464" />
<path d="M1107.3,215.70000000000002 V198.9 H1148.3" fill="none" stroke="#8c8c8c" stroke-width="1"/>
<path d="M1107.3,215.70000000000002 H1148.3 V198.9" fill="none" stroke="#3c3c3c" stroke-width="1"/>
<text x="1127.8" y="210.8" font-size="9.6" fill="#dcdcdc" text-anchor="middle" font-weight="normal" textLength="11.8" lengthAdjust="spacingAndGlyphs" >3.0</text>
<rect x="1107.30" y="219.35" width="41.00" height="16.80" fill="#646464" />
<path d="M1107.3,236.15 V219.35 H1148.3" fill="none" stroke="#8c8c8c" stroke-width="1"/>
<path d="M1107.3,236.15 H1148.3 V219.35" fill="none" stroke="#3c3c3c" stroke-width="1"/>
<text x="1127.8" y="231.2" font-size="9.6" fill="#dcdcdc" text-anchor="middle" font-weight="normal" textLength="11.8" lengthAdjust="spacingAndGlyphs" >2.0</text>
<rect x="1107.30" y="239.80" width="41.00" height="16.80" fill="#646464" />
<path d="M1107.3,256.6 V239.8 H1148.3" fill="none" stroke="#8c8c8c" stroke-width="1"/>
<path d="M1107.3,256.6 H1148.3 V239.8" fill="none" stroke="#3c3c3c" stroke-width="1"/>
<text x="1127.8" y="251.7" font-size="9.6" fill="#dcdcdc" text-anchor="middle" font-weight="normal" textLength="11.8" lengthAdjust="spacingAndGlyphs" >1.0</text>
<rect x="1107.30" y="260.30" width="41.00" height="16.60" fill="#ee7d0c" />
<text x="1127.8" y="271.5" font-size="8" fill="#ffe9c8" text-anchor="middle" font-weight="normal" textLength="37.0" lengthAdjust="spacingAndGlyphs" >デフォルト</text>
<line x1="1152.50" y1="31.50" x2="1155.00" y2="31.50" stroke="#c8c8c8" stroke-width="1" />
<text x="1156.2" y="33.9" font-size="7.3" fill="#fff" text-anchor="start" font-weight="normal" textLength="22.5" lengthAdjust="spacingAndGlyphs" >112.355</text>
<line x1="1152.50" y1="54.00" x2="1155.00" y2="54.00" stroke="#c8c8c8" stroke-width="1" />
<text x="1156.2" y="56.4" font-size="7.3" fill="#fff" text-anchor="start" font-weight="normal" textLength="22.5" lengthAdjust="spacingAndGlyphs" >112.095</text>
<line x1="1152.50" y1="76.50" x2="1155.00" y2="76.50" stroke="#c8c8c8" stroke-width="1" />
<text x="1156.2" y="78.9" font-size="7.3" fill="#fff" text-anchor="start" font-weight="normal" textLength="22.5" lengthAdjust="spacingAndGlyphs" >111.835</text>
<line x1="1152.50" y1="99.00" x2="1155.00" y2="99.00" stroke="#c8c8c8" stroke-width="1" />
<text x="1156.2" y="101.4" font-size="7.3" fill="#fff" text-anchor="start" font-weight="normal" textLength="22.5" lengthAdjust="spacingAndGlyphs" >111.580</text>
<line x1="1152.50" y1="121.50" x2="1155.00" y2="121.50" stroke="#c8c8c8" stroke-width="1" />
<text x="1156.2" y="123.9" font-size="7.3" fill="#fff" text-anchor="start" font-weight="normal" textLength="22.5" lengthAdjust="spacingAndGlyphs" >111.320</text>
<line x1="1152.50" y1="166.50" x2="1155.00" y2="166.50" stroke="#c8c8c8" stroke-width="1" />
<text x="1156.2" y="168.9" font-size="7.3" fill="#fff" text-anchor="start" font-weight="normal" textLength="22.5" lengthAdjust="spacingAndGlyphs" >110.800</text>
<line x1="1152.50" y1="189.00" x2="1155.00" y2="189.00" stroke="#c8c8c8" stroke-width="1" />
<text x="1156.2" y="191.4" font-size="7.3" fill="#fff" text-anchor="start" font-weight="normal" textLength="22.5" lengthAdjust="spacingAndGlyphs" >110.545</text>
<line x1="1152.50" y1="211.50" x2="1155.00" y2="211.50" stroke="#c8c8c8" stroke-width="1" />
<text x="1156.2" y="213.9" font-size="7.3" fill="#fff" text-anchor="start" font-weight="normal" textLength="22.5" lengthAdjust="spacingAndGlyphs" >110.285</text>
<line x1="1152.50" y1="234.00" x2="1155.00" y2="234.00" stroke="#c8c8c8" stroke-width="1" />
<text x="1156.2" y="236.4" font-size="7.3" fill="#fff" text-anchor="start" font-weight="normal" textLength="22.5" lengthAdjust="spacingAndGlyphs" >110.025</text>
<line x1="1152.50" y1="256.50" x2="1155.00" y2="256.50" stroke="#c8c8c8" stroke-width="1" />
<text x="1156.2" y="258.9" font-size="7.3" fill="#fff" text-anchor="start" font-weight="normal" textLength="22.5" lengthAdjust="spacingAndGlyphs" >109.765</text>
<line x1="1152.50" y1="279.00" x2="1155.00" y2="279.00" stroke="#c8c8c8" stroke-width="1" />
<text x="1156.2" y="281.4" font-size="7.3" fill="#fff" text-anchor="start" font-weight="normal" textLength="22.5" lengthAdjust="spacingAndGlyphs" >109.510</text>
<rect x="1153.80" y="139.40" width="27.00" height="6.60" fill="#fff" />
<text x="1156.2" y="145.3" font-size="7.3" fill="#000" text-anchor="start" font-weight="normal" textLength="22.5" lengthAdjust="spacingAndGlyphs" >111.076</text>
<rect x="734.60" y="283.40" width="2.00" height="8.80" fill="#1e90ff" />
<rect x="740.03" y="283.40" width="2.00" height="8.80" fill="#1e90ff" />
<rect x="745.47" y="283.40" width="2.00" height="8.80" fill="#1e90ff" />
<rect x="750.90" y="283.40" width="2.00" height="8.80" fill="#1e90ff" />
<rect x="756.34" y="283.40" width="2.00" height="8.80" fill="#1e90ff" />
<rect x="761.77" y="283.40" width="2.00" height="8.80" fill="#1e90ff" />
<rect x="767.21" y="283.40" width="2.00" height="8.80" fill="#1e90ff" />
<rect x="772.64" y="283.40" width="2.00" height="8.80" fill="#1e90ff" />
<rect x="778.08" y="283.40" width="2.00" height="8.80" fill="#1e90ff" />
<rect x="783.51" y="283.40" width="2.00" height="8.80" fill="#1e90ff" />
<rect x="788.95" y="283.40" width="2.00" height="8.80" fill="#1e90ff" />
<rect x="794.38" y="283.40" width="2.00" height="8.80" fill="#1e90ff" />
<rect x="799.82" y="283.40" width="2.00" height="8.80" fill="#1e90ff" />
<rect x="805.25" y="283.40" width="2.00" height="8.80" fill="#1e90ff" />
<rect x="810.69" y="283.40" width="2.00" height="8.80" fill="#1e90ff" />
<rect x="816.12" y="283.40" width="2.00" height="8.80" fill="#1e90ff" />
<rect x="821.56" y="283.40" width="2.00" height="8.80" fill="#1e90ff" />
<rect x="827.00" y="283.40" width="2.00" height="8.80" fill="#1e90ff" />
<rect x="832.43" y="283.40" width="2.00" height="8.80" fill="#1e90ff" />
<rect x="837.87" y="283.40" width="2.00" height="8.80" fill="#1e90ff" />
<rect x="843.30" y="283.40" width="2.00" height="8.80" fill="#1e90ff" />
<rect x="848.74" y="283.40" width="2.00" height="8.80" fill="#1e90ff" />
<rect x="854.17" y="283.40" width="2.00" height="8.80" fill="#1e90ff" />
<rect x="859.61" y="283.40" width="2.00" height="8.80" fill="#1e90ff" />
<rect x="865.04" y="283.40" width="2.00" height="8.80" fill="#1e90ff" />
<rect x="870.48" y="283.40" width="2.00" height="8.80" fill="#1e90ff" />
<rect x="875.91" y="283.40" width="2.00" height="8.80" fill="#1e90ff" />
<rect x="881.35" y="283.40" width="2.00" height="8.80" fill="#1e90ff" />
<rect x="886.78" y="283.40" width="2.00" height="8.80" fill="#1e90ff" />
<rect x="892.22" y="283.40" width="2.00" height="8.80" fill="#1e90ff" />
<rect x="897.65" y="283.40" width="2.00" height="8.80" fill="#1e90ff" />
<rect x="903.09" y="283.40" width="2.00" height="8.80" fill="#1e90ff" />
<rect x="908.52" y="283.40" width="2.00" height="8.80" fill="#1e90ff" />
<rect x="913.96" y="283.40" width="2.00" height="8.80" fill="#1e90ff" />
<rect x="919.39" y="283.40" width="2.00" height="8.80" fill="#1e90ff" />
<rect x="924.83" y="283.40" width="2.00" height="8.80" fill="#1e90ff" />
<rect x="930.26" y="283.40" width="2.00" height="8.80" fill="#1e90ff" />
<rect x="935.70" y="283.40" width="2.00" height="8.80" fill="#1e90ff" />
<rect x="941.13" y="283.40" width="2.00" height="8.80" fill="#1e90ff" />
<rect x="946.57" y="283.40" width="2.00" height="8.80" fill="#1e90ff" />
<rect x="952.00" y="283.40" width="2.00" height="8.80" fill="#1e90ff" />
<rect x="957.43" y="283.40" width="2.00" height="8.80" fill="#1e90ff" />
<rect x="962.87" y="283.40" width="2.00" height="8.80" fill="#1e90ff" />
<rect x="968.31" y="283.40" width="2.00" height="8.80" fill="#ff0000" />
<text x="737.0" y="291.8" font-size="6.5" fill="#f0f0f0" text-anchor="start" font-weight="normal" >H4</text>
<text x="1156.0" y="290.7" font-size="6.5" fill="#fff" text-anchor="start" font-weight="normal" >0</text>
<rect x="734.60" y="295.20" width="2.00" height="8.00" fill="#1e90ff" />
<rect x="740.03" y="295.20" width="2.00" height="8.00" fill="#1e90ff" />
<rect x="745.47" y="295.20" width="2.00" height="8.00" fill="#1e90ff" />
<rect x="750.90" y="295.20" width="2.00" height="8.00" fill="#1e90ff" />
<rect x="756.34" y="295.20" width="2.00" height="8.00" fill="#1e90ff" />
<rect x="761.77" y="295.20" width="2.00" height="8.00" fill="#1e90ff" />
<rect x="767.21" y="295.20" width="2.00" height="8.00" fill="#1e90ff" />
<rect x="772.64" y="295.20" width="2.00" height="8.00" fill="#1e90ff" />
<rect x="778.08" y="295.20" width="2.00" height="8.00" fill="#1e90ff" />
<rect x="783.51" y="295.20" width="2.00" height="8.00" fill="#1e90ff" />
<rect x="788.95" y="295.20" width="2.00" height="8.00" fill="#1e90ff" />
<rect x="794.38" y="295.20" width="2.00" height="8.00" fill="#1e90ff" />
<rect x="799.82" y="295.20" width="2.00" height="8.00" fill="#1e90ff" />
<rect x="805.25" y="295.20" width="2.00" height="8.00" fill="#1e90ff" />
<rect x="810.69" y="295.20" width="2.00" height="8.00" fill="#1e90ff" />
<rect x="816.12" y="295.20" width="2.00" height="8.00" fill="#1e90ff" />
<rect x="821.56" y="295.20" width="2.00" height="8.00" fill="#1e90ff" />
<rect x="827.00" y="295.20" width="2.00" height="8.00" fill="#1e90ff" />
<rect x="832.43" y="295.20" width="2.00" height="8.00" fill="#1e90ff" />
<rect x="837.87" y="295.20" width="2.00" height="8.00" fill="#1e90ff" />
<rect x="843.30" y="295.20" width="2.00" height="8.00" fill="#1e90ff" />
<rect x="848.74" y="295.20" width="2.00" height="8.00" fill="#1e90ff" />
<rect x="854.17" y="295.20" width="2.00" height="8.00" fill="#1e90ff" />
<rect x="859.61" y="295.20" width="2.00" height="8.00" fill="#1e90ff" />
<rect x="865.04" y="295.20" width="2.00" height="8.00" fill="#1e90ff" />
<rect x="870.48" y="295.20" width="2.00" height="8.00" fill="#1e90ff" />
<rect x="875.91" y="295.20" width="2.00" height="8.00" fill="#1e90ff" />
<rect x="881.35" y="295.20" width="2.00" height="8.00" fill="#1e90ff" />
<rect x="886.78" y="295.20" width="2.00" height="8.00" fill="#1e90ff" />
<rect x="892.22" y="295.20" width="2.00" height="8.00" fill="#1e90ff" />
<rect x="897.65" y="295.20" width="2.00" height="8.00" fill="#1e90ff" />
<rect x="903.09" y="295.20" width="2.00" height="8.00" fill="#1e90ff" />
<rect x="908.52" y="295.20" width="2.00" height="8.00" fill="#1e90ff" />
<rect x="913.96" y="295.20" width="2.00" height="8.00" fill="#1e90ff" />
<rect x="919.39" y="295.20" width="2.00" height="8.00" fill="#1e90ff" />
<rect x="924.83" y="295.20" width="2.00" height="8.00" fill="#1e90ff" />
<rect x="930.26" y="295.20" width="2.00" height="8.00" fill="#1e90ff" />
<rect x="935.70" y="295.20" width="2.00" height="8.00" fill="#1e90ff" />
<rect x="941.13" y="295.20" width="2.00" height="8.00" fill="#1e90ff" />
<rect x="946.57" y="295.20" width="2.00" height="8.00" fill="#1e90ff" />
<rect x="952.00" y="295.20" width="2.00" height="8.00" fill="#1e90ff" />
<rect x="957.43" y="295.20" width="2.00" height="8.00" fill="#1e90ff" />
<rect x="962.87" y="295.20" width="2.00" height="8.00" fill="#1e90ff" />
<rect x="968.31" y="295.20" width="2.00" height="8.00" fill="#1e90ff" />
<text x="737.0" y="302.8" font-size="6.5" fill="#f0f0f0" text-anchor="start" font-weight="normal" >D1</text>
<text x="1156.0" y="301.7" font-size="6.5" fill="#fff" text-anchor="start" font-weight="normal" >0</text>
<line x1="733.00" y1="281.60" x2="1152.50" y2="281.60" stroke="#a8a8a8" stroke-width="1.8" />
<line x1="733.00" y1="293.80" x2="1152.50" y2="293.80" stroke="#a8a8a8" stroke-width="1.8" />
<line x1="733.00" y1="305.40" x2="1152.50" y2="305.40" stroke="#a8a8a8" stroke-width="1.8" />
<line x1="733.00" y1="444.20" x2="1152.50" y2="444.20" stroke="#a8a8a8" stroke-width="1.8" />
<line x1="733.00" y1="552.80" x2="1152.50" y2="552.80" stroke="#a8a8a8" stroke-width="1.8" />
<line x1="734.00" y1="325.60" x2="1152.50" y2="325.60" stroke="#c4c4c4" stroke-width="0.8" stroke-dasharray="2,2"/>
<line x1="734.00" y1="374.50" x2="1152.50" y2="374.50" stroke="#c4c4c4" stroke-width="0.8" stroke-dasharray="2,2"/>
<line x1="734.00" y1="424.50" x2="1152.50" y2="424.50" stroke="#c4c4c4" stroke-width="0.8" stroke-dasharray="2,2"/>
<text x="1154.6" y="312.1" font-size="7.1" fill="#fff" text-anchor="start" font-weight="normal" >110</text>
<text x="1154.6" y="328.2" font-size="7.1" fill="#fff" text-anchor="start" font-weight="normal" >80</text>
<text x="1154.6" y="377.1" font-size="7.1" fill="#fff" text-anchor="start" font-weight="normal" >0.00</text>
<text x="1154.6" y="427.1" font-size="7.1" fill="#fff" text-anchor="start" font-weight="normal" >-80</text>
<text x="1154.6" y="441.4" font-size="7.1" fill="#fff" text-anchor="start" font-weight="normal" >-110</text>
<text x="736.5" y="314.8" font-size="7.3" fill="#fff" text-anchor="start" font-weight="normal" textLength="109.0" lengthAdjust="spacingAndGlyphs" >TEN_to_CHI_no_OSCILLATOR_ver_</text>
<text x="897.0" y="314.8" font-size="7.3" fill="#fff" text-anchor="start" font-weight="normal" textLength="71.0" lengthAdjust="spacingAndGlyphs" >92.0591 93.4513 89.9697</text>
<rect x="733.1" y="331.7" width="2.7" height="2.7" fill="none" stroke="#006000" stroke-width="0.9"/>
<rect x="733.1" y="366.3" width="2.7" height="2.7" fill="none" stroke="#00c000" stroke-width="0.9"/>
<rect x="738.5" y="331.5" width="2.7" height="2.7" fill="none" stroke="#006000" stroke-width="0.9"/>
<rect x="738.5" y="363.6" width="2.7" height="2.7" fill="none" stroke="#00c000" stroke-width="0.9"/>
<rect x="744.0" y="331.3" width="2.7" height="2.7" fill="none" stroke="#006000" stroke-width="0.9"/>
<rect x="744.0" y="361.0" width="2.7" height="2.7" fill="none" stroke="#00c000" stroke-width="0.9"/>
<rect x="749.4" y="331.0" width="2.7" height="2.7" fill="none" stroke="#006000" stroke-width="0.9"/>
<rect x="749.4" y="358.5" width="2.7" height="2.7" fill="none" stroke="#00c000" stroke-width="0.9"/>
<rect x="754.8" y="330.8" width="2.7" height="2.7" fill="none" stroke="#006000" stroke-width="0.9"/>
<rect x="754.8" y="356.5" width="2.7" height="2.7" fill="none" stroke="#00c000" stroke-width="0.9"/>
<rect x="760.3" y="330.6" width="2.7" height="2.7" fill="none" stroke="#006000" stroke-width="0.9"/>
<rect x="760.3" y="354.5" width="2.7" height="2.7" fill="none" stroke="#00c000" stroke-width="0.9"/>
<rect x="765.7" y="330.4" width="2.7" height="2.7" fill="none" stroke="#006000" stroke-width="0.9"/>
<rect x="765.7" y="352.5" width="2.7" height="2.7" fill="none" stroke="#00c000" stroke-width="0.9"/>
<rect x="771.1" y="330.2" width="2.7" height="2.7" fill="none" stroke="#006000" stroke-width="0.9"/>
<rect x="771.1" y="350.6" width="2.7" height="2.7" fill="none" stroke="#00c000" stroke-width="0.9"/>
<rect x="776.6" y="330.0" width="2.7" height="2.7" fill="none" stroke="#006000" stroke-width="0.9"/>
<rect x="776.6" y="348.6" width="2.7" height="2.7" fill="none" stroke="#00c000" stroke-width="0.9"/>
<rect x="782.0" y="329.8" width="2.7" height="2.7" fill="none" stroke="#006000" stroke-width="0.9"/>
<rect x="782.0" y="346.7" width="2.7" height="2.7" fill="none" stroke="#00c000" stroke-width="0.9"/>
<rect x="787.5" y="329.6" width="2.7" height="2.7" fill="none" stroke="#006000" stroke-width="0.9"/>
<rect x="787.5" y="345.3" width="2.7" height="2.7" fill="none" stroke="#00c000" stroke-width="0.9"/>
<rect x="792.9" y="329.4" width="2.7" height="2.7" fill="none" stroke="#006000" stroke-width="0.9"/>
<rect x="792.9" y="343.8" width="2.7" height="2.7" fill="none" stroke="#00c000" stroke-width="0.9"/>
<rect x="798.3" y="329.1" width="2.7" height="2.7" fill="none" stroke="#006000" stroke-width="0.9"/>
<rect x="798.3" y="342.3" width="2.7" height="2.7" fill="none" stroke="#00c000" stroke-width="0.9"/>
<rect x="803.8" y="328.9" width="2.7" height="2.7" fill="none" stroke="#006000" stroke-width="0.9"/>
<rect x="803.8" y="340.9" width="2.7" height="2.7" fill="none" stroke="#00c000" stroke-width="0.9"/>
<rect x="809.2" y="328.7" width="2.7" height="2.7" fill="none" stroke="#006000" stroke-width="0.9"/>
<rect x="809.2" y="339.8" width="2.7" height="2.7" fill="none" stroke="#00c000" stroke-width="0.9"/>
<rect x="814.6" y="328.5" width="2.7" height="2.7" fill="none" stroke="#006000" stroke-width="0.9"/>
<rect x="814.6" y="338.8" width="2.7" height="2.7" fill="none" stroke="#00c000" stroke-width="0.9"/>
<rect x="820.1" y="328.3" width="2.7" height="2.7" fill="none" stroke="#006000" stroke-width="0.9"/>
<rect x="820.1" y="337.7" width="2.7" height="2.7" fill="none" stroke="#00c000" stroke-width="0.9"/>
<rect x="825.5" y="328.1" width="2.7" height="2.7" fill="none" stroke="#006000" stroke-width="0.9"/>
<rect x="825.5" y="336.6" width="2.7" height="2.7" fill="none" stroke="#00c000" stroke-width="0.9"/>
<rect x="830.9" y="327.9" width="2.7" height="2.7" fill="none" stroke="#006000" stroke-width="0.9"/>
<rect x="830.9" y="335.5" width="2.7" height="2.7" fill="none" stroke="#00c000" stroke-width="0.9"/>
<rect x="836.4" y="327.7" width="2.7" height="2.7" fill="none" stroke="#006000" stroke-width="0.9"/>
<rect x="836.4" y="334.4" width="2.7" height="2.7" fill="none" stroke="#00c000" stroke-width="0.9"/>
<rect x="841.8" y="327.4" width="2.7" height="2.7" fill="none" stroke="#006000" stroke-width="0.9"/>
<rect x="841.8" y="333.3" width="2.7" height="2.7" fill="none" stroke="#00c000" stroke-width="0.9"/>
<rect x="847.3" y="327.2" width="2.7" height="2.7" fill="none" stroke="#006000" stroke-width="0.9"/>
<rect x="847.3" y="332.2" width="2.7" height="2.7" fill="none" stroke="#00c000" stroke-width="0.9"/>
<rect x="852.7" y="327.0" width="2.7" height="2.7" fill="none" stroke="#006000" stroke-width="0.9"/>
<rect x="852.7" y="331.5" width="2.7" height="2.7" fill="none" stroke="#00c000" stroke-width="0.9"/>
<rect x="858.1" y="326.7" width="2.7" height="2.7" fill="none" stroke="#00c000" stroke-width="0.9"/>
<rect x="858.1" y="330.7" width="2.7" height="2.7" fill="none" stroke="#00c000" stroke-width="0.9"/>
<rect x="863.6" y="326.4" width="2.7" height="2.7" fill="none" stroke="#00c000" stroke-width="0.9"/>
<rect x="863.6" y="329.9" width="2.7" height="2.7" fill="none" stroke="#00c000" stroke-width="0.9"/>
<rect x="869.0" y="326.1" width="2.7" height="2.7" fill="none" stroke="#00c000" stroke-width="0.9"/>
<rect x="869.0" y="329.1" width="2.7" height="2.7" fill="none" stroke="#00c000" stroke-width="0.9"/>
<rect x="874.4" y="325.9" width="2.7" height="2.7" fill="none" stroke="#00c000" stroke-width="0.9"/>
<rect x="874.4" y="328.2" width="2.7" height="2.7" fill="none" stroke="#00c000" stroke-width="0.9"/>
<rect x="879.9" y="325.6" width="2.7" height="2.7" fill="none" stroke="#00c000" stroke-width="0.9"/>
<rect x="879.9" y="327.3" width="2.7" height="2.7" fill="none" stroke="#00c000" stroke-width="0.9"/>
<rect x="885.3" y="325.3" width="2.7" height="2.7" fill="none" stroke="#00c000" stroke-width="0.9"/>
<rect x="885.3" y="326.4" width="2.7" height="2.7" fill="none" stroke="#00c000" stroke-width="0.9"/>
<rect x="890.7" y="325.1" width="2.7" height="2.7" fill="none" stroke="#00c000" stroke-width="0.9"/>
<rect x="896.2" y="324.6" width="2.7" height="2.7" fill="none" stroke="#00c000" stroke-width="0.9"/>
<rect x="901.6" y="323.9" width="2.7" height="2.7" fill="none" stroke="#00c000" stroke-width="0.9"/>
<rect x="907.0" y="323.2" width="2.7" height="2.7" fill="none" stroke="#00c000" stroke-width="0.9"/>
<rect x="912.5" y="322.5" width="2.7" height="2.7" fill="none" stroke="#00c000" stroke-width="0.9"/>
<rect x="917.9" y="321.8" width="2.7" height="2.7" fill="none" stroke="#00c000" stroke-width="0.9"/>
<rect x="923.4" y="321.2" width="2.7" height="2.7" fill="none" stroke="#00c000" stroke-width="0.9"/>
<rect x="928.8" y="320.5" width="2.7" height="2.7" fill="none" stroke="#00c000" stroke-width="0.9"/>
<rect x="934.2" y="319.8" width="2.7" height="2.7" fill="none" stroke="#00c000" stroke-width="0.9"/>
<rect x="939.7" y="319.1" width="2.7" height="2.7" fill="none" stroke="#00c000" stroke-width="0.9"/>
<rect x="945.1" y="318.5" width="2.7" height="2.7" fill="none" stroke="#00c000" stroke-width="0.9"/>
<rect x="950.5" y="317.9" width="2.7" height="2.7" fill="none" stroke="#00c000" stroke-width="0.9"/>
<rect x="956.0" y="317.2" width="2.7" height="2.7" fill="none" stroke="#00c000" stroke-width="0.9"/>
<rect x="961.4" y="316.6" width="2.7" height="2.7" fill="none" stroke="#00c000" stroke-width="0.9"/>
<rect x="966.8" y="316.0" width="2.7" height="2.7" fill="none" stroke="#00c000" stroke-width="0.9"/>
<rect x="732.84" y="314.27" width="3.20" height="3.20" fill="#0000ff" />
<rect x="737.28" y="313.38" width="3.20" height="3.20" fill="#0000ff" />
<rect x="742.60" y="312.79" width="3.20" height="3.20" fill="#ff0000" />
<rect x="747.93" y="315.16" width="3.20" height="3.20" fill="#ff0000" />
<rect x="753.26" y="324.63" width="3.20" height="3.20" fill="#ff0000" />
<rect x="758.58" y="340.31" width="3.20" height="3.20" fill="#ff0000" />
<rect x="764.21" y="356.59" width="3.20" height="3.20" fill="#ff0000" />
<rect x="769.53" y="370.50" width="3.20" height="3.20" fill="#ff0000" />
<rect x="775.16" y="381.15" width="3.20" height="3.20" fill="#ff0000" />
<rect x="780.48" y="390.62" width="3.20" height="3.20" fill="#ff0000" />
<rect x="785.81" y="398.61" width="3.20" height="3.20" fill="#ff0000" />
<rect x="791.43" y="403.64" width="3.20" height="3.20" fill="#ff0000" />
<rect x="796.76" y="405.12" width="3.20" height="3.20" fill="#ff0000" />
<rect x="802.38" y="404.53" width="3.20" height="3.20" fill="#0000ff" />
<rect x="808.01" y="398.61" width="3.20" height="3.20" fill="#0000ff" />
<rect x="813.63" y="388.55" width="3.20" height="3.20" fill="#0000ff" />
<rect x="818.95" y="373.16" width="3.20" height="3.20" fill="#0000ff" />
<rect x="824.58" y="358.66" width="3.20" height="3.20" fill="#0000ff" />
<rect x="829.90" y="346.53" width="3.20" height="3.20" fill="#0000ff" />
<rect x="835.23" y="338.54" width="3.20" height="3.20" fill="#ff0000" />
<rect x="840.56" y="341.49" width="3.20" height="3.20" fill="#ff0000" />
<rect x="846.18" y="341.49" width="3.20" height="3.20" fill="#0000ff" />
<rect x="851.51" y="331.43" width="3.20" height="3.20" fill="#0000ff" />
<rect x="856.83" y="323.74" width="3.20" height="3.20" fill="#0000ff" />
<rect x="916.61" y="312.20" width="3.20" height="3.20" fill="#ff0000" />
<rect x="922.23" y="332.03" width="3.20" height="3.20" fill="#ff0000" />
<rect x="927.56" y="360.73" width="3.20" height="3.20" fill="#ff0000" />
<rect x="932.89" y="385.88" width="3.20" height="3.20" fill="#ff0000" />
<rect x="938.51" y="403.64" width="3.20" height="3.20" fill="#ff0000" />
<rect x="943.84" y="415.18" width="3.20" height="3.20" fill="#ff0000" />
<rect x="949.16" y="421.40" width="3.20" height="3.20" fill="#ff0000" />
<rect x="954.79" y="425.24" width="3.20" height="3.20" fill="#ff0000" />
<rect x="960.11" y="428.20" width="3.20" height="3.20" fill="#ff0000" />
<rect x="965.44" y="430.27" width="3.20" height="3.20" fill="#ff0000" />
<circle cx="804.9" cy="374.5" r="4.1" fill="#f4f4f4"/>
<path d="M804.9,378.7 V373.5" stroke="#000" stroke-width="2" fill="none"/>
<circle cx="848.4" cy="374.5" r="4.1" fill="#f4f4f4"/>
<path d="M848.4,378.7 V373.5" stroke="#000" stroke-width="2" fill="none"/>
<circle cx="858.4" cy="325.3" r="4.4" fill="#000" stroke="#fff" stroke-width="0.9"/>
<text x="858.4" y="328.1" font-size="8" fill="#fff" text-anchor="middle" font-weight="normal" >1</text>
<circle cx="901.9" cy="325.3" r="4.4" fill="#000" stroke="#fff" stroke-width="0.9"/>
<text x="901.9" y="328.1" font-size="8" fill="#fff" text-anchor="middle" font-weight="normal" >2</text>
<circle cx="912.9" cy="325.3" r="4.4" fill="#000" stroke="#fff" stroke-width="0.9"/>
<text x="912.9" y="328.1" font-size="8" fill="#fff" text-anchor="middle" font-weight="normal" >4</text>
<circle cx="956.4" cy="325.3" r="4.4" fill="#000" stroke="#fff" stroke-width="0.9"/>
<text x="956.4" y="328.1" font-size="8" fill="#fff" text-anchor="middle" font-weight="normal" >5</text>
<circle cx="956.4" cy="424.2" r="4.4" fill="#000" stroke="#fff" stroke-width="0.9"/>
<text x="956.4" y="427.0" font-size="8" fill="#fff" text-anchor="middle" font-weight="normal" >1</text>
<rect x="737.40" y="423.00" width="26.60" height="16.60" fill="#7a7a7a" />
<text x="750.7" y="434.7" font-size="9.4" fill="#dcdcdc" text-anchor="middle" font-weight="normal" textLength="15.6" lengthAdjust="spacingAndGlyphs" >LV1</text>
<rect x="768.50" y="423.00" width="26.50" height="16.60" fill="#ee7d0c" />
<text x="781.8" y="434.7" font-size="9.4" fill="#ffe4c0" text-anchor="middle" font-weight="normal" textLength="15.6" lengthAdjust="spacingAndGlyphs" >LV2</text>
<text x="736.4" y="454.2" font-size="7.3" fill="#fff" text-anchor="start" font-weight="normal" textLength="113.6" lengthAdjust="spacingAndGlyphs" >H4 TEN_to_CHI_no_OSCILLATOR_DX</text>
<line x1="734.00" y1="469.40" x2="995.20" y2="469.40" stroke="#9400d3" stroke-width="1.8" />
<line x1="734.00" y1="475.30" x2="995.20" y2="475.30" stroke="#9400d3" stroke-width="1" stroke-dasharray="2,2"/>
<line x1="734.00" y1="533.20" x2="995.20" y2="533.20" stroke="#c4c4c4" stroke-width="0.8" stroke-dasharray="2,2"/>
<path d="M733.8,461.8 C735.7,464.1 741.3,472.2 745.3,475.8 C749.3,479.4 753.4,483.0 758.1,483.5 C762.7,483.9 767.8,480.3 773.4,478.4 C778.9,476.4 784.8,473.0 791.2,472.0 C797.6,470.9 805.7,471.1 811.6,472.0 C817.6,472.8 821.8,474.3 826.9,477.1 C832.0,479.8 837.1,485.4 842.2,488.6 C847.3,491.7 852.4,495.3 857.5,496.2 C862.6,497.1 867.7,496.5 872.8,494.2 C877.9,491.8 883.0,486.5 888.1,482.2 C893.2,477.8 898.8,472.0 903.4,468.2 C908.1,464.3 911.5,461.4 916.2,459.2 C920.9,457.1 926.0,455.6 931.5,455.4 C937.0,455.2 942.9,459.0 949.3,458.0 C955.8,456.9 966.6,450.5 970.0,449.0" fill="none" stroke="#d2d200" stroke-width="1.0"  stroke-dasharray="1.4,2.2" stroke-linecap="butt"/>
<path d="M733.8,501.8 C736.6,500.7 744.7,495.9 750.4,494.9 C756.1,494.0 762.3,495.1 768.3,496.2 C774.2,497.3 779.7,499.4 786.1,501.3 C792.5,503.2 798.9,505.6 806.5,507.7 C814.2,509.8 824.8,512.4 832.0,514.1 C839.2,515.8 844.3,517.0 849.9,517.9 C855.4,518.7 859.6,519.4 865.2,519.2 C870.7,519.0 876.7,518.5 883.0,516.6 C889.4,514.7 897.1,510.9 903.4,507.7 C909.8,504.5 915.3,500.0 921.3,497.5 C927.2,494.9 933.6,493.2 939.1,492.4 C944.7,491.5 949.3,491.5 954.4,492.4 C959.6,493.2 967.4,496.6 970.0,497.5" fill="none" stroke="#d2d200" stroke-width="1.0"  stroke-dasharray="1.4,2.2" stroke-linecap="butt"/>
<path d="M733.8,543.4 C735.3,540.2 739.6,530.0 742.8,524.3 C745.9,518.5 750.0,512.4 753.0,509.0 C755.9,505.6 757.6,503.4 760.6,503.9 C763.6,504.3 767.4,508.1 770.8,511.5 C774.2,514.9 777.2,520.2 781.0,524.3 C784.8,528.3 788.7,532.3 793.8,535.7 C798.9,539.1 805.2,542.8 811.6,544.7 C818.0,546.6 825.6,547.6 832.0,547.2 C838.4,546.8 843.9,543.6 849.9,542.1 C855.8,540.6 861.3,537.9 867.7,538.3 C874.1,538.7 881.3,543.4 888.1,544.7 C894.9,545.9 902.6,547.0 908.5,545.9 C914.5,544.9 918.7,541.3 923.8,538.3 C928.9,535.3 934.5,530.0 939.1,528.1 C943.8,526.2 947.9,526.0 951.9,526.8 C955.9,527.7 961.5,532.1 963.4,533.2" fill="none" stroke="#d2d200" stroke-width="1.0"  stroke-dasharray="1.4,2.2" stroke-linecap="butt"/>
<path d="M733.8,488.0 C736.2,488.9 743.4,490.1 747.9,493.2 C752.3,496.2 756.4,502.1 760.6,506.4 C764.9,510.7 769.5,515.6 773.4,519.2 C777.2,522.8 780.2,526.1 783.6,528.1 C787.0,530.1 789.9,531.2 793.8,531.4 C797.6,531.6 802.3,530.8 806.5,529.4 C810.8,528.0 815.2,524.8 819.3,523.0 C823.3,521.2 826.9,518.9 830.7,518.7 C834.6,518.4 838.6,522.9 842.2,521.7 C845.8,520.5 849.0,515.3 852.4,511.5 C855.8,507.7 858.8,501.5 862.6,498.8 C866.5,496.0 871.6,497.3 875.4,494.9 C879.2,492.6 881.8,487.9 885.6,484.7 C889.4,481.5 894.5,478.1 898.3,475.8 C902.2,473.5 905.1,471.3 908.5,470.7 C911.9,470.1 914.9,469.6 918.7,472.0 C922.6,474.3 927.2,479.2 931.5,484.7 C935.7,490.3 940.4,498.5 944.2,505.1 C948.1,511.7 951.3,519.2 954.4,524.3 C957.6,529.4 960.8,533.2 963.4,535.7 C966.0,538.3 968.9,538.9 970.0,539.6" fill="none" stroke="#1e90ff" stroke-width="1.9" stroke-linecap="round" />
<path d="M733.8,492.4 C737.4,492.4 749.3,491.5 755.5,492.4 C761.7,493.2 765.7,495.1 770.8,497.5 C775.9,499.8 781.0,503.2 786.1,506.4 C791.2,509.6 796.3,513.9 801.4,516.6 C806.5,519.4 811.6,521.6 816.7,523.0 C821.8,524.4 826.5,524.8 832.0,524.8 C837.5,524.8 843.9,524.6 849.9,523.0 C855.8,521.4 861.3,518.5 867.7,515.3 C874.1,512.2 881.3,508.1 888.1,503.9 C894.9,499.6 902.6,493.7 908.5,489.8 C914.5,486.0 919.6,482.6 923.8,480.9 C928.1,479.2 930.6,479.4 934.0,479.6 C937.4,479.8 940.4,480.1 944.2,482.2 C948.1,484.3 952.7,488.1 957.0,492.4 C961.3,496.6 967.8,505.1 970.0,507.7" fill="none" stroke="#ff0000" stroke-width="2.1" stroke-linecap="round" />
<rect x="737.10" y="533.20" width="27.30" height="16.20" fill="#ee7d0c" />
<text x="750.8" y="544.7" font-size="9.4" fill="#ffe4c0" text-anchor="middle" font-weight="normal" textLength="15.6" lengthAdjust="spacingAndGlyphs" >TF1</text>
<rect x="768.30" y="533.20" width="26.70" height="16.20" fill="#7a7a7a" />
<text x="781.6" y="544.7" font-size="9.4" fill="#dcdcdc" text-anchor="middle" font-weight="normal" textLength="15.6" lengthAdjust="spacingAndGlyphs" >TF2</text>
<text x="1061.8" y="481.4" font-size="9.3" fill="#e4e4e4" text-anchor="middle" font-weight="normal" textLength="16.0" lengthAdjust="spacingAndGlyphs" >Lime</text>
<text x="1093.2" y="481.4" font-size="9.3" fill="#e4e4e4" text-anchor="middle" font-weight="normal" textLength="30.5" lengthAdjust="spacingAndGlyphs" >Distance</text>
<text x="1130.2" y="481.4" font-size="9.3" fill="#e4e4e4" text-anchor="middle" font-weight="normal" textLength="28.4" lengthAdjust="spacingAndGlyphs" >Magenta</text>
<text x="1008.5" y="495.0" font-size="9.3" fill="#e4e4e4" text-anchor="start" font-weight="normal" textLength="33.5" lengthAdjust="spacingAndGlyphs" >TF1 (H4)</text>
<path d="M1062,487.8 V495.6 M1060.3,493.2 L1062,495.8 L1063.7,493.2" stroke="#f01010" stroke-width="1.1" fill="none"/>
<path d="M1096,487.8 V495.6 M1094.3,493.2 L1096,495.8 L1097.7,493.2" stroke="#f01010" stroke-width="1.1" fill="none"/>
<path d="M1130,487.8 V495.6 M1128.3,493.2 L1130,495.8 L1131.7,493.2" stroke="#f01010" stroke-width="1.1" fill="none"/>
<text x="1008.5" y="508.3" font-size="9.3" fill="#e4e4e4" text-anchor="start" font-weight="normal" textLength="33.5" lengthAdjust="spacingAndGlyphs" >TF2 (D1)</text>
<path d="M1062,501.1 V508.90000000000003 M1060.3,506.5 L1062,509.1 L1063.7,506.5" stroke="#f01010" stroke-width="1.1" fill="none"/>
<path d="M1096,501.1 V508.90000000000003 M1094.3,506.5 L1096,509.1 L1097.7,506.5" stroke="#f01010" stroke-width="1.1" fill="none"/>
<path d="M1130,509.1 V501.3 M1128.3,503.70000000000005 L1130,501.1 L1131.7,503.70000000000005" stroke="#2a96ff" stroke-width="1.1" fill="none"/>
<text x="1008.5" y="521.8" font-size="9.3" fill="#e4e4e4" text-anchor="start" font-weight="normal" textLength="33.5" lengthAdjust="spacingAndGlyphs" >TF3 (W1)</text>
<path d="M1062,522.6 V514.8000000000001 M1060.3,517.2 L1062,514.6 L1063.7,517.2" stroke="#2a96ff" stroke-width="1.1" fill="none"/>
<path d="M1096,522.6 V514.8000000000001 M1094.3,517.2 L1096,514.6 L1097.7,517.2" stroke="#2a96ff" stroke-width="1.1" fill="none"/>
<path d="M1130,522.6 V514.8000000000001 M1128.3,517.2 L1130,514.6 L1131.7,517.2" stroke="#2a96ff" stroke-width="1.1" fill="none"/>
<text x="1155.0" y="452.5" font-size="7.1" fill="#fff" text-anchor="start" font-weight="normal" >1.052</text>
<rect x="1153.80" y="466.00" width="20.00" height="12.40" fill="#b400e6" />
<text x="1156.0" y="471.8" font-size="6.3" fill="#5c0c86" text-anchor="start" font-weight="normal" textLength="16.0" lengthAdjust="spacingAndGlyphs" >0.752</text>
<text x="1156.0" y="477.4" font-size="6.3" fill="#5c0c86" text-anchor="start" font-weight="normal" textLength="16.0" lengthAdjust="spacingAndGlyphs" >0.694</text>
<path d="M1151,468.5 l2.8,1.5 l-2.8,1.5 z" fill="#b400e6"/>
<text x="1154.6" y="536.4" font-size="7.1" fill="#fff" text-anchor="start" font-weight="normal" >0.00</text>
<text x="1154.6" y="551.2" font-size="7.1" fill="#fff" text-anchor="start" font-weight="normal" >-0.235</text>
<text x="1156.0" y="564.5" font-size="6.5" fill="#fff" text-anchor="start" font-weight="normal" >1.00</text>
<rect x="733.20" y="559.20" width="3.80" height="4.00" fill="#ffff00" />
<rect x="738.63" y="559.20" width="3.80" height="4.00" fill="#ffff00" />
<rect x="744.07" y="559.20" width="3.80" height="4.00" fill="#ffff00" />
<rect x="749.50" y="559.20" width="3.80" height="4.00" fill="#0000ff" />
<rect x="754.94" y="559.20" width="3.80" height="4.00" fill="#0000ff" />
<rect x="760.38" y="559.20" width="3.80" height="4.00" fill="#0000ff" />
<rect x="765.81" y="559.20" width="3.80" height="4.00" fill="#0000ff" />
<rect x="771.25" y="559.20" width="3.80" height="4.00" fill="#0000ff" />
<rect x="776.68" y="559.20" width="3.80" height="4.00" fill="#0000ff" />
<rect x="782.12" y="559.20" width="3.80" height="4.00" fill="#0000ff" />
<rect x="787.55" y="559.20" width="3.80" height="4.00" fill="#0000ff" />
<rect x="792.99" y="559.20" width="3.80" height="4.00" fill="#0000ff" />
<rect x="798.42" y="559.20" width="3.80" height="4.00" fill="#0000ff" />
<rect x="803.86" y="559.20" width="3.80" height="4.00" fill="#0000ff" />
<rect x="809.29" y="559.20" width="3.80" height="4.00" fill="#0000ff" />
<rect x="814.73" y="559.20" width="3.80" height="4.00" fill="#0000ff" />
<rect x="820.16" y="559.20" width="3.80" height="4.00" fill="#0000ff" />
<rect x="825.60" y="559.20" width="3.80" height="4.00" fill="#0000ff" />
<rect x="831.03" y="559.20" width="3.80" height="4.00" fill="#0000ff" />
<rect x="896.25" y="559.20" width="3.80" height="4.00" fill="#0000ff" />
<rect x="901.69" y="559.20" width="3.80" height="4.00" fill="#0000ff" />
<rect x="907.12" y="559.20" width="3.80" height="4.00" fill="#0000ff" />
<rect x="912.56" y="559.20" width="3.80" height="4.00" fill="#0000ff" />
<rect x="917.99" y="559.20" width="3.80" height="4.00" fill="#0000ff" />
<rect x="923.43" y="559.20" width="3.80" height="4.00" fill="#0000ff" />
<rect x="928.86" y="559.20" width="3.80" height="4.00" fill="#0000ff" />
<rect x="934.30" y="559.20" width="3.80" height="4.00" fill="#0000ff" />
<rect x="939.73" y="559.20" width="3.80" height="4.00" fill="#0000ff" />
<rect x="945.16" y="559.20" width="3.80" height="4.00" fill="#0000ff" />
<rect x="950.60" y="559.20" width="3.80" height="4.00" fill="#0000ff" />
<rect x="956.04" y="559.20" width="3.80" height="4.00" fill="#0000ff" />
<rect x="961.47" y="559.20" width="3.80" height="4.00" fill="#0000ff" />
<rect x="966.90" y="559.20" width="3.80" height="4.00" fill="#0000ff" />
<rect x="748.00" y="558.60" width="150.00" height="5.40" fill="#0000d0" opacity="0.0"/>
<text x="736.5" y="564.2" font-size="7" fill="#fff" text-anchor="start" font-weight="normal" textLength="97.0" lengthAdjust="spacingAndGlyphs" >TEN_to_CHI_no_HISTOGRAM_D</text>
<text x="881.0" y="564.2" font-size="6.5" fill="#fff" text-anchor="start" font-weight="normal" >.0000</text>
<text x="734.6" y="577.0" font-size="7.3" fill="#fff" text-anchor="start" font-weight="normal" textLength="36.5" lengthAdjust="spacingAndGlyphs" >13 Nov 2025</text>
<line x1="777.20" y1="567.60" x2="777.20" y2="570.00" stroke="#c8c8c8" stroke-width="1" />
<text x="778.0" y="577.0" font-size="7.3" fill="#fff" text-anchor="start" font-weight="normal" textLength="37.5" lengthAdjust="spacingAndGlyphs" >14 Nov 08:00</text>
<line x1="820.60" y1="567.60" x2="820.60" y2="570.00" stroke="#c8c8c8" stroke-width="1" />
<text x="821.4" y="577.0" font-size="7.3" fill="#fff" text-anchor="start" font-weight="normal" textLength="37.5" lengthAdjust="spacingAndGlyphs" >17 Nov 16:00</text>
<line x1="864.40" y1="567.60" x2="864.40" y2="570.00" stroke="#c8c8c8" stroke-width="1" />
<text x="865.2" y="577.0" font-size="7.3" fill="#fff" text-anchor="start" font-weight="normal" textLength="37.5" lengthAdjust="spacingAndGlyphs" >19 Nov 00:00</text>
<line x1="908.00" y1="567.60" x2="908.00" y2="570.00" stroke="#c8c8c8" stroke-width="1" />
<text x="908.8" y="577.0" font-size="7.3" fill="#fff" text-anchor="start" font-weight="normal" textLength="37.5" lengthAdjust="spacingAndGlyphs" >20 Nov 08:00</text>
<line x1="951.90" y1="567.60" x2="951.90" y2="570.00" stroke="#c8c8c8" stroke-width="1" />
<text x="952.7" y="577.0" font-size="7.3" fill="#fff" text-anchor="start" font-weight="normal" textLength="37.5" lengthAdjust="spacingAndGlyphs" >21 Nov 16:00</text>
<line x1="84.00" y1="591.50" x2="1190.00" y2="591.50" stroke="#c9c9c9" stroke-width="1" />
<line x1="2.00" y1="591.00" x2="2.00" y2="603.00" stroke="#8a8a8a" stroke-width="1" />
<clipPath id="tabclip"><rect x="0" y="588" width="200" height="15.4"/></clipPath>
<path d="M5.5,590.5 V603.2 H83.8 V591.5" fill="#fff" stroke="#1a1a1a" stroke-width="1.1"/>
<g clip-path="url(#tabclip)">
<text x="13.5" y="603.0" font-size="11.4" fill="#222" text-anchor="start" font-weight="normal" textLength="62.5" lengthAdjust="spacingAndGlyphs" >CADJPY+,M15</text>
<text x="91.5" y="603.0" font-size="11.4" fill="#8a8a8a" text-anchor="start" font-weight="normal" textLength="56.5" lengthAdjust="spacingAndGlyphs" >CADJPY+,H4</text>
</g>
<line x1="5.50" y1="603.20" x2="83.80" y2="603.20" stroke="#1a1a1a" stroke-width="1.1" />
<line x1="155.30" y1="593.00" x2="155.30" y2="602.50" stroke="#9a9a9a" stroke-width="1" />
<text x="1169.0" y="600.0" font-size="9" fill="#999" text-anchor="start" font-weight="normal" >‹</text>
<text x="1181.5" y="600.0" font-size="9" fill="#999" text-anchor="start" font-weight="normal" >›</text>
</svg></body></html>
